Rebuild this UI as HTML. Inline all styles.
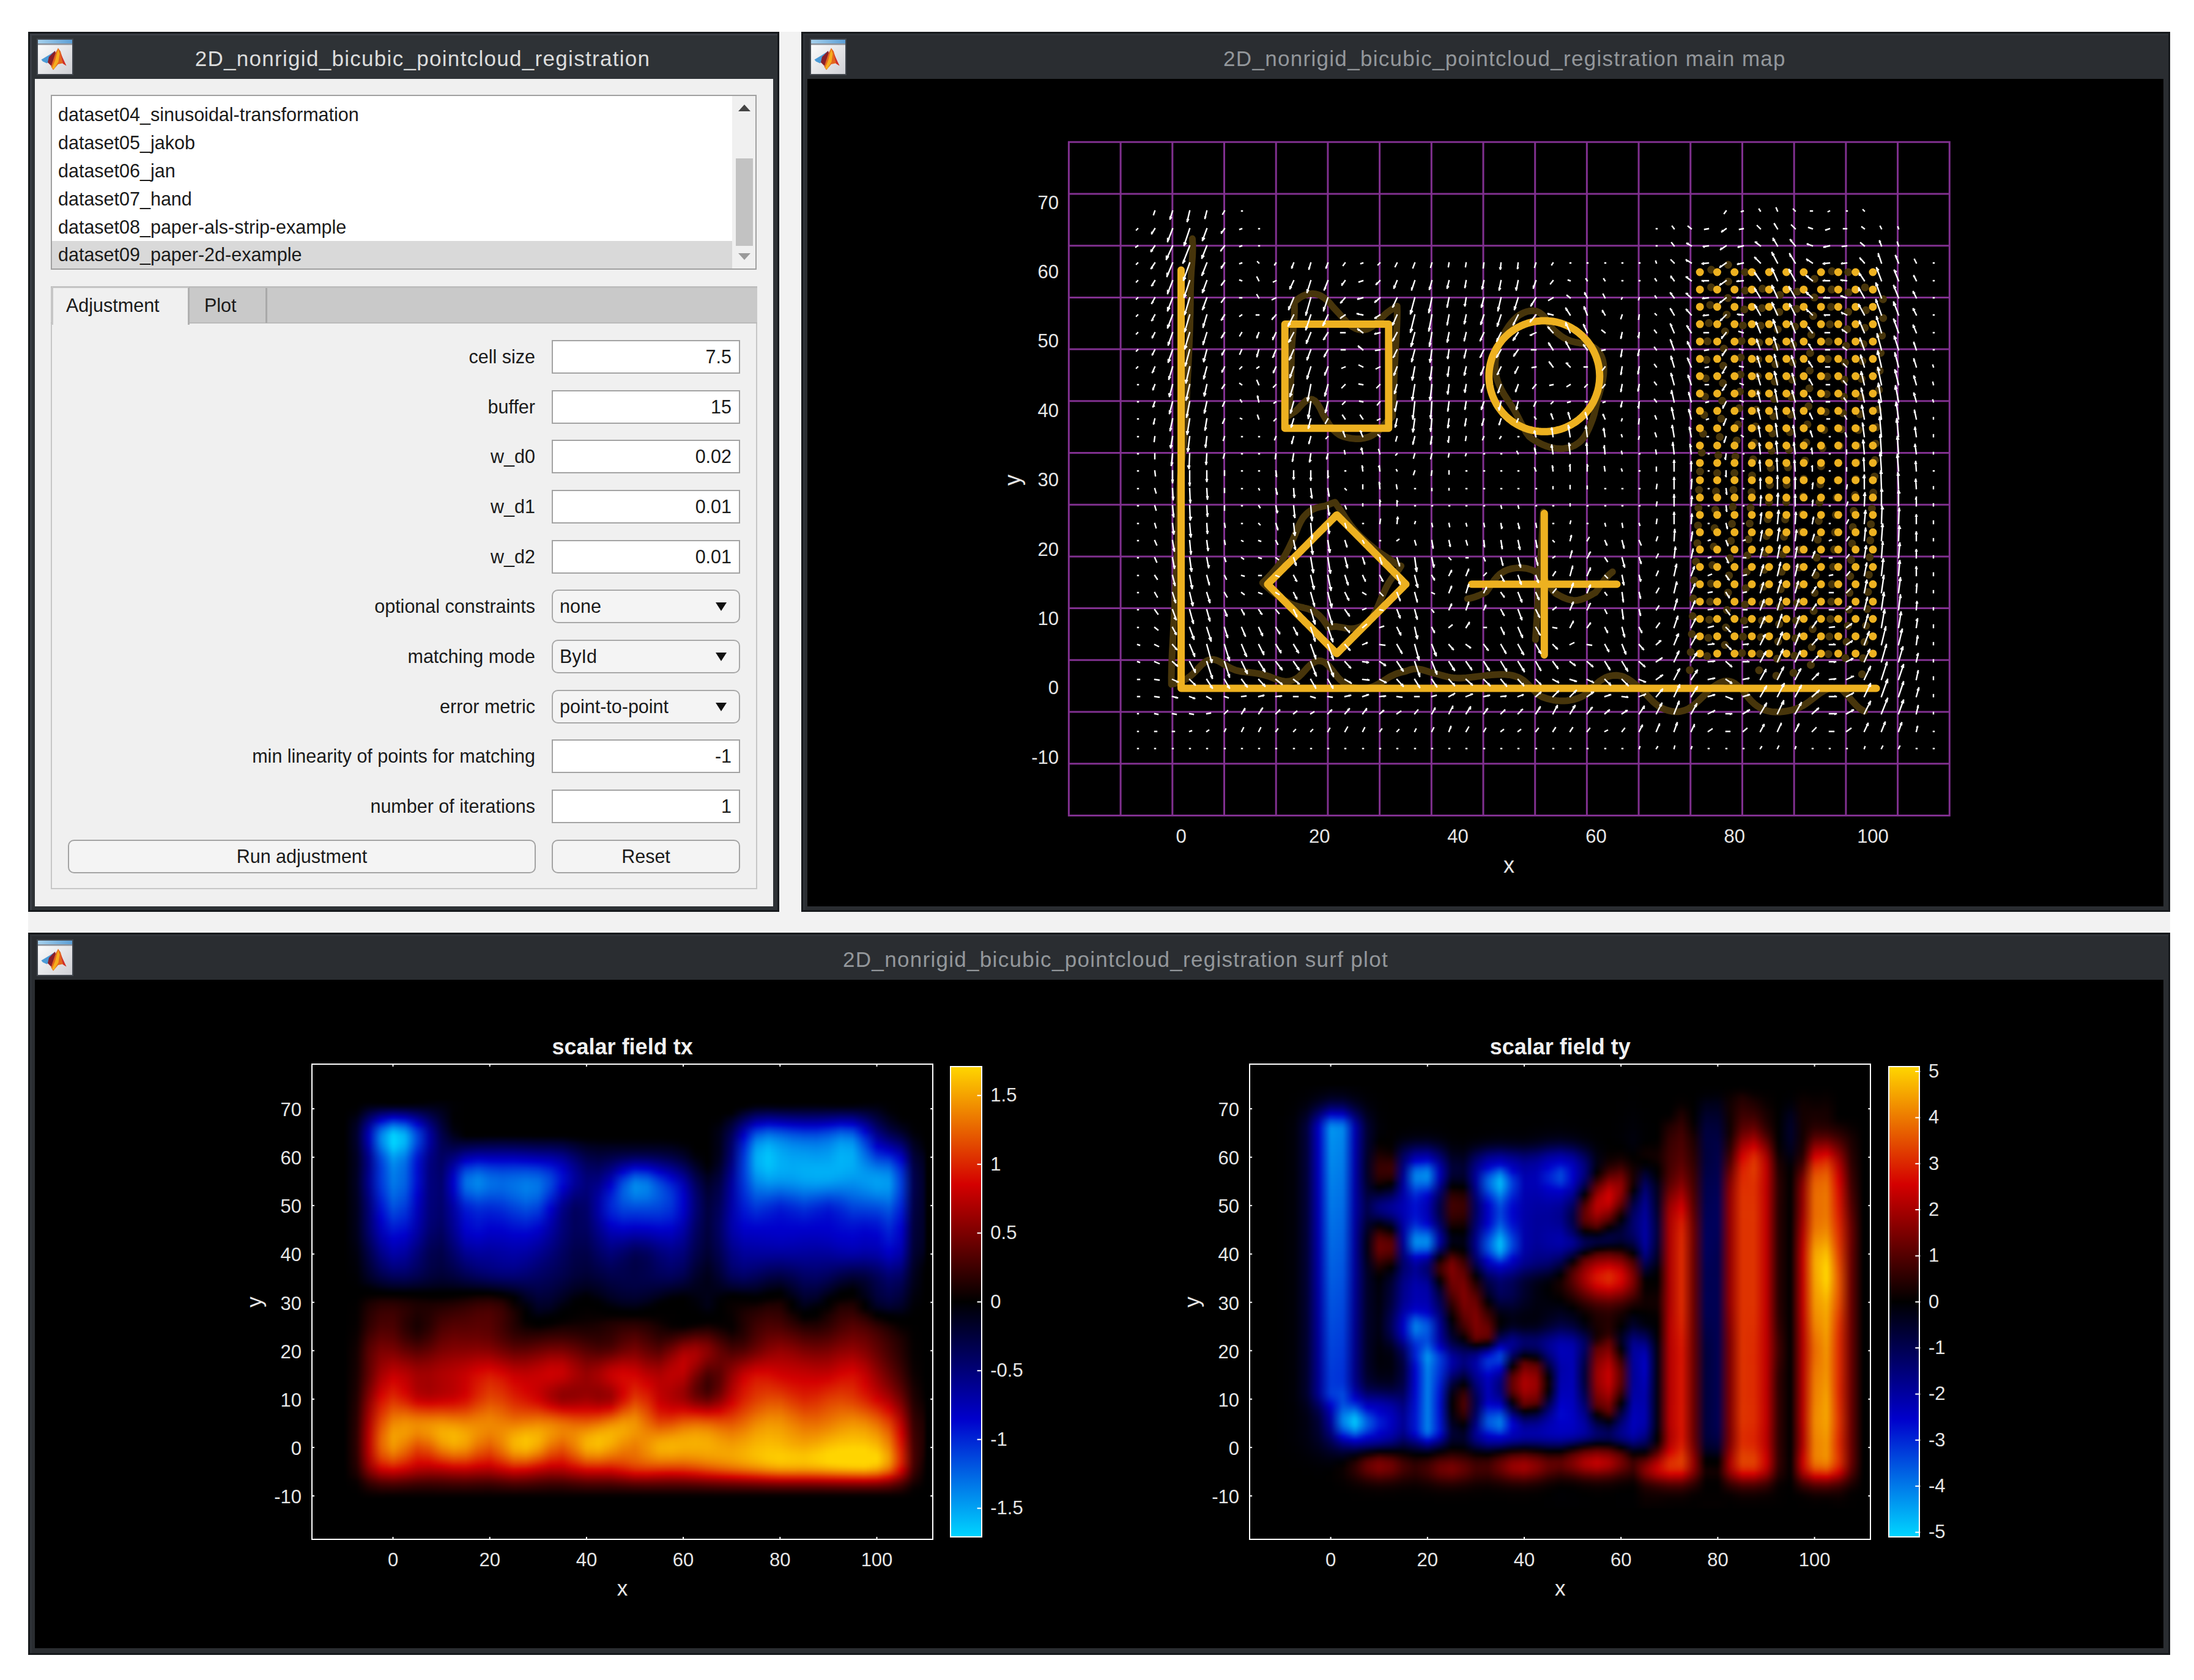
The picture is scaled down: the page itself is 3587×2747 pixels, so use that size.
<!DOCTYPE html>
<html><head><meta charset="utf-8">
<style>
*{box-sizing:border-box;margin:0;padding:0}
html,body{width:3587px;height:2747px;overflow:hidden;background:#fff;font-family:"Liberation Sans",sans-serif}
.abs{position:absolute}
.backdrop{position:absolute;left:46px;top:52px;width:3502px;height:2654px;background:#f2f2f2}
.win{position:absolute;background:#16191c}
.win .hl{position:absolute;left:3px;top:3px;right:3px;bottom:3px;background:#3a3e45}
.win .tb{position:absolute;left:6px;top:6px;right:3px;bottom:3px;background:#2e3236}
.win.inact .tb{background:#2a2d31}
.win.inact .hl{background:#2f3338}
.ttl{position:absolute;top:0;height:76px;line-height:76px;font-size:35px;letter-spacing:1.3px;color:#e2e3e3;white-space:nowrap;text-align:center}
.inact .ttl{color:#9da1a5}
.icon{position:absolute;width:57px;height:57px}
.content{position:absolute;background:#f0f0f0;overflow:hidden}
.ui{font-size:30.5px;color:#1a1a1a;white-space:nowrap}
.lbl{position:absolute;right:0;text-align:right}
.edit{position:absolute;left:845px;width:308px;height:54px;background:#fff;border:2px solid #a3a3a3;text-align:right;padding-right:12px;line-height:50px}
.pop{position:absolute;left:845px;width:308px;height:54px;background:#f4f4f4;border:2px solid #a8a8a8;border-radius:10px;line-height:50px;padding-left:12px}
.pop .arr{position:absolute;right:14px;top:18px;width:0;height:0;border-left:10px solid transparent;border-right:10px solid transparent;border-top:16px solid #111}
.btn{position:absolute;height:55px;background:#f4f4f4;border:2px solid #a3a3a3;border-radius:10px;text-align:center;line-height:51px}
.mt{font-size:31px;color:#e6e6e6;line-height:36px;white-space:nowrap}
.st{font-size:31px;color:#e6e6e6;line-height:32px;white-space:nowrap}
.stt{font-size:36px;font-weight:bold;color:#f0f0f0;line-height:40px;white-space:nowrap}
</style></head><body>
<div class="backdrop"></div>

<div class="win" style="left:46px;top:52px;width:1228px;height:1439px"><div class="hl"></div><div class="tb"></div></div><div class="ttl" style="left:-109px;width:1600px;top:58px;color:#dcdddd">2D_nonrigid_bicubic_pointcloud_registration</div><svg class="abs" style="left:59px;top:62px" width="62" height="62" viewBox="-3 -3 62 62">
<defs><linearGradient id="ig6265" x1="0" y1="0" x2="1" y2="1"><stop offset="0" stop-color="#ffffff"/><stop offset="1" stop-color="#cfd0d5"/></linearGradient>
<linearGradient id="ib6265" x1="0" y1="0" x2="1" y2="0"><stop offset="0" stop-color="#a6d0ec"/><stop offset="1" stop-color="#5d9fd6"/></linearGradient></defs>
<rect x="-2" y="-2" width="60" height="60" fill="#41464d"/>
<rect x="0" y="0" width="56" height="56" fill="url(#ig6265)"/>
<rect x="0" y="0" width="56" height="6" fill="url(#ib6265)"/>
<rect x="0" y="6" width="56" height="2.5" fill="#8d929b"/>
<polygon points="5.5,32.4 18,25 27,19 29.5,23 21,34 14.6,38.5 8,35.6" fill="#4b9ad6"/>
<polygon points="18,28 28,18 31,30 22,43 16,37" fill="#8a1f2a"/>
<polygon points="33,13.5 37,19 41,33 46.5,42.5 40,38.5 33,40 25,49.5 21.5,44 24,36 29,21" fill="#e4661e"/>
<polygon points="33,15 35.5,23 33.5,36 26,48.5 23,46 28,34 31,22" fill="#f4ad1e"/>
<polygon points="37,22 46.5,42.5 41,39" fill="#cf2f2a"/>
</svg><div class="content" style="left:57px;top:129px;width:1207px;height:1353px;background:#f0f0f0"></div>
<div class="win inact" style="left:1310px;top:52px;width:2238px;height:1439px"><div class="hl"></div><div class="tb"></div></div><div class="ttl" style="left:1660px;width:1600px;top:58px;color:#93979b">2D_nonrigid_bicubic_pointcloud_registration main map</div><svg class="abs" style="left:1323px;top:62px" width="62" height="62" viewBox="-3 -3 62 62">
<defs><linearGradient id="ig132665" x1="0" y1="0" x2="1" y2="1"><stop offset="0" stop-color="#ffffff"/><stop offset="1" stop-color="#cfd0d5"/></linearGradient>
<linearGradient id="ib132665" x1="0" y1="0" x2="1" y2="0"><stop offset="0" stop-color="#a6d0ec"/><stop offset="1" stop-color="#5d9fd6"/></linearGradient></defs>
<rect x="-2" y="-2" width="60" height="60" fill="#41464d"/>
<rect x="0" y="0" width="56" height="56" fill="url(#ig132665)"/>
<rect x="0" y="0" width="56" height="6" fill="url(#ib132665)"/>
<rect x="0" y="6" width="56" height="2.5" fill="#8d929b"/>
<polygon points="5.5,32.4 18,25 27,19 29.5,23 21,34 14.6,38.5 8,35.6" fill="#4b9ad6"/>
<polygon points="18,28 28,18 31,30 22,43 16,37" fill="#8a1f2a"/>
<polygon points="33,13.5 37,19 41,33 46.5,42.5 40,38.5 33,40 25,49.5 21.5,44 24,36 29,21" fill="#e4661e"/>
<polygon points="33,15 35.5,23 33.5,36 26,48.5 23,46 28,34 31,22" fill="#f4ad1e"/>
<polygon points="37,22 46.5,42.5 41,39" fill="#cf2f2a"/>
</svg><div class="content" style="left:1320px;top:129px;width:2217px;height:1353px;background:#000"></div>
<div class="win inact" style="left:46px;top:1525px;width:3502px;height:1181px"><div class="hl"></div><div class="tb"></div></div><div class="ttl" style="left:1024px;width:1600px;top:1531px;color:#93979b">2D_nonrigid_bicubic_pointcloud_registration surf plot</div><svg class="abs" style="left:59px;top:1535px" width="62" height="62" viewBox="-3 -3 62 62">
<defs><linearGradient id="ig621538" x1="0" y1="0" x2="1" y2="1"><stop offset="0" stop-color="#ffffff"/><stop offset="1" stop-color="#cfd0d5"/></linearGradient>
<linearGradient id="ib621538" x1="0" y1="0" x2="1" y2="0"><stop offset="0" stop-color="#a6d0ec"/><stop offset="1" stop-color="#5d9fd6"/></linearGradient></defs>
<rect x="-2" y="-2" width="60" height="60" fill="#41464d"/>
<rect x="0" y="0" width="56" height="56" fill="url(#ig621538)"/>
<rect x="0" y="0" width="56" height="6" fill="url(#ib621538)"/>
<rect x="0" y="6" width="56" height="2.5" fill="#8d929b"/>
<polygon points="5.5,32.4 18,25 27,19 29.5,23 21,34 14.6,38.5 8,35.6" fill="#4b9ad6"/>
<polygon points="18,28 28,18 31,30 22,43 16,37" fill="#8a1f2a"/>
<polygon points="33,13.5 37,19 41,33 46.5,42.5 40,38.5 33,40 25,49.5 21.5,44 24,36 29,21" fill="#e4661e"/>
<polygon points="33,15 35.5,23 33.5,36 26,48.5 23,46 28,34 31,22" fill="#f4ad1e"/>
<polygon points="37,22 46.5,42.5 41,39" fill="#cf2f2a"/>
</svg><div class="content" style="left:57px;top:1602px;width:3480px;height:1093px;background:#000"></div>
<div class="abs" style="left:83px;top:155px;width:1154px;height:286px;border:2px solid #a0a0a0;background:#fff"></div>
<div class="abs" style="left:85px;top:394px;width:1112px;height:45px;background:#d9d9d9"></div>
<div class="abs" style="left:1197px;top:157px;width:38px;height:282px;background:#f0f0f0"></div>
<div class="abs" style="left:1203px;top:259px;width:28px;height:143px;background:#c2c2c2"></div>
<div class="abs" style="left:1207px;top:171px;width:0;height:0;border-left:10px solid transparent;border-right:10px solid transparent;border-bottom:11px solid #444"></div>
<div class="abs" style="left:1207px;top:414px;width:0;height:0;border-left:10px solid transparent;border-right:10px solid transparent;border-top:11px solid #9a9a9a"></div>
<div class="abs ui" style="left:95px;top:169.4px;line-height:36px">dataset04_sinusoidal-transformation</div>
<div class="abs ui" style="left:95px;top:215.2px;line-height:36px">dataset05_jakob</div>
<div class="abs ui" style="left:95px;top:261.0px;line-height:36px">dataset06_jan</div>
<div class="abs ui" style="left:95px;top:306.8px;line-height:36px">dataset07_hand</div>
<div class="abs ui" style="left:95px;top:352.6px;line-height:36px">dataset08_paper-als-strip-example</div>
<div class="abs ui" style="left:95px;top:398.4px;line-height:36px">dataset09_paper-2d-example</div>
<div class="abs" style="left:83px;top:469px;width:1155px;height:985px;border:2px solid #c6c6c6;border-top:none"></div>
<div class="abs" style="left:83px;top:468px;width:1155px;height:61px;background:#c9c9c9;border-top:3px solid #bdbdbd;border-bottom:2px solid #bababa"></div>
<div class="abs" style="left:84px;top:469px;width:226px;height:62px;background:#f0f0f0;border-left:3px solid #c6c6c6;border-top:2px solid #c6c6c6;border-right:3px solid #b0b0b0"></div>
<div class="abs" style="left:434px;top:471px;width:3px;height:57px;background:#a9a9a9"></div>
<div class="abs ui" style="left:108px;top:480.7px;line-height:36px">Adjustment</div>
<div class="abs ui" style="left:334px;top:480.7px;line-height:36px">Plot</div>
<div class="abs ui" style="left:275px;width:600px;text-align:right;top:565.0px;line-height:36px">cell size</div>
<div class="abs ui" style="left:902px;top:556.0px;width:308px;height:55px;background:#fff;border:2px solid #a3a3a3;text-align:right;padding-right:12px;line-height:51px">7.5</div>
<div class="abs ui" style="left:275px;width:600px;text-align:right;top:646.6px;line-height:36px">buffer</div>
<div class="abs ui" style="left:902px;top:637.6px;width:308px;height:55px;background:#fff;border:2px solid #a3a3a3;text-align:right;padding-right:12px;line-height:51px">15</div>
<div class="abs ui" style="left:275px;width:600px;text-align:right;top:728.3px;line-height:36px">w_d0</div>
<div class="abs ui" style="left:902px;top:719.3px;width:308px;height:55px;background:#fff;border:2px solid #a3a3a3;text-align:right;padding-right:12px;line-height:51px">0.02</div>
<div class="abs ui" style="left:275px;width:600px;text-align:right;top:810.0px;line-height:36px">w_d1</div>
<div class="abs ui" style="left:902px;top:801.0px;width:308px;height:55px;background:#fff;border:2px solid #a3a3a3;text-align:right;padding-right:12px;line-height:51px">0.01</div>
<div class="abs ui" style="left:275px;width:600px;text-align:right;top:891.6px;line-height:36px">w_d2</div>
<div class="abs ui" style="left:902px;top:882.6px;width:308px;height:55px;background:#fff;border:2px solid #a3a3a3;text-align:right;padding-right:12px;line-height:51px">0.01</div>
<div class="abs ui" style="left:275px;width:600px;text-align:right;top:973.2px;line-height:36px">optional constraints</div>
<div class="abs ui" style="left:902px;top:964.2px;width:308px;height:55px;background:#f4f4f4;border:2px solid #a8a8a8;border-radius:10px;padding-left:11px;line-height:51px">none<div class="abs" style="left:266px;top:19px;width:0;height:0;border-left:9px solid transparent;border-right:9px solid transparent;border-top:14px solid #111"></div></div>
<div class="abs ui" style="left:275px;width:600px;text-align:right;top:1054.9px;line-height:36px">matching mode</div>
<div class="abs ui" style="left:902px;top:1045.9px;width:308px;height:55px;background:#f4f4f4;border:2px solid #a8a8a8;border-radius:10px;padding-left:11px;line-height:51px">ById<div class="abs" style="left:266px;top:19px;width:0;height:0;border-left:9px solid transparent;border-right:9px solid transparent;border-top:14px solid #111"></div></div>
<div class="abs ui" style="left:275px;width:600px;text-align:right;top:1136.6px;line-height:36px">error metric</div>
<div class="abs ui" style="left:902px;top:1127.6px;width:308px;height:55px;background:#f4f4f4;border:2px solid #a8a8a8;border-radius:10px;padding-left:11px;line-height:51px">point-to-point<div class="abs" style="left:266px;top:19px;width:0;height:0;border-left:9px solid transparent;border-right:9px solid transparent;border-top:14px solid #111"></div></div>
<div class="abs ui" style="left:275px;width:600px;text-align:right;top:1218.2px;line-height:36px">min linearity of points for matching</div>
<div class="abs ui" style="left:902px;top:1209.2px;width:308px;height:55px;background:#fff;border:2px solid #a3a3a3;text-align:right;padding-right:12px;line-height:51px">-1</div>
<div class="abs ui" style="left:275px;width:600px;text-align:right;top:1299.8px;line-height:36px">number of iterations</div>
<div class="abs ui" style="left:902px;top:1290.8px;width:308px;height:55px;background:#fff;border:2px solid #a3a3a3;text-align:right;padding-right:12px;line-height:51px">1</div>
<div class="abs ui" style="left:111px;top:1372.5px;width:765px;height:55px;background:#f4f4f4;border:2px solid #a3a3a3;border-radius:10px;text-align:center;line-height:51px">Run adjustment</div>
<div class="abs ui" style="left:902px;top:1372.5px;width:308px;height:55px;background:#f4f4f4;border:2px solid #a3a3a3;border-radius:10px;text-align:center;line-height:51px">Reset</div>
<svg class="abs" style="left:0;top:0" width="3587" height="1491" viewBox="0 0 3587 1491">
<path d="M1747.4 230.8V1334.9M1832.1 230.8V1334.9M1916.8 230.8V1334.9M2001.5 230.8V1334.9M2086.2 230.8V1334.9M2170.9 230.8V1334.9M2255.6 230.8V1334.9M2340.3 230.8V1334.9M2425.0 230.8V1334.9M2509.7 230.8V1334.9M2594.4 230.8V1334.9M2679.1 230.8V1334.9M2763.8 230.8V1334.9M2848.5 230.8V1334.9M2933.2 230.8V1334.9M3017.9 230.8V1334.9M3102.6 230.8V1334.9M3187.3 230.8V1334.9M1745.9 232.3H3188.8M1745.9 317.0H3188.8M1745.9 401.7H3188.8M1745.9 486.4H3188.8M1745.9 571.1H3188.8M1745.9 655.8H3188.8M1745.9 740.5H3188.8M1745.9 825.2H3188.8M1745.9 909.9H3188.8M1745.9 994.6H3188.8M1745.9 1079.3H3188.8M1745.9 1164.0H3188.8M1745.9 1248.7H3188.8M1745.9 1333.4H3188.8" stroke="#80308f" stroke-width="3" fill="none"/>
<path d="M1949.4 390.3 1949.7 395.1 1950.0 399.8 1950.0 404.5 1949.9 409.1 1949.8 413.8 1949.6 418.4 1949.3 423.0 1948.9 427.5 1948.6 432.1 1948.2 436.6 1947.9 441.2 1947.5 445.9 1947.3 450.5 1947.0 455.2 1946.9 459.8 1946.7 464.5 1946.6 469.1 1946.5 473.8 1946.4 478.4 1946.3 483.1 1946.3 487.8 1946.2 492.4 1946.2 497.1 1946.1 501.8 1946.0 506.4 1946.0 511.1 1945.9 515.7 1945.7 520.4 1945.6 525.0 1945.5 529.7 1945.4 534.4 1945.2 539.0 1945.0 543.7 1944.9 548.3 1944.7 553.0 1944.5 557.6 1944.3 562.3 1944.1 566.9 1943.9 571.6 1943.7 576.2 1943.5 580.9 1943.3 585.6 1943.1 590.2 1942.8 594.9 1942.6 599.5 1942.4 604.2 1942.1 608.8 1941.9 613.5 1941.7 618.2 1941.4 622.9 1941.2 627.6 1941.0 632.3 1940.7 637.0 1940.5 641.7 1940.3 646.4 1940.0 651.1 1939.8 655.8 1939.6 660.5 1939.3 665.2 1939.1 669.9 1938.8 674.6 1938.6 679.3 1938.3 684.0 1938.0 688.7 1937.8 693.4 1937.5 698.1 1937.1 702.9 1936.8 707.6 1936.4 712.4 1936.0 717.1 1935.6 721.9 1935.2 726.8 1934.7 731.6 1934.2 736.4 1933.7 741.2 1933.1 746.1 1932.6 750.9 1931.9 755.8 1931.3 760.6 1931.0 765.3 1930.7 770.2 1930.2 775.1 1929.7 779.9 1929.3 784.8 1929.0 789.6 1928.8 794.3 1928.6 799.1 1928.4 803.8 1928.2 808.5 1928.1 813.3 1928.0 818.0 1927.9 822.7 1927.8 827.4 1927.7 832.1 1927.6 836.7 1927.5 841.4 1927.4 846.2 1927.3 850.9 1927.1 855.6 1927.0 860.3 1926.8 865.1 1926.6 869.8 1926.4 874.5 1926.2 879.3 1926.0 884.1 1925.7 888.8 1925.5 893.6 1925.3 898.4 1925.0 903.2 1924.7 907.9 1924.5 912.7 1924.2 917.5 1923.9 922.3 1923.7 927.1 1923.4 931.9 1923.1 936.7 1922.9 941.5 1922.6 946.3 1922.4 951.0 1922.2 955.8 1921.9 960.5 1921.7 965.3 1921.5 970.0 1921.3 974.7 1921.1 979.3 1920.9 984.0 1920.7 988.6 1920.4 993.3 1920.2 998.5 1919.9 1004.3 1919.5 1010.9 1919.1 1017.9 1918.7 1025.1 1918.3 1032.1 1918.0 1038.7 1917.6 1044.9 1917.3 1050.7 1917.0 1056.3 1916.7 1061.6 1916.4 1066.9 1916.2 1072.0 1916.0 1077.1 1915.7 1082.2 1915.6 1087.4 1915.4 1092.6 1915.3 1097.8 1915.2 1103.0 1915.1 1108.3 1915.2 1113.7 1915.2 1119.0 1915.2 1119.0 1919.4 1118.0 1923.6 1116.9 1927.9 1115.5 1932.2 1113.8 1936.7 1111.6 1941.3 1108.9 1945.9 1105.6 1950.5 1101.6 1955.1 1097.0 1959.8 1092.0 1964.4 1087.1 1969.1 1083.1 1973.7 1080.1 1978.3 1078.5 1983.0 1078.2 1987.6 1079.1 1992.2 1080.9 1996.7 1083.4 2001.3 1086.2 2005.7 1088.9 2010.2 1091.5 2014.6 1093.7 2019.0 1095.4 2023.3 1096.7 2027.6 1097.7 2031.9 1098.3 2036.2 1098.8 2040.6 1099.3 2044.9 1099.8 2049.3 1100.3 2053.7 1100.9 2058.1 1101.7 2062.6 1102.7 2067.1 1103.8 2071.6 1105.1 2076.2 1106.6 2080.8 1108.4 2085.4 1110.1 2090.1 1111.8 2094.8 1113.1 2099.6 1114.0 2104.3 1114.2 2109.1 1113.7 2113.9 1112.3 2118.6 1110.0 2123.3 1106.7 2128.0 1102.3 2132.6 1097.3 2137.1 1092.2 2141.7 1087.6 2146.2 1084.0 2150.8 1081.6 2155.3 1080.5 2159.9 1080.8 2164.4 1082.4 2169.0 1085.7 2173.5 1090.2 2178.0 1095.7 2182.4 1101.4 2186.7 1106.8 2191.0 1111.4 2195.3 1115.3 2199.6 1118.4 2203.8 1120.8 2208.1 1122.8 2212.4 1124.1 2216.7 1125.0 2221.1 1125.6 2225.5 1125.9 2229.9 1125.8 2234.3 1125.3 2238.8 1124.4 2243.3 1123.1 2247.8 1121.3 2252.4 1119.0 2257.0 1116.3 2261.6 1113.3 2266.3 1110.3 2271.0 1107.4 2275.8 1104.9 2280.5 1102.7 2285.3 1100.9 2290.1 1099.5 2294.9 1098.3 2299.6 1097.1 2304.4 1095.4 2309.1 1094.1 2313.8 1093.6 2318.5 1093.8 2323.2 1094.6 2327.8 1095.9 2332.4 1097.3 2336.9 1098.7 2341.3 1099.9 2345.7 1101.1 2350.1 1102.3 2354.4 1103.5 2358.6 1104.6 2362.9 1105.8 2367.1 1106.9 2371.4 1107.7 2375.6 1108.2 2379.9 1108.6 2384.2 1108.7 2388.5 1108.7 2392.9 1108.5 2397.4 1108.2 2401.8 1107.7 2406.3 1107.3 2410.8 1106.7 2415.4 1106.1 2419.9 1105.6 2424.5 1105.1 2429.1 1104.6 2433.8 1104.1 2438.4 1103.6 2443.1 1103.3 2447.8 1103.0 2452.5 1102.8 2457.2 1102.8 2461.9 1103.0 2466.7 1103.4 2471.4 1104.1 2476.2 1105.3 2481.0 1107.1 2485.8 1109.3 2490.5 1112.4 2495.2 1116.2 2499.8 1120.5 2504.3 1125.1 2508.8 1129.8 2513.2 1134.2 2517.6 1137.5 2522.0 1139.8 2526.4 1141.3 2530.7 1142.7 2535.1 1143.7 2539.5 1144.7 2543.9 1145.4 2548.4 1145.8 2552.8 1146.0 2557.2 1146.0 2561.7 1145.7 2566.1 1145.2 2570.6 1144.4 2575.1 1143.2 2579.5 1141.8 2583.9 1140.2 2588.4 1137.9 2592.8 1134.7 2597.3 1130.6 2601.7 1126.2 2606.3 1121.7 2610.8 1117.6 2615.3 1113.8 2619.9 1110.7 2624.4 1108.2 2629.0 1106.3 2633.5 1105.1 2638.1 1104.4 2642.6 1104.3 2647.1 1104.8 2651.6 1105.7 2656.1 1107.3 2660.7 1109.6 2665.2 1112.5 2669.8 1115.9 2674.3 1119.6 2678.9 1123.5 2683.5 1126.2 2688.1 1131.9 2692.7 1137.0 2697.4 1142.0 2702.0 1146.8 2706.7 1150.9 2711.4 1154.4 2716.0 1157.2 2720.6 1159.4 2725.3 1161.1 2729.8 1162.4 2734.4 1163.3 2738.8 1163.8 2743.3 1163.7 2747.7 1163.2 2752.0 1162.2 2756.3 1160.7 2760.6 1158.6 2764.8 1155.9 2769.1 1152.9 2773.3 1149.3 2777.7 1145.3 2782.1 1141.1 2786.6 1136.7 2791.1 1132.0 2795.7 1126.2 2800.2 1123.6 2804.8 1120.6 2809.4 1117.7 2814.0 1115.4 2818.6 1113.9 2823.2 1113.5 2827.7 1113.9 2832.3 1115.3 2836.8 1117.8 2841.2 1121.4 2845.7 1124.5 2850.1 1129.5 2854.4 1136.1 2858.8 1141.3 2863.3 1146.3 2867.8 1150.6 2872.4 1154.2 2877.1 1157.2 2881.7 1159.6 2886.3 1161.5 2890.9 1162.7 2895.5 1163.6 2900.0 1164.1 2904.5 1164.3 2909.0 1164.2 2913.4 1163.8 2917.8 1163.2 2922.3 1162.5 2926.6 1161.6 2931.0 1160.6 2935.4 1159.3 2939.7 1157.7 2944.2 1155.7 2948.6 1153.4 2953.2 1150.4 2957.7 1147.1 2962.2 1143.7 2966.8 1140.1 2971.3 1136.7 2975.8 1133.4 2980.4 1130.5 2985.0 1127.9 2989.6 1126.0 2994.1 1125.4 2998.6 1125.4 3003.2 1125.4 3007.7 1126.0 3012.1 1128.0 3016.6 1133.0 3021.1 1137.8 3025.6 1143.0 3030.2 1148.3 3034.7 1153.2 3039.2 1157.4 3043.7 1160.6 3048.3 1163.1M2107.3 679.5 2112.1 676.2 2117.0 673.1 2121.8 668.8 2126.6 663.4 2131.4 658.5 2136.1 654.6 2140.7 652.7 2145.2 652.9 2149.7 655.3 2154.1 660.3 2158.5 668.0 2162.9 677.4 2167.3 684.8 2171.7 691.9 2176.2 698.2 2180.6 703.4 2185.0 707.6 2189.5 710.9 2194.0 713.0 2198.5 714.5 2203.0 715.6 2207.5 716.5 2212.1 717.1 2216.6 717.5 2221.2 717.5 2225.7 717.2 2230.3 716.4 2234.9 715.2 2239.4 713.7 2244.0 711.5 2248.6 708.5 2253.3 704.8 2257.9 700.2 2262.6 695.1 2267.2 690.0 2271.9 685.3 2276.5 681.1 2276.5 681.1 2276.7 675.1 2276.9 669.3 2277.2 663.7 2277.4 658.4 2277.6 653.3 2277.9 648.5 2278.1 643.8 2278.3 639.3 2278.5 634.9 2278.7 630.5 2278.9 626.2 2279.1 622.0 2279.3 617.7 2279.5 613.4 2279.7 609.1 2279.9 604.8 2280.1 600.5 2280.3 596.0 2280.5 591.6 2280.8 587.1 2281.0 582.5 2281.2 577.8 2281.5 573.1 2281.7 568.3 2282.0 563.4 2282.3 558.4 2282.6 553.3 2282.9 548.1 2283.2 542.7 2283.5 537.3 2283.8 531.9 2284.0 526.3 2284.2 520.6 2284.3 515.0 2284.4 509.7 2284.3 504.9 2284.2 500.4 2284.2 500.4 2280.0 503.3 2275.7 505.6 2271.4 508.5 2267.0 511.9 2262.6 515.9 2258.1 520.5 2253.5 525.3 2248.8 529.8 2244.0 533.5 2239.3 536.4 2234.6 538.4 2229.8 539.4 2225.1 539.6 2220.4 538.7 2215.8 537.0 2211.2 534.5 2206.6 531.3 2202.1 527.1 2197.5 522.3 2193.0 517.0 2188.4 511.7 2183.8 506.7 2179.2 501.9 2174.4 496.0 2169.7 491.0 2164.9 487.1 2160.2 484.1 2155.6 482.0 2151.0 480.7 2146.6 480.1 2142.1 480.4 2137.7 481.2 2133.3 482.6 2129.0 484.4 2124.7 487.0 2120.5 490.1 2116.1 494.0 2116.1 494.0 2116.3 498.6 2116.4 503.9 2116.4 509.6 2116.1 515.6 2115.8 521.6 2115.4 527.3 2114.9 532.7 2114.4 537.9 2114.0 542.9 2113.5 547.7 2113.1 552.4 2112.7 557.1 2112.4 561.7 2112.1 566.4 2111.9 571.0 2111.7 575.7 2111.6 580.3 2111.4 585.0 2111.3 589.6 2111.2 594.2 2111.1 598.7 2111.0 603.1 2110.9 607.4 2110.8 611.5 2110.7 615.7 2110.5 619.8 2110.3 624.0 2110.1 628.3 2109.9 632.8 2109.7 637.6 2109.4 642.8 2109.0 648.5 2108.7 654.6 2108.3 660.9 2107.9 667.2 2107.6 673.4 2107.3 679.5M2622.1 606.4 2622.1 602.2 2621.9 598.1 2621.4 594.3 2620.8 590.6 2619.9 587.2 2618.7 583.9 2617.4 580.9 2615.9 578.2 2614.1 575.6 2612.1 573.3 2610.0 571.2 2607.6 569.3 2605.0 567.6 2602.2 566.2 2599.3 564.9 2596.2 563.7 2592.8 562.7 2589.4 561.9 2585.7 561.2 2581.9 560.7 2578.0 560.0 2573.9 559.2 2569.7 558.2 2565.5 556.6 2561.1 554.7 2556.7 552.4 2552.3 549.5 2547.9 546.1 2543.5 542.4 2539.1 538.6 2534.8 532.8 2530.4 525.7 2526.0 519.4 2521.5 514.6 2517.0 511.3 2512.6 509.2 2508.2 508.2 2503.8 508.2 2499.5 508.7 2495.3 509.8 2491.1 511.4 2487.0 513.5 2483.0 515.9 2479.1 519.2 2475.4 522.7 2471.8 526.7 2468.4 530.9 2465.2 535.5 2462.2 540.1 2459.4 544.9 2456.9 549.8 2454.6 554.7 2452.6 559.6 2450.8 564.5 2449.2 569.3 2447.8 574.1 2446.7 578.9 2445.8 583.7 2445.1 588.4 2444.7 593.1 2444.5 597.7 2444.6 602.3 2445.0 606.8 2445.6 611.2 2446.4 615.5 2447.5 619.8 2448.8 624.0 2450.4 628.1 2452.2 632.2 2454.1 636.2 2456.3 640.2 2458.6 644.2 2461.2 648.2 2463.9 652.4 2466.7 656.7 2469.7 661.2 2472.9 666.1 2476.2 671.5 2479.6 677.6 2483.3 684.6 2487.2 692.4 2491.4 700.4 2495.7 708.0 2500.2 713.8 2504.8 717.4 2509.4 720.3 2514.2 723.1 2518.9 725.5 2523.7 727.7 2528.4 729.5 2533.2 731.0 2537.9 732.2 2542.6 733.1 2547.3 733.6 2551.9 733.7 2556.5 733.4 2561.0 732.8 2565.4 731.8 2569.8 730.3 2574.1 728.5 2578.3 725.9 2582.3 723.0 2586.3 719.2 2590.1 714.4 2593.7 708.6 2597.2 701.8 2600.4 694.2 2603.5 686.3 2606.3 677.6 2609.1 665.6 2611.5 655.1 2613.7 647.2 2615.6 640.8 2617.2 635.0 2618.6 629.7 2619.8 624.8 2620.7 620.0 2621.4 615.3 2621.9 610.8 2622.1 606.4M2182.5 821.3 2185.8 825.9 2189.2 830.7 2192.6 835.7 2195.9 840.8 2199.2 845.9 2202.5 850.9 2205.8 855.5 2209.0 859.9 2212.1 863.9 2215.3 867.6 2218.4 871.1 2221.5 874.3 2224.6 877.4 2227.7 880.3 2230.7 883.1 2233.7 885.9 2236.8 888.5 2239.8 891.1 2242.8 893.6 2245.8 896.1 2248.8 898.5 2251.8 900.7 2254.8 903.0 2257.8 905.1 2260.8 907.2 2263.8 909.2 2266.7 911.0 2269.7 913.1 2272.7 915.0 2275.6 916.9 2278.6 919.0 2281.5 921.1 2284.5 922.7 2287.5 924.5 2290.6 925.3 2290.6 925.3 2287.0 931.1 2283.6 935.3 2280.2 939.3 2276.9 943.5 2273.5 948.3 2270.2 953.5 2266.9 959.5 2263.6 966.2 2260.3 973.6 2256.9 981.6 2253.5 990.0 2250.1 997.5 2246.5 1004.2 2243.0 1009.5 2239.4 1013.7 2235.9 1017.3 2232.4 1019.9 2229.0 1022.2 2225.6 1024.1 2222.2 1025.5 2218.8 1026.7 2215.4 1027.4 2212.0 1027.8 2208.7 1028.0 2205.3 1027.8 2202.0 1027.4 2198.7 1026.8 2195.3 1026.2 2192.0 1025.6 2188.6 1025.1 2185.3 1024.6 2181.9 1024.6 2178.6 1024.7 2175.2 1025.3 2171.8 1026.3 2171.8 1026.3 2168.8 1021.3 2165.8 1017.0 2162.7 1012.8 2159.6 1009.4 2156.6 1006.2 2153.5 1003.6 2150.5 1001.3 2147.4 999.5 2144.3 997.9 2141.3 996.6 2138.2 995.6 2135.2 994.7 2132.2 994.0 2129.1 993.2 2126.1 992.5 2123.1 991.8 2120.0 990.9 2117.0 990.0 2114.0 988.8 2110.9 987.6 2107.9 986.1 2104.8 984.5 2101.8 982.8 2098.7 980.9 2095.6 978.9 2092.5 976.6 2089.4 974.4 2086.2 972.0 2083.1 969.5 2079.9 966.9 2076.8 964.3 2073.6 961.6 2070.4 958.8 2067.3 955.9 2064.2 953.0 2064.2 953.0 2067.4 949.9 2070.6 946.7 2073.9 943.3 2077.2 939.9 2080.5 936.2 2083.9 932.4 2087.3 928.2 2090.7 923.7 2094.2 918.7 2097.7 913.2 2101.2 907.3 2104.8 900.6 2108.4 893.4 2112.0 885.8 2115.6 878.2 2119.1 869.9 2122.6 861.1 2126.1 853.7 2129.5 847.7 2132.8 843.5 2136.1 840.1 2139.4 837.3 2142.7 835.0 2145.9 833.1 2149.2 831.7 2152.5 830.4 2155.8 829.5 2159.1 828.7 2162.4 828.0 2165.7 827.4 2169.0 826.5 2172.4 825.0 2175.7 823.6 2179.1 822.3 2182.5 821.3M2523.2 837.2 2523.0 841.0 2522.8 844.7 2522.6 848.3 2522.4 851.8 2522.3 855.3 2522.1 858.7 2521.9 862.0 2521.8 865.4 2521.6 868.9 2521.4 872.4 2521.2 876.1 2521.0 879.9 2520.8 884.0 2520.6 888.2 2520.3 892.6 2520.0 897.1 2519.7 901.8 2519.4 906.5 2519.1 911.2 2518.7 916.0 2518.4 920.7 2518.0 925.5 2517.7 930.1 2517.3 934.8 2517.0 939.3 2516.7 943.9 2516.4 948.4 2516.1 952.8 2515.8 957.2 2515.5 961.6 2515.2 966.0 2515.0 970.3 2514.8 974.7 2514.5 978.9 2514.3 983.2 2514.1 987.4 2513.8 991.6 2513.6 995.8 2513.4 1000.0 2513.1 1004.2 2512.9 1008.4 2512.6 1012.6 2512.3 1016.8 2512.0 1020.9 2511.8 1025.1 2511.5 1029.2 2511.2 1033.4 2510.9 1037.6 2510.6 1041.8 2510.3 1046.0M2399.2 979.1 2403.6 978.3 2408.1 977.1 2412.5 975.7 2416.9 974.0 2421.2 972.2 2425.5 970.3 2429.7 967.8 2433.9 962.4 2438.2 955.4 2442.8 948.8 2447.5 943.3 2452.2 938.8 2457.0 935.4 2461.7 933.0 2466.3 931.2 2471.0 929.9 2475.6 929.1 2480.2 928.6 2484.8 928.5 2489.4 928.7 2494.0 929.2 2498.6 930.2 2503.3 931.5 2507.9 933.4 2512.5 936.0 2517.0 939.3 2521.5 943.4 2525.9 948.3 2530.3 954.1 2534.6 960.6 2539.0 966.2 2543.6 970.4 2548.2 973.0 2552.9 975.5 2557.5 977.7 2562.1 979.5 2566.7 980.7 2571.3 981.5 2575.9 981.7 2580.5 981.2 2585.1 980.1 2589.6 978.5 2594.2 976.5 2598.8 974.1 2603.5 971.6 2608.2 968.9 2612.8 963.3 2617.4 956.4 2622.0 949.8 2626.7 943.9 2631.5 938.9 2636.3 934.9" stroke="#47350b" stroke-width="11" fill="none" stroke-linecap="round" stroke-linejoin="round"/>
<path d="M2762.7 1095.7h0M2764.2 1066.3h0M2766.0 1036.8h0M2767.4 1007.5h0M2768.3 978.6h0M2769.8 949.0h0M2772.7 918.4h0M2775.0 888.3h0M2776.1 859.2h0M2776.8 830.4h0M2777.8 801.1h0M2779.4 771.1h0M2782.2 739.9h0M2784.4 709.1h0M2786.2 678.4h0M2787.6 648.5h0M2788.7 618.7h0M2790.0 588.3h0M2791.6 558.1h0M2793.8 528.3h0M2796.0 498.7h0M2797.6 469.7h0M2797.8 441.0h0M2791.1 1072.8h0M2792.9 1043.0h0M2794.6 1013.2h0M2795.8 983.8h0M2797.4 954.2h0M2799.7 924.1h0M2801.8 893.8h0M2803.2 863.6h0M2804.4 833.4h0M2805.5 803.6h0M2807.5 773.6h0M2809.3 744.4h0M2811.7 714.5h0M2814.0 684.6h0M2815.7 655.3h0M2816.8 626.4h0M2817.5 598.1h0M2818.5 570.0h0M2820.4 542.1h0M2823.0 514.4h0M2824.9 487.3h0M2825.5 460.4h0M2825.3 433.0h0M2820.0 1054.6h0M2821.7 1026.0h0M2823.5 997.5h0M2825.2 969.1h0M2826.8 940.9h0M2828.3 912.8h0M2829.9 884.5h0M2831.6 856.6h0M2832.9 828.8h0M2834.0 800.9h0M2835.6 773.5h0M2837.2 746.5h0M2839.4 720.2h0M2841.5 694.0h0M2843.4 667.6h0M2844.7 640.3h0M2845.5 612.4h0M2846.0 584.5h0M2847.2 557.7h0M2849.4 532.2h0M2851.9 505.9h0M2853.1 475.1h0M2852.9 445.0h0M2848.1 1067.8h0M2849.6 1041.1h0M2851.4 1014.8h0M2853.0 988.4h0M2854.4 961.7h0M2855.7 934.7h0M2857.0 907.9h0M2858.7 881.8h0M2860.5 856.0h0M2862.1 830.3h0M2863.7 804.6h0M2864.5 777.6h0M2866.4 751.0h0M2868.1 724.1h0M2869.9 697.3h0M2871.5 670.1h0M2872.8 642.7h0M2873.7 615.1h0M2874.6 587.6h0M2876.1 560.1h0M2878.5 532.4h0M2880.8 503.7h0M2881.5 472.0h0M2876.0 1096.0h0M2877.3 1069.1h0M2878.9 1042.1h0M2880.7 1014.7h0M2882.0 987.0h0M2883.1 959.2h0M2884.4 931.6h0M2886.2 904.1h0M2888.2 876.5h0M2890.1 848.8h0M2892.2 821.2h0M2893.6 793.0h0M2895.1 764.9h0M2896.5 736.8h0M2897.9 708.7h0M2899.3 680.4h0M2900.5 652.1h0M2901.6 623.8h0M2902.7 595.6h0M2904.0 567.3h0M2906.4 538.7h0M2908.9 510.2h0M2910.0 482.2h0M2904.1 1104.9h0M2905.6 1077.1h0M2907.2 1049.1h0M2908.8 1020.4h0M2910.1 991.8h0M2911.3 963.3h0M2912.9 934.8h0M2914.7 906.2h0M2916.7 877.6h0M2918.6 849.2h0M2920.3 820.9h0M2921.1 792.7h0M2923.1 764.1h0M2924.8 735.4h0M2926.3 706.7h0M2927.6 678.0h0M2928.9 649.3h0M2930.0 620.7h0M2930.7 592.3h0M2931.8 563.6h0M2934.6 534.1h0M2937.4 505.0h0M2938.3 476.9h0M2932.2 1100.2h0M2933.8 1072.2h0M2935.3 1043.7h0M2936.7 1014.7h0M2938.2 985.9h0M2939.9 956.9h0M2941.6 927.8h0M2943.3 898.8h0M2945.2 869.7h0M2946.8 840.7h0M2947.9 811.8h0M2948.9 782.9h0M2950.9 753.2h0M2953.1 723.5h0M2955.0 693.9h0M2956.7 664.3h0M2958.1 634.9h0M2958.8 606.0h0M2959.4 577.2h0M2961.3 547.3h0M2964.4 516.6h0M2966.3 486.3h0M2966.5 455.9h0M2960.6 1087.2h0M2962.1 1058.1h0M2963.6 1028.6h0M2965.2 999.0h0M2966.8 969.4h0M2968.5 940.4h0M2970.1 911.8h0M2971.9 882.3h0M2973.5 851.7h0M2974.7 821.6h0M2975.9 791.9h0M2977.3 762.5h0M2979.6 732.8h0M2982.3 702.9h0M2984.9 673.4h0M2986.4 644.4h0M2987.3 615.7h0M2988.2 587.1h0M2989.7 558.6h0M2991.7 530.3h0M2993.6 501.7h0M2994.7 473.3h0M2995.0 443.5h0M2989.2 1069.4h0M2990.9 1040.8h0M2992.7 1012.2h0M2994.0 983.7h0M2995.2 955.3h0M2996.9 927.0h0M2998.7 898.6h0M3000.2 870.3h0M3001.5 841.9h0M3002.9 813.6h0M3004.3 785.2h0M3005.5 756.9h0M3007.7 729.2h0M3010.4 701.7h0M3013.0 675.6h0M3014.5 648.7h0M3015.3 620.8h0M3016.5 593.0h0M3018.2 565.4h0M3020.0 538.2h0M3021.6 510.1h0M3022.3 478.1h0M3021.7 444.9h0M3017.0 1076.0h0M3019.0 1049.6h0M3021.1 1023.3h0M3022.7 996.6h0M3023.7 969.3h0M3024.9 942.2h0M3026.5 915.6h0M3028.0 888.8h0M3029.2 861.8h0M3030.6 835.3h0M3032.6 809.6h0M3034.1 783.3h0M3035.3 756.3h0M3036.5 729.1h0M3038.6 703.1h0M3040.9 677.3h0M3042.4 649.2h0M3043.4 619.4h0M3044.8 590.4h0M3046.6 562.6h0M3048.8 535.9h0M3050.5 507.3h0M3049.1 469.9h0M3044.3 1102.5h0M3046.0 1076.2h0M3048.3 1049.8h0M3050.8 1023.1h0M3052.8 995.8h0M3054.1 968.0h0M3055.4 939.7h0M3056.7 911.2h0M3057.7 883.6h0M3058.7 857.2h0M3060.5 831.4h0M3062.6 805.5h0M3064.7 779.2h0M3065.4 752.3h0M3066.3 725.4h0M3068.2 698.5h0M3070.4 669.6h0M3071.9 637.7h0M3073.1 606.2h0M3074.7 577.0h0M3076.8 548.7h0M3078.7 520.0h0M3078.5 489.2h0" stroke="#47350b" stroke-width="13" stroke-linecap="round"/>
<path d="M1931.0 441.6 1931.0 446.2 1931.0 450.7 1931.0 455.3 1931.0 459.8 1931.0 464.4 1931.0 469.0 1931.0 473.5 1931.0 478.1 1931.0 482.6 1931.0 487.2 1931.0 491.7 1931.0 496.3 1931.0 500.9 1931.0 505.4 1931.0 510.0 1931.0 514.5 1931.0 519.1 1931.0 523.7 1931.0 528.2 1931.0 532.8 1931.0 537.3 1931.0 541.9 1931.0 546.4 1931.0 551.0 1931.0 555.6 1931.0 560.1 1931.0 564.7 1931.0 569.2 1931.0 573.8 1931.0 578.4 1931.0 582.9 1931.0 587.5 1931.0 592.0 1931.0 596.6 1931.0 601.2 1931.0 605.7 1931.0 610.3 1931.0 614.8 1931.0 619.4 1931.0 623.9 1931.0 628.5 1931.0 633.1 1931.0 637.6 1931.0 642.2 1931.0 646.7 1931.0 651.3 1931.0 655.9 1931.0 660.4 1931.0 665.0 1931.0 669.5 1931.0 674.1 1931.0 678.6 1931.0 683.2 1931.0 687.8 1931.0 692.3 1931.0 696.9 1931.0 701.4 1931.0 706.0 1931.0 710.6 1931.0 715.1 1931.0 719.7 1931.0 724.2 1931.0 728.8 1931.0 733.4 1931.0 737.9 1931.0 742.5 1931.0 747.0 1931.0 751.6 1931.0 756.1 1931.0 760.7 1931.0 765.3 1931.0 769.8 1931.0 774.4 1931.0 778.9 1931.0 783.5 1931.0 788.1 1931.0 792.6 1931.0 797.2 1931.0 801.7 1931.0 806.3 1931.0 810.9 1931.0 815.4 1931.0 820.0 1931.0 824.5 1931.0 829.1 1931.0 833.6 1931.0 838.2 1931.0 842.8 1931.0 847.3 1931.0 851.9 1931.0 856.4 1931.0 861.0 1931.0 865.6 1931.0 870.1 1931.0 874.7 1931.0 879.2 1931.0 883.8 1931.0 888.3 1931.0 892.9 1931.0 897.5 1931.0 902.0 1931.0 906.6 1931.0 911.1 1931.0 915.7 1931.0 920.3 1931.0 924.8 1931.0 929.4 1931.0 933.9 1931.0 938.5 1931.0 943.1 1931.0 947.6 1931.0 952.2 1931.0 956.7 1931.0 961.3 1931.0 965.8 1931.0 970.4 1931.0 975.0 1931.0 979.5 1931.0 984.1 1931.0 988.6 1931.0 993.2 1931.0 997.8 1931.0 1002.3 1931.0 1006.9 1931.0 1011.4 1931.0 1016.0 1931.0 1020.6 1931.0 1025.1 1931.0 1029.7 1931.0 1034.2 1931.0 1038.8 1931.0 1043.3 1931.0 1047.9 1931.0 1052.5 1931.0 1057.0 1931.0 1061.6 1931.0 1066.1 1931.0 1070.7 1931.0 1075.3 1931.0 1079.8 1931.0 1084.4 1931.0 1088.9 1931.0 1093.5 1931.0 1098.0 1931.0 1102.6 1931.0 1107.2 1931.0 1111.7 1931.0 1116.3 1931.0 1120.8 1931.0 1125.4 1931.0 1125.4 1935.5 1125.4 1940.1 1125.4 1944.6 1125.4 1949.1 1125.4 1953.6 1125.4 1958.2 1125.4 1962.7 1125.4 1967.2 1125.4 1971.8 1125.4 1976.3 1125.4 1980.8 1125.4 1985.3 1125.4 1989.9 1125.4 1994.4 1125.4 1998.9 1125.4 2003.5 1125.4 2008.0 1125.4 2012.5 1125.4 2017.0 1125.4 2021.6 1125.4 2026.1 1125.4 2030.6 1125.4 2035.2 1125.4 2039.7 1125.4 2044.2 1125.4 2048.7 1125.4 2053.3 1125.4 2057.8 1125.4 2062.3 1125.4 2066.9 1125.4 2071.4 1125.4 2075.9 1125.4 2080.4 1125.4 2085.0 1125.4 2089.5 1125.4 2094.0 1125.4 2098.6 1125.4 2103.1 1125.4 2107.6 1125.4 2112.1 1125.4 2116.7 1125.4 2121.2 1125.4 2125.7 1125.4 2130.3 1125.4 2134.8 1125.4 2139.3 1125.4 2143.8 1125.4 2148.4 1125.4 2152.9 1125.4 2157.4 1125.4 2162.0 1125.4 2166.5 1125.4 2171.0 1125.4 2175.5 1125.4 2180.1 1125.4 2184.6 1125.4 2189.1 1125.4 2193.7 1125.4 2198.2 1125.4 2202.7 1125.4 2207.2 1125.4 2211.8 1125.4 2216.3 1125.4 2220.8 1125.4 2225.4 1125.4 2229.9 1125.4 2234.4 1125.4 2238.9 1125.4 2243.5 1125.4 2248.0 1125.4 2252.5 1125.4 2257.1 1125.4 2261.6 1125.4 2266.1 1125.4 2270.6 1125.4 2275.2 1125.4 2279.7 1125.4 2284.2 1125.4 2288.8 1125.4 2293.3 1125.4 2297.8 1125.4 2302.3 1125.4 2306.9 1125.4 2311.4 1125.4 2315.9 1125.4 2320.5 1125.4 2325.0 1125.4 2329.5 1125.4 2334.0 1125.4 2338.6 1125.4 2343.1 1125.4 2347.6 1125.4 2352.2 1125.4 2356.7 1125.4 2361.2 1125.4 2365.7 1125.4 2370.3 1125.4 2374.8 1125.4 2379.3 1125.4 2383.9 1125.4 2388.4 1125.4 2392.9 1125.4 2397.4 1125.4 2402.0 1125.4 2406.5 1125.4 2411.0 1125.4 2415.6 1125.4 2420.1 1125.4 2424.6 1125.4 2429.1 1125.4 2433.7 1125.4 2438.2 1125.4 2442.7 1125.4 2447.2 1125.4 2451.8 1125.4 2456.3 1125.4 2460.8 1125.4 2465.4 1125.4 2469.9 1125.4 2474.4 1125.4 2478.9 1125.4 2483.5 1125.4 2488.0 1125.4 2492.5 1125.4 2497.1 1125.4 2501.6 1125.4 2506.1 1125.4 2510.6 1125.4 2515.2 1125.4 2519.7 1125.4 2524.2 1125.4 2528.8 1125.4 2533.3 1125.4 2537.8 1125.4 2542.3 1125.4 2546.9 1125.4 2551.4 1125.4 2555.9 1125.4 2560.5 1125.4 2565.0 1125.4 2569.5 1125.4 2574.0 1125.4 2578.6 1125.4 2583.1 1125.4 2587.6 1125.4 2592.2 1125.4 2596.7 1125.4 2601.2 1125.4 2605.7 1125.4 2610.3 1125.4 2614.8 1125.4 2619.3 1125.4 2623.9 1125.4 2628.4 1125.4 2632.9 1125.4 2637.4 1125.4 2642.0 1125.4 2646.5 1125.4 2651.0 1125.4 2655.6 1125.4 2660.1 1125.4 2664.6 1125.4 2669.1 1125.4 2673.7 1125.4 2678.2 1125.4 2682.7 1125.4 2687.3 1125.4 2691.8 1125.4 2696.3 1125.4 2700.8 1125.4 2705.4 1125.4 2709.9 1125.4 2714.4 1125.4 2719.0 1125.4 2723.5 1125.4 2728.0 1125.4 2732.5 1125.4 2737.1 1125.4 2741.6 1125.4 2746.1 1125.4 2750.7 1125.4 2755.2 1125.4 2759.7 1125.4 2764.2 1125.4 2768.8 1125.4 2773.3 1125.4 2777.8 1125.4 2782.4 1125.4 2786.9 1125.4 2791.4 1125.4 2795.9 1125.4 2800.5 1125.4 2805.0 1125.4 2809.5 1125.4 2814.1 1125.4 2818.6 1125.4 2823.1 1125.4 2827.6 1125.4 2832.2 1125.4 2836.7 1125.4 2841.2 1125.4 2845.8 1125.4 2850.3 1125.4 2854.8 1125.4 2859.3 1125.4 2863.9 1125.4 2868.4 1125.4 2872.9 1125.4 2877.5 1125.4 2882.0 1125.4 2886.5 1125.4 2891.0 1125.4 2895.6 1125.4 2900.1 1125.4 2904.6 1125.4 2909.2 1125.4 2913.7 1125.4 2918.2 1125.4 2922.7 1125.4 2927.3 1125.4 2931.8 1125.4 2936.3 1125.4 2940.9 1125.4 2945.4 1125.4 2949.9 1125.4 2954.4 1125.4 2959.0 1125.4 2963.5 1125.4 2968.0 1125.4 2972.6 1125.4 2977.1 1125.4 2981.6 1125.4 2986.1 1125.4 2990.7 1125.4 2995.2 1125.4 2999.7 1125.4 3004.3 1125.4 3008.8 1125.4 3013.3 1125.4 3017.8 1125.4 3022.4 1125.4 3026.9 1125.4 3031.4 1125.4 3036.0 1125.4 3040.5 1125.4 3045.0 1125.4 3049.5 1125.4 3054.1 1125.4 3058.6 1125.4 3063.1 1125.4 3067.7 1125.4M2100.7 700.2 2105.2 700.2 2109.8 700.2 2114.4 700.2 2119.0 700.2 2123.6 700.2 2128.2 700.2 2132.7 700.2 2137.3 700.2 2141.9 700.2 2146.5 700.2 2151.1 700.2 2155.7 700.2 2160.3 700.2 2164.8 700.2 2169.4 700.2 2174.0 700.2 2178.6 700.2 2183.2 700.2 2187.8 700.2 2192.4 700.2 2196.9 700.2 2201.5 700.2 2206.1 700.2 2210.7 700.2 2215.3 700.2 2219.9 700.2 2224.4 700.2 2229.0 700.2 2233.6 700.2 2238.2 700.2 2242.8 700.2 2247.4 700.2 2252.0 700.2 2256.5 700.2 2261.1 700.2 2265.7 700.2 2270.3 700.2 2270.3 700.2 2270.3 695.6 2270.3 691.0 2270.3 686.4 2270.3 681.8 2270.3 677.2 2270.3 672.6 2270.3 668.0 2270.3 663.4 2270.3 658.8 2270.3 654.2 2270.3 649.6 2270.3 645.0 2270.3 640.4 2270.3 635.8 2270.3 631.2 2270.3 626.6 2270.3 622.0 2270.3 617.4 2270.3 612.8 2270.3 608.2 2270.3 603.6 2270.3 599.0 2270.3 594.4 2270.3 589.8 2270.3 585.2 2270.3 580.6 2270.3 576.0 2270.3 571.4 2270.3 566.8 2270.3 562.2 2270.3 557.6 2270.3 553.0 2270.3 548.4 2270.3 543.8 2270.3 539.2 2270.3 534.6 2270.3 530.1 2270.3 530.1 2265.7 530.1 2261.1 530.1 2256.5 530.1 2252.0 530.1 2247.4 530.1 2242.8 530.1 2238.2 530.1 2233.6 530.1 2229.0 530.1 2224.4 530.1 2219.9 530.1 2215.3 530.1 2210.7 530.1 2206.1 530.1 2201.5 530.1 2196.9 530.1 2192.4 530.1 2187.8 530.1 2183.2 530.1 2178.6 530.1 2174.0 530.1 2169.4 530.1 2164.8 530.1 2160.3 530.1 2155.7 530.1 2151.1 530.1 2146.5 530.1 2141.9 530.1 2137.3 530.1 2132.7 530.1 2128.2 530.1 2123.6 530.1 2119.0 530.1 2114.4 530.1 2109.8 530.1 2105.2 530.1 2100.7 530.1 2100.7 530.1 2100.7 534.6 2100.7 539.2 2100.7 543.8 2100.7 548.4 2100.7 553.0 2100.7 557.6 2100.7 562.2 2100.7 566.8 2100.7 571.4 2100.7 576.0 2100.7 580.6 2100.7 585.2 2100.7 589.8 2100.7 594.4 2100.7 599.0 2100.7 603.6 2100.7 608.2 2100.7 612.8 2100.7 617.4 2100.7 622.0 2100.7 626.6 2100.7 631.2 2100.7 635.8 2100.7 640.4 2100.7 645.0 2100.7 649.6 2100.7 654.2 2100.7 658.8 2100.7 663.4 2100.7 668.0 2100.7 672.6 2100.7 677.2 2100.7 681.8 2100.7 686.4 2100.7 691.0 2100.7 695.6 2100.7 700.2M2615.3 615.1 2615.1 610.4 2614.8 605.6 2614.1 600.9 2613.3 596.2 2612.2 591.6 2610.8 587.1 2609.2 582.6 2607.4 578.2 2605.4 573.9 2603.1 569.7 2600.7 565.7 2598.0 561.8 2595.1 558.0 2592.0 554.4 2588.8 551.0 2585.3 547.7 2581.7 544.6 2578.0 541.7 2574.1 539.0 2570.0 536.5 2565.9 534.3 2561.6 532.2 2557.2 530.4 2552.7 528.8 2548.2 527.5 2543.6 526.4 2538.9 525.5 2534.2 524.9 2529.5 524.5 2524.8 524.4 2520.0 524.5 2515.3 524.9 2510.6 525.5 2506.0 526.4 2501.4 527.5 2496.8 528.8 2492.3 530.4 2488.0 532.2 2483.7 534.3 2479.5 536.5 2475.5 539.0 2471.6 541.7 2467.8 544.6 2464.2 547.7 2460.8 551.0 2457.5 554.4 2454.5 558.0 2451.6 561.8 2448.9 565.7 2446.4 569.7 2444.2 573.9 2442.1 578.2 2440.3 582.6 2438.7 587.1 2437.4 591.6 2436.3 596.2 2435.4 600.9 2434.8 605.6 2434.4 610.4 2434.3 615.1 2434.4 619.8 2434.8 624.6 2435.4 629.3 2436.3 634.0 2437.4 638.6 2438.7 643.1 2440.3 647.6 2442.1 652.0 2444.2 656.3 2446.4 660.5 2448.9 664.5 2451.6 668.4 2454.5 672.2 2457.5 675.8 2460.8 679.2 2464.2 682.5 2467.8 685.6 2471.6 688.5 2475.5 691.2 2479.5 693.7 2483.7 695.9 2488.0 698.0 2492.3 699.8 2496.8 701.4 2501.4 702.7 2506.0 703.8 2510.6 704.7 2515.3 705.3 2520.0 705.7 2524.8 705.8 2529.5 705.7 2534.2 705.3 2538.9 704.7 2543.6 703.8 2548.2 702.7 2552.7 701.4 2557.2 699.8 2561.6 698.0 2565.9 695.9 2570.0 693.7 2574.1 691.2 2578.0 688.5 2581.7 685.6 2585.3 682.5 2588.8 679.2 2592.0 675.8 2595.1 672.2 2598.0 668.4 2600.7 664.5 2603.1 660.5 2605.4 656.3 2607.4 652.0 2609.2 647.6 2610.8 643.1 2612.2 638.6 2613.3 634.0 2614.1 629.3 2614.8 624.6 2615.1 619.8 2615.3 615.1M2185.5 841.9 2188.7 845.1 2191.9 848.4 2195.2 851.6 2198.4 854.9 2201.6 858.1 2204.9 861.3 2208.1 864.6 2211.3 867.8 2214.6 871.1 2217.8 874.3 2221.0 877.5 2224.3 880.8 2227.5 884.0 2230.7 887.3 2233.9 890.5 2237.2 893.7 2240.4 897.0 2243.6 900.2 2246.9 903.5 2250.1 906.7 2253.3 909.9 2256.6 913.2 2259.8 916.4 2263.0 919.7 2266.3 922.9 2269.5 926.1 2272.7 929.4 2276.0 932.6 2279.2 935.9 2282.4 939.1 2285.6 942.3 2288.9 945.6 2292.1 948.8 2295.3 952.1 2298.6 955.3 2298.6 955.3 2295.3 958.5 2292.1 961.8 2288.9 965.0 2285.6 968.3 2282.4 971.5 2279.2 974.7 2276.0 978.0 2272.7 981.2 2269.5 984.5 2266.3 987.7 2263.0 990.9 2259.8 994.2 2256.6 997.4 2253.3 1000.7 2250.1 1003.9 2246.9 1007.1 2243.6 1010.4 2240.4 1013.6 2237.2 1016.9 2233.9 1020.1 2230.7 1023.3 2227.5 1026.6 2224.3 1029.8 2221.0 1033.1 2217.8 1036.3 2214.6 1039.5 2211.3 1042.8 2208.1 1046.0 2204.9 1049.3 2201.6 1052.5 2198.4 1055.7 2195.2 1059.0 2191.9 1062.2 2188.7 1065.5 2185.5 1068.7 2185.5 1068.7 2182.2 1065.5 2179.0 1062.2 2175.8 1059.0 2172.5 1055.7 2169.3 1052.5 2166.1 1049.3 2162.9 1046.0 2159.6 1042.8 2156.4 1039.5 2153.2 1036.3 2149.9 1033.1 2146.7 1029.8 2143.5 1026.6 2140.2 1023.3 2137.0 1020.1 2133.8 1016.9 2130.5 1013.6 2127.3 1010.4 2124.1 1007.1 2120.8 1003.9 2117.6 1000.7 2114.4 997.4 2111.2 994.2 2107.9 990.9 2104.7 987.7 2101.5 984.5 2098.2 981.2 2095.0 978.0 2091.8 974.7 2088.5 971.5 2085.3 968.3 2082.1 965.0 2078.8 961.8 2075.6 958.5 2072.4 955.3 2072.4 955.3 2075.6 952.1 2078.8 948.8 2082.1 945.6 2085.3 942.3 2088.5 939.1 2091.8 935.9 2095.0 932.6 2098.2 929.4 2101.5 926.1 2104.7 922.9 2107.9 919.7 2111.2 916.4 2114.4 913.2 2117.6 909.9 2120.8 906.7 2124.1 903.5 2127.3 900.2 2130.5 897.0 2133.8 893.7 2137.0 890.5 2140.2 887.3 2143.5 884.0 2146.7 880.8 2149.9 877.5 2153.2 874.3 2156.4 871.1 2159.6 867.8 2162.9 864.6 2166.1 861.3 2169.3 858.1 2172.5 854.9 2175.8 851.6 2179.0 848.4 2182.2 845.1 2185.5 841.9M2524.8 839.6 2524.8 844.3 2524.8 848.9 2524.8 853.5 2524.8 858.1 2524.8 862.8 2524.8 867.4 2524.8 872.0 2524.8 876.6 2524.8 881.3 2524.8 885.9 2524.8 890.5 2524.8 895.2 2524.8 899.8 2524.8 904.4 2524.8 909.0 2524.8 913.7 2524.8 918.3 2524.8 922.9 2524.8 927.5 2524.8 932.2 2524.8 936.8 2524.8 941.4 2524.8 946.0 2524.8 950.7 2524.8 955.3 2524.8 959.9 2524.8 964.6 2524.8 969.2 2524.8 973.8 2524.8 978.4 2524.8 983.1 2524.8 987.7 2524.8 992.3 2524.8 996.9 2524.8 1001.6 2524.8 1006.2 2524.8 1010.8 2524.8 1015.4 2524.8 1020.1 2524.8 1024.7 2524.8 1029.3 2524.8 1034.0 2524.8 1038.6 2524.8 1043.2 2524.8 1047.8 2524.8 1052.5 2524.8 1057.1 2524.8 1061.7 2524.8 1066.3 2524.8 1071.0M2406.0 955.3 2410.6 955.3 2415.2 955.3 2419.7 955.3 2424.3 955.3 2428.9 955.3 2433.4 955.3 2438.0 955.3 2442.6 955.3 2447.1 955.3 2451.7 955.3 2456.3 955.3 2460.8 955.3 2465.4 955.3 2470.0 955.3 2474.5 955.3 2479.1 955.3 2483.7 955.3 2488.2 955.3 2492.8 955.3 2497.4 955.3 2501.9 955.3 2506.5 955.3 2511.1 955.3 2515.6 955.3 2520.2 955.3 2524.8 955.3 2529.3 955.3 2533.9 955.3 2538.5 955.3 2543.0 955.3 2547.6 955.3 2552.2 955.3 2556.7 955.3 2561.3 955.3 2565.9 955.3 2570.4 955.3 2575.0 955.3 2579.6 955.3 2584.2 955.3 2588.7 955.3 2593.3 955.3 2597.9 955.3 2602.4 955.3 2607.0 955.3 2611.6 955.3 2616.1 955.3 2620.7 955.3 2625.3 955.3 2629.8 955.3 2634.4 955.3 2639.0 955.3 2643.5 955.3" stroke="#edb120" stroke-width="12" fill="none" stroke-linecap="round" stroke-linejoin="round"/>
<path d="M2779.2 1068.7h0M2779.2 1040.4h0M2779.2 1012.0h0M2779.2 983.7h0M2779.2 955.3h0M2779.2 927.0h0M2779.2 898.6h0M2779.2 870.3h0M2779.2 841.9h0M2779.2 813.6h0M2779.2 785.2h0M2779.2 756.9h0M2779.2 728.5h0M2779.2 700.2h0M2779.2 671.8h0M2779.2 643.5h0M2779.2 615.1h0M2779.2 586.8h0M2779.2 558.4h0M2779.2 530.1h0M2779.2 501.7h0M2779.2 473.4h0M2779.2 445.0h0M2807.5 1068.7h0M2807.5 1040.4h0M2807.5 1012.0h0M2807.5 983.7h0M2807.5 955.3h0M2807.5 927.0h0M2807.5 898.6h0M2807.5 870.3h0M2807.5 841.9h0M2807.5 813.6h0M2807.5 785.2h0M2807.5 756.9h0M2807.5 728.5h0M2807.5 700.2h0M2807.5 671.8h0M2807.5 643.5h0M2807.5 615.1h0M2807.5 586.8h0M2807.5 558.4h0M2807.5 530.1h0M2807.5 501.7h0M2807.5 473.4h0M2807.5 445.0h0M2835.8 1068.7h0M2835.8 1040.4h0M2835.8 1012.0h0M2835.8 983.7h0M2835.8 955.3h0M2835.8 927.0h0M2835.8 898.6h0M2835.8 870.3h0M2835.8 841.9h0M2835.8 813.6h0M2835.8 785.2h0M2835.8 756.9h0M2835.8 728.5h0M2835.8 700.2h0M2835.8 671.8h0M2835.8 643.5h0M2835.8 615.1h0M2835.8 586.8h0M2835.8 558.4h0M2835.8 530.1h0M2835.8 501.7h0M2835.8 473.4h0M2835.8 445.0h0M2864.1 1068.7h0M2864.1 1040.4h0M2864.1 1012.0h0M2864.1 983.7h0M2864.1 955.3h0M2864.1 927.0h0M2864.1 898.6h0M2864.1 870.3h0M2864.1 841.9h0M2864.1 813.6h0M2864.1 785.2h0M2864.1 756.9h0M2864.1 728.5h0M2864.1 700.2h0M2864.1 671.8h0M2864.1 643.5h0M2864.1 615.1h0M2864.1 586.8h0M2864.1 558.4h0M2864.1 530.1h0M2864.1 501.7h0M2864.1 473.4h0M2864.1 445.0h0M2892.3 1068.7h0M2892.3 1040.4h0M2892.3 1012.0h0M2892.3 983.7h0M2892.3 955.3h0M2892.3 927.0h0M2892.3 898.6h0M2892.3 870.3h0M2892.3 841.9h0M2892.3 813.6h0M2892.3 785.2h0M2892.3 756.9h0M2892.3 728.5h0M2892.3 700.2h0M2892.3 671.8h0M2892.3 643.5h0M2892.3 615.1h0M2892.3 586.8h0M2892.3 558.4h0M2892.3 530.1h0M2892.3 501.7h0M2892.3 473.4h0M2892.3 445.0h0M2920.6 1068.7h0M2920.6 1040.4h0M2920.6 1012.0h0M2920.6 983.7h0M2920.6 955.3h0M2920.6 927.0h0M2920.6 898.6h0M2920.6 870.3h0M2920.6 841.9h0M2920.6 813.6h0M2920.6 785.2h0M2920.6 756.9h0M2920.6 728.5h0M2920.6 700.2h0M2920.6 671.8h0M2920.6 643.5h0M2920.6 615.1h0M2920.6 586.8h0M2920.6 558.4h0M2920.6 530.1h0M2920.6 501.7h0M2920.6 473.4h0M2920.6 445.0h0M2948.9 1068.7h0M2948.9 1040.4h0M2948.9 1012.0h0M2948.9 983.7h0M2948.9 955.3h0M2948.9 927.0h0M2948.9 898.6h0M2948.9 870.3h0M2948.9 841.9h0M2948.9 813.6h0M2948.9 785.2h0M2948.9 756.9h0M2948.9 728.5h0M2948.9 700.2h0M2948.9 671.8h0M2948.9 643.5h0M2948.9 615.1h0M2948.9 586.8h0M2948.9 558.4h0M2948.9 530.1h0M2948.9 501.7h0M2948.9 473.4h0M2948.9 445.0h0M2977.2 1068.7h0M2977.2 1040.4h0M2977.2 1012.0h0M2977.2 983.7h0M2977.2 955.3h0M2977.2 927.0h0M2977.2 898.6h0M2977.2 870.3h0M2977.2 841.9h0M2977.2 813.6h0M2977.2 785.2h0M2977.2 756.9h0M2977.2 728.5h0M2977.2 700.2h0M2977.2 671.8h0M2977.2 643.5h0M2977.2 615.1h0M2977.2 586.8h0M2977.2 558.4h0M2977.2 530.1h0M2977.2 501.7h0M2977.2 473.4h0M2977.2 445.0h0M3005.4 1068.7h0M3005.4 1040.4h0M3005.4 1012.0h0M3005.4 983.7h0M3005.4 955.3h0M3005.4 927.0h0M3005.4 898.6h0M3005.4 870.3h0M3005.4 841.9h0M3005.4 813.6h0M3005.4 785.2h0M3005.4 756.9h0M3005.4 728.5h0M3005.4 700.2h0M3005.4 671.8h0M3005.4 643.5h0M3005.4 615.1h0M3005.4 586.8h0M3005.4 558.4h0M3005.4 530.1h0M3005.4 501.7h0M3005.4 473.4h0M3005.4 445.0h0M3033.7 1068.7h0M3033.7 1040.4h0M3033.7 1012.0h0M3033.7 983.7h0M3033.7 955.3h0M3033.7 927.0h0M3033.7 898.6h0M3033.7 870.3h0M3033.7 841.9h0M3033.7 813.6h0M3033.7 785.2h0M3033.7 756.9h0M3033.7 728.5h0M3033.7 700.2h0M3033.7 671.8h0M3033.7 643.5h0M3033.7 615.1h0M3033.7 586.8h0M3033.7 558.4h0M3033.7 530.1h0M3033.7 501.7h0M3033.7 473.4h0M3033.7 445.0h0M3062.0 1068.7h0M3062.0 1040.4h0M3062.0 1012.0h0M3062.0 983.7h0M3062.0 955.3h0M3062.0 927.0h0M3062.0 898.6h0M3062.0 870.3h0M3062.0 841.9h0M3062.0 813.6h0M3062.0 785.2h0M3062.0 756.9h0M3062.0 728.5h0M3062.0 700.2h0M3062.0 671.8h0M3062.0 643.5h0M3062.0 615.1h0M3062.0 586.8h0M3062.0 558.4h0M3062.0 530.1h0M3062.0 501.7h0M3062.0 473.4h0M3062.0 445.0h0" stroke="#edb120" stroke-width="13" stroke-linecap="round"/>
<path d="M1860 374L1858 376M1860 402L1857 404M1860 430L1858 432M1860 459L1858 461M1860 487L1858 489M1860 515L1858 517M1860 544L1858 546M1860 572L1858 574M1860 600L1858 602M1860 629h1M1860 657h1M1860 685h1M1860 714h1M1860 742h1M1860 770h1M1860 799h1M1860 827h1M1860 856h1M1860 884h1M1860 912h1M1860 941h1M1860 969h1M1860 997h1M1860 1026h1M1860 1054L1863 1055M1860 1082L1863 1083M1860 1111L1863 1111M1860 1139L1863 1139M1860 1167h1M1860 1196h1M1860 1224h1M1888 345L1886 351M1888 374L1883 382M1883 382L1884 381M1883 382L1883 380M1888 402L1882 411M1882 411L1884 410M1882 411L1882 409M1888 430L1882 439M1882 439L1884 438M1882 439L1883 437M1888 459L1883 467M1883 467L1885 466M1883 467L1884 465M1888 487L1883 496M1883 496L1885 494M1883 496L1884 494M1888 515L1883 524M1883 524L1885 523M1883 524L1884 522M1888 544L1884 552M1884 552L1885 551M1884 552L1884 550M1888 572L1884 580M1884 580L1885 579M1884 580L1884 579M1888 600L1884 609M1884 609L1886 607M1884 609L1885 607M1888 629L1885 637M1885 637L1886 636M1885 637L1885 635M1888 657L1885 665M1885 665L1887 664M1885 665L1886 663M1888 685L1886 693M1886 693L1887 692M1886 693L1886 692M1888 714L1887 722M1888 742L1888 750M1888 770L1889 778M1888 799L1890 806M1888 827L1890 834M1888 856L1890 863M1888 884L1891 891M1888 912L1891 919M1888 941L1892 947M1888 969L1892 976M1888 997L1893 1004M1888 1026L1893 1030M1888 1054L1894 1057M1888 1082L1895 1085M1888 1111L1895 1112M1888 1139L1895 1140M1888 1167L1893 1168M1888 1196L1891 1196M1888 1224h1M1917 345L1913 358M1913 358L1915 356M1913 358L1913 355M1917 374L1909 395M1909 395L1911 391M1909 395L1909 390M1917 402L1907 424M1907 424L1910 420M1907 424L1907 419M1917 430L1908 452M1908 452L1910 448M1908 452L1908 447M1917 459L1909 480M1909 480L1911 476M1909 480L1909 475M1917 487L1909 508M1909 508L1912 504M1909 508L1909 503M1917 515L1909 536M1909 536L1912 532M1909 536L1909 532M1917 544L1910 564M1910 564L1912 561M1910 564L1910 560M1917 572L1910 592M1910 592L1913 589M1910 592L1910 588M1917 600L1911 620M1911 620L1913 617M1911 620L1911 616M1917 629L1912 648M1912 648L1914 645M1912 648L1911 644M1917 657L1912 676M1912 676L1914 673M1912 676L1912 672M1917 685L1913 704M1913 704L1915 701M1913 704L1913 701M1917 714L1914 732M1914 732L1916 729M1914 732L1913 729M1917 742L1915 761M1915 761L1917 757M1915 761L1915 757M1917 770L1917 789M1917 789L1918 785M1917 789L1916 785M1917 799L1918 817M1918 817L1919 813M1918 817L1917 813M1917 827L1919 845M1919 845L1919 841M1919 845L1917 842M1917 856L1919 873M1919 873L1920 869M1919 873L1917 870M1917 884L1920 901M1920 901L1920 897M1920 901L1918 898M1917 912L1920 929M1920 929L1921 926M1920 929L1919 926M1917 941L1921 957M1921 957L1921 954M1921 957L1919 954M1917 969L1922 985M1922 985L1922 982M1922 985L1920 982M1917 997L1923 1013M1923 1013L1922 1010M1923 1013L1920 1011M1917 1026L1923 1037M1923 1037L1923 1035M1923 1037L1921 1036M1917 1054L1924 1062M1924 1062L1923 1060M1924 1062L1922 1061M1917 1082L1925 1089M1925 1089L1924 1087M1925 1089L1923 1088M1917 1111L1926 1115M1926 1115L1924 1114M1926 1115L1924 1115M1917 1139L1925 1141M1925 1141L1923 1140M1925 1141L1923 1141M1917 1167L1923 1168M1917 1196L1920 1196M1917 1224h1M1945 345L1941 362M1941 362L1943 359M1941 362L1941 359M1945 374L1936 401M1936 401L1939 398M1936 401L1936 397M1945 402L1934 430M1934 430L1937 427M1934 430L1935 426M1945 430L1935 458M1935 458L1938 455M1935 458L1935 454M1945 459L1936 486M1936 486L1939 483M1936 486L1936 482M1945 487L1937 514M1937 514L1939 511M1937 514L1937 510M1945 515L1937 542M1937 542L1939 539M1937 542L1937 538M1945 544L1937 570M1937 570L1940 567M1937 570L1937 566M1945 572L1938 598M1938 598L1940 594M1938 598L1938 594M1945 600L1939 626M1939 626L1941 622M1939 626L1938 622M1945 629L1939 654M1939 654L1942 650M1939 654L1939 650M1945 657L1940 682M1940 682L1942 678M1940 682L1940 678M1945 685L1941 710M1941 710L1943 706M1941 710L1940 706M1945 714L1942 738M1942 738L1944 734M1942 738L1941 734M1945 742L1944 766M1944 766L1945 762M1944 766L1942 762M1945 770L1945 794M1945 794L1946 790M1945 794L1944 790M1945 799L1946 822M1946 822L1947 818M1946 822L1945 818M1945 827L1946 850M1946 850L1948 846M1946 850L1945 846M1945 856L1947 878M1947 878L1948 874M1947 878L1945 874M1945 884L1947 906M1947 906L1948 902M1947 906L1946 902M1945 912L1948 934M1948 934L1949 930M1948 934L1946 930M1945 941L1949 962M1949 962L1950 958M1949 962L1947 958M1945 969L1950 990M1950 990L1951 986M1950 990L1948 987M1945 997L1951 1019M1951 1019L1951 1015M1951 1019L1949 1016M1945 1026L1952 1045M1952 1045L1952 1041M1952 1045L1949 1042M1945 1054L1953 1073M1953 1073L1953 1069M1953 1073L1951 1070M1945 1082L1954 1099M1954 1099L1954 1095M1954 1099L1952 1096M1945 1111L1954 1120M1954 1120L1953 1118M1954 1120L1952 1119M1945 1139L1953 1142M1953 1142L1952 1141M1953 1142L1951 1142M1945 1167L1951 1168M1945 1196L1948 1195M1945 1224h1M1973 345L1970 357M1970 357L1971 355M1970 357L1970 355M1973 374L1966 393M1966 393L1969 390M1966 393L1966 389M1973 402L1965 422M1965 422L1968 419M1965 422L1965 418M1973 430L1965 450M1965 450L1968 447M1965 450L1966 446M1973 459L1966 478M1966 478L1969 475M1966 478L1966 474M1973 487L1966 506M1966 506L1969 503M1966 506L1967 502M1973 515L1967 535M1967 535L1969 531M1967 535L1967 530M1973 544L1967 563M1967 563L1969 559M1967 563L1967 559M1973 572L1968 591M1968 591L1970 588M1968 591L1967 587M1973 600L1968 619M1968 619L1970 616M1968 619L1968 615M1973 629L1969 647M1969 647L1971 644M1969 647L1968 643M1973 657L1969 675M1969 675L1971 672M1969 675L1969 671M1973 685L1970 703M1970 703L1972 700M1970 703L1970 700M1973 714L1971 731M1971 731L1972 728M1971 731L1970 728M1973 742L1972 759M1972 759L1973 756M1972 759L1971 756M1973 770L1973 787M1973 787L1974 784M1973 787L1972 784M1973 799L1974 816M1974 816L1975 812M1974 816L1973 812M1973 827L1974 844M1974 844L1975 840M1974 844L1973 841M1973 856L1974 872M1974 872L1975 869M1974 872L1973 869M1973 884L1975 900M1975 900L1976 897M1975 900L1974 897M1973 912L1976 928M1976 928L1977 925M1976 928L1975 925M1973 941L1977 956M1977 956L1977 953M1977 956L1976 953M1973 969L1978 985M1978 985L1978 981M1978 985L1976 982M1973 997L1978 1015M1978 1015L1978 1011M1978 1015L1976 1012M1973 1026L1980 1048M1980 1048L1980 1043M1980 1048L1977 1044M1973 1054L1981 1083M1981 1083L1982 1079M1981 1083L1979 1079M1973 1082L1982 1109M1982 1109L1982 1105M1982 1109L1980 1106M1973 1111L1982 1125M1982 1125L1981 1122M1982 1125L1979 1123M1973 1139L1980 1143M1973 1167L1979 1166M1973 1196L1976 1194M1973 1224h1M2002 345L1999 350M2002 374L1997 381M1997 381L1998 380M1997 381L1997 379M2002 402L1996 410M1996 410L1997 409M1996 410L1997 408M2002 430L1997 438M1997 438L1998 437M1997 438L1997 436M2002 459L1997 466M1997 466L1998 465M1997 466L1998 464M2002 487L1997 494M1997 494L1998 493M1997 494L1998 493M2002 515L1997 523M1997 523L1999 522M1997 523L1998 521M2002 544L1997 552M1997 552L1999 550M1997 552L1998 550M2002 572L1998 580M1998 580L1999 579M1998 580L1998 578M2002 600L1998 608M1998 608L1999 607M1998 608L1998 606M2002 629L1998 635M2002 657L1999 664M2002 685L1999 692M2002 714L2000 720M2002 742L2000 749M2002 770L2002 777M2002 799L2002 805M2002 827L2002 834M2002 856L2003 862M2002 884L2003 890M2002 912L2004 918M2002 941L2005 947M2002 969L2006 976M2002 997L2006 1007M2006 1007L2006 1005M2006 1007L2004 1006M2002 1026L2007 1042M2007 1042L2007 1039M2007 1042L2005 1039M2002 1054L2010 1080M2010 1080L2010 1075M2010 1080L2007 1076M2002 1082L2010 1107M2010 1107L2010 1103M2010 1107L2008 1104M2002 1111L2010 1125M2010 1125L2009 1122M2010 1125L2007 1123M2002 1139L2008 1141M2002 1167L2007 1162M2002 1196L2004 1192M2002 1224h1M2030 345h1M2030 374L2027 375M2030 402L2027 403M2030 430L2027 431M2030 459L2027 458M2030 487L2027 487M2030 515L2027 517M2030 544L2027 549M2030 572L2027 579M2030 600L2027 603M2030 629L2027 627M2030 657L2028 654M2030 685L2028 684M2030 714h1M2030 742h1M2030 770h1M2030 799h1M2030 827h1M2030 856h1M2030 884L2032 885M2030 912L2033 914M2030 941L2034 942M2030 969L2034 972M2030 997L2034 1005M2034 1005L2034 1003M2034 1005L2033 1003M2030 1026L2036 1040M2036 1040L2035 1037M2036 1040L2034 1037M2030 1054L2038 1073M2038 1073L2037 1069M2038 1073L2035 1070M2030 1082L2039 1101M2039 1101L2039 1097M2039 1101L2036 1098M2030 1111L2039 1123M2039 1123L2038 1120M2039 1123L2036 1121M2030 1139L2037 1138M2030 1167L2035 1159M2035 1159L2034 1160M2035 1159L2035 1161M2030 1196L2033 1190M2030 1224h1M2058 374h1M2058 402h1M2058 430L2056 428M2058 459L2055 453M2058 487L2055 482M2058 515L2054 515M2058 544L2055 552M2055 552L2056 551M2055 552L2055 550M2058 572L2055 583M2055 583L2056 581M2055 583L2055 580M2058 600L2055 602M2058 629L2055 622M2058 657L2056 648M2056 648L2056 650M2056 648L2057 649M2058 685L2056 679M2058 714h1M2058 742h1M2058 770h1M2058 799L2059 801M2058 827L2060 830M2058 856L2060 858M2058 884L2061 885M2058 912L2062 913M2058 941L2062 941M2058 969L2063 971M2058 997L2063 1004M2063 1004L2062 1003M2063 1004L2061 1003M2058 1026L2064 1039M2064 1039L2064 1036M2064 1039L2062 1037M2058 1054L2066 1070M2066 1070L2066 1066M2066 1070L2064 1067M2058 1082L2068 1098M2068 1098L2067 1094M2068 1098L2065 1096M2058 1111L2068 1122M2068 1122L2067 1119M2068 1122L2065 1120M2058 1139L2066 1137M2066 1137L2065 1137M2066 1137L2065 1138M2058 1167L2064 1158M2064 1158L2062 1160M2064 1158L2063 1160M2058 1196L2061 1190M2058 1224h1M2086 430L2084 433M2086 459L2082 461M2086 487L2080 490M2086 515L2080 522M2080 522L2081 521M2080 522L2081 520M2086 544L2081 555M2081 555L2082 553M2081 555L2081 552M2086 572L2081 584M2081 584L2083 582M2081 584L2082 582M2086 600L2082 609M2082 609L2083 608M2082 609L2082 607M2086 629L2082 633M2086 657L2083 659M2086 685L2083 688M2086 714L2084 719M2086 742L2085 750M2086 770L2087 779M2087 779L2087 777M2087 779L2086 777M2086 799L2088 808M2088 808L2088 806M2088 808L2087 806M2086 827L2088 838M2088 838L2089 836M2088 838L2087 836M2086 856L2089 866M2089 866L2089 864M2089 866L2088 864M2086 884L2089 890M2086 912L2090 915M2086 941L2091 943M2086 969L2091 972M2086 997L2091 1003M2086 1026L2092 1036M2092 1036L2092 1034M2092 1036L2091 1035M2086 1054L2094 1067M2094 1067L2094 1064M2094 1067L2092 1065M2086 1082L2096 1095M2096 1095L2095 1092M2096 1095L2093 1093M2086 1111L2096 1119M2096 1119L2095 1117M2096 1119L2094 1118M2086 1139L2095 1138M2095 1138L2093 1138M2095 1138L2093 1139M2086 1167L2092 1161M2092 1161L2091 1162M2092 1161L2092 1162M2086 1196L2089 1192M2086 1224h1M2115 430L2112 438M2112 438L2113 437M2112 438L2112 436M2115 459L2109 472M2109 472L2111 470M2109 472L2109 469M2115 487L2107 506M2107 506L2109 503M2107 506L2107 502M2115 515L2106 533M2106 533L2109 530M2106 533L2107 529M2115 544L2107 559M2107 559L2110 557M2107 559L2108 556M2115 572L2108 588M2108 588L2111 585M2108 588L2109 584M2115 600L2109 617M2109 617L2111 614M2109 617L2109 613M2115 629L2109 648M2109 648L2112 645M2109 648L2109 644M2115 657L2110 675M2110 675L2112 672M2110 675L2110 671M2115 685L2111 698M2111 698L2113 696M2111 698L2111 695M2115 714L2112 725M2112 725L2113 723M2112 725L2112 722M2115 742L2113 754M2113 754L2114 752M2113 754L2113 752M2115 770L2115 783M2115 783L2116 781M2115 783L2114 781M2115 799L2116 813M2116 813L2117 810M2116 813L2115 810M2115 827L2117 846M2117 846L2117 842M2117 846L2115 843M2115 856L2117 875M2117 875L2118 871M2117 875L2115 872M2115 884L2118 898M2118 898L2118 895M2118 898L2116 896M2115 912L2119 924M2119 924L2119 921M2119 924L2117 922M2115 941L2120 950M2120 950L2119 948M2120 950L2118 949M2115 969L2120 979M2120 979L2120 977M2120 979L2118 977M2115 997L2120 1008M2120 1008L2120 1006M2120 1008L2119 1006M2115 1026L2121 1038M2121 1038L2121 1035M2121 1038L2119 1036M2115 1054L2123 1067M2123 1067L2122 1064M2123 1067L2120 1065M2115 1082L2124 1095M2124 1095L2123 1092M2124 1095L2121 1093M2115 1111L2124 1118M2124 1118L2122 1116M2124 1118L2122 1118M2115 1139L2122 1139M2115 1167L2120 1163M2115 1196L2118 1193M2115 1224h1M2143 430L2140 440M2140 440L2141 438M2140 440L2140 438M2143 459L2137 478M2137 478L2139 475M2137 478L2137 474M2143 487L2135 515M2135 515L2137 511M2135 515L2135 511M2143 515L2135 539M2135 539L2137 536M2135 539L2135 535M2143 544L2136 561M2136 561L2138 558M2136 561L2136 557M2143 572L2137 588M2137 588L2139 585M2137 588L2137 585M2143 600L2137 619M2137 619L2139 616M2137 619L2137 615M2143 629L2138 655M2138 655L2140 651M2138 655L2137 651M2143 657L2139 684M2139 684L2141 680M2139 684L2138 679M2143 685L2139 700M2139 700L2141 698M2139 700L2139 697M2143 714L2140 725M2140 725L2141 723M2140 725L2140 723M2143 742L2141 755M2141 755L2143 753M2141 755L2141 753M2143 770L2143 785M2143 785L2144 782M2143 785L2142 782M2143 799L2145 814M2145 814L2145 811M2145 814L2143 812M2143 827L2145 851M2145 851L2146 846M2145 851L2143 846M2143 856L2145 881M2145 881L2146 876M2145 881L2144 877M2143 884L2146 906M2146 906L2147 902M2146 906L2144 902M2143 912L2147 936M2147 936L2148 932M2147 936L2145 932M2143 941L2148 963M2148 963L2149 959M2148 963L2146 959M2143 969L2149 991M2149 991L2149 987M2149 991L2147 987M2143 997L2150 1020M2150 1020L2150 1015M2150 1020L2147 1016M2143 1026L2150 1048M2150 1048L2150 1044M2150 1048L2148 1045M2143 1054L2151 1077M2151 1077L2151 1072M2151 1077L2149 1073M2143 1082L2152 1105M2152 1105L2151 1100M2152 1105L2149 1101M2143 1111L2151 1125M2151 1125L2150 1121M2151 1125L2149 1122M2143 1139L2150 1141M2143 1167L2148 1164M2143 1196L2146 1193M2143 1224h1M2171 430L2168 438M2168 438L2169 437M2168 438L2168 437M2171 459L2165 474M2165 474L2167 471M2165 474L2166 471M2171 487L2164 508M2164 508L2166 504M2164 508L2164 503M2171 515L2163 532M2163 532L2166 529M2163 532L2164 528M2171 544L2164 555M2164 555L2166 554M2164 555L2165 553M2171 572L2165 583M2165 583L2167 581M2165 583L2166 580M2171 600L2166 613M2166 613L2167 611M2166 613L2166 610M2171 629L2166 647M2166 647L2168 644M2166 647L2166 643M2171 657L2167 674M2167 674L2169 671M2167 674L2167 671M2171 685L2167 692M2171 714L2168 717M2171 742L2169 750M2169 750L2170 749M2169 750L2169 748M2171 770L2171 781M2171 781L2172 779M2171 781L2171 779M2171 799L2173 811M2173 811L2173 809M2173 811L2172 809M2171 827L2173 842M2173 842L2174 839M2173 842L2172 840M2171 856L2173 872M2173 872L2174 869M2173 872L2172 869M2171 884L2174 903M2174 903L2175 899M2174 903L2172 899M2171 912L2175 937M2175 937L2176 933M2175 937L2173 933M2171 941L2176 965M2176 965L2177 961M2176 965L2174 961M2171 969L2177 993M2177 993L2178 988M2177 993L2175 989M2171 997L2178 1021M2178 1021L2178 1016M2178 1021L2176 1017M2171 1026L2179 1049M2179 1049L2179 1045M2179 1049L2176 1045M2171 1054L2180 1078M2180 1078L2179 1073M2180 1078L2177 1074M2171 1082L2180 1106M2180 1106L2180 1101M2180 1106L2177 1102M2171 1111L2179 1125M2179 1125L2179 1122M2179 1125L2177 1123M2171 1139L2178 1140M2171 1167L2177 1161M2177 1161L2175 1162M2177 1161L2176 1163M2171 1196L2174 1191M2171 1224h1M2199 430L2196 434M2199 459L2194 466M2194 466L2195 465M2194 466L2194 464M2199 487L2192 495M2192 495L2194 494M2192 495L2193 493M2199 515L2192 520M2192 520L2193 519M2192 520L2193 519M2199 544L2192 544M2199 572L2193 572M2199 600L2194 602M2199 629L2194 634M2199 657L2195 661M2199 685L2195 679M2199 714L2196 706M2196 706L2196 707M2196 706L2197 707M2199 742L2198 737M2199 770h1M2199 799L2201 801M2199 827L2201 832M2199 856L2201 863M2199 884L2202 894M2202 894L2202 892M2202 894L2201 892M2199 912L2203 928M2203 928L2203 924M2203 928L2201 925M2199 941L2204 956M2204 956L2204 953M2204 956L2202 953M2199 969L2205 981M2205 981L2205 979M2205 981L2203 979M2199 997L2206 1007M2206 1007L2205 1004M2206 1007L2204 1005M2199 1026L2206 1034M2206 1034L2206 1032M2206 1034L2205 1033M2199 1054L2207 1063M2207 1063L2206 1061M2207 1063L2205 1062M2199 1082L2208 1092M2208 1092L2207 1090M2208 1092L2206 1091M2199 1111L2209 1117M2209 1117L2207 1115M2209 1117L2207 1116M2199 1139L2208 1137M2208 1137L2206 1137M2208 1137L2206 1138M2199 1167L2206 1159M2206 1159L2204 1160M2206 1159L2205 1161M2199 1196L2203 1189M2199 1224h1M2228 430L2225 431M2228 459L2222 461M2228 487L2220 489M2220 489L2222 489M2220 489L2221 488M2228 515L2219 513M2219 513L2221 514M2219 513L2221 513M2228 544L2220 538M2220 538L2221 540M2220 538L2222 539M2228 572L2221 566M2221 566L2222 568M2221 566L2222 567M2228 600L2222 597M2228 629L2222 628M2228 657L2223 656M2228 685L2224 679M2228 714L2224 705M2224 705L2225 707M2224 705L2226 706M2228 742L2226 733M2226 733L2225 735M2226 733L2227 734M2228 770L2227 762M2227 762L2227 764M2227 762L2228 764M2228 799L2228 793M2228 827L2228 824M2228 856h1M2228 884L2230 888M2228 912L2231 922M2231 922L2231 920M2231 922L2230 920M2228 941L2232 950M2232 950L2232 948M2232 950L2231 948M2228 969L2233 972M2228 997L2233 995M2228 1026L2234 1021M2228 1054L2235 1051M2235 1051L2234 1051M2235 1051L2234 1052M2228 1082L2237 1083M2237 1083L2235 1082M2237 1083L2235 1084M2228 1111L2238 1112M2238 1112L2236 1111M2238 1112L2236 1112M2228 1139L2237 1136M2237 1136L2235 1136M2237 1136L2235 1137M2228 1167L2234 1159M2234 1159L2233 1161M2234 1159L2234 1161M2228 1196L2231 1190M2228 1224h1M2256 430L2253 433M2256 459L2250 465M2250 465L2252 464M2250 465L2251 463M2256 487L2248 494M2248 494L2250 493M2248 494L2249 492M2256 515L2248 520M2248 520L2250 520M2248 520L2249 519M2256 544L2248 546M2248 546L2250 546M2248 546L2249 545M2256 572L2249 573M2256 600L2250 603M2256 629L2251 634M2256 657L2252 662M2256 685L2252 687M2256 714L2253 711M2256 742L2254 735M2256 770L2255 762M2255 762L2254 763M2255 762L2255 763M2256 799L2255 789M2255 789L2255 791M2255 789L2256 791M2256 827L2256 818M2256 818L2256 820M2256 818L2257 820M2256 856L2257 849M2256 884h1M2256 912L2259 922M2259 922L2259 920M2259 922L2258 920M2256 941L2261 950M2261 950L2260 948M2261 950L2259 949M2256 969L2261 974M2256 997L2261 998M2256 1026L2262 1024M2256 1054L2264 1055M2256 1082L2265 1088M2265 1088L2264 1086M2265 1088L2263 1088M2256 1111L2266 1116M2266 1116L2265 1115M2266 1116L2264 1116M2256 1139L2265 1138M2265 1138L2263 1138M2265 1138L2263 1139M2256 1167L2262 1162M2262 1162L2261 1162M2262 1162L2261 1163M2256 1196L2259 1192M2256 1224h1M2284 430L2281 436M2284 459L2279 471M2279 471L2281 469M2279 471L2279 468M2284 487L2277 502M2277 502L2279 500M2277 502L2278 499M2284 515L2277 531M2277 531L2279 529M2277 531L2277 528M2284 544L2277 557M2277 557L2279 555M2277 557L2278 554M2284 572L2278 584M2278 584L2280 582M2278 584L2279 582M2284 600L2279 613M2279 613L2281 611M2279 613L2279 611M2284 629L2280 643M2280 643L2282 641M2280 643L2280 640M2284 657L2281 672M2281 672L2282 669M2281 672L2280 669M2284 685L2281 698M2281 698L2283 696M2281 698L2281 695M2284 714L2282 721M2284 742L2282 744M2284 770L2283 768M2284 799L2283 793M2284 827L2284 819M2284 819L2284 820M2284 819L2285 820M2284 856L2285 846M2285 846L2284 848M2285 846L2286 848M2284 884L2287 882M2284 912L2288 925M2288 925L2288 922M2288 925L2287 922M2284 941L2289 955M2289 955L2289 952M2289 955L2287 953M2284 969L2289 982M2289 982L2289 980M2289 982L2288 980M2284 997L2289 1010M2289 1010L2289 1007M2289 1010L2287 1008M2284 1026L2290 1038M2290 1038L2290 1035M2290 1038L2288 1036M2284 1054L2292 1068M2292 1068L2291 1065M2292 1068L2290 1066M2284 1082L2294 1097M2294 1097L2293 1094M2294 1097L2291 1095M2284 1111L2294 1122M2294 1122L2293 1119M2294 1122L2291 1120M2284 1139L2292 1140M2284 1167L2290 1163M2284 1196L2287 1193M2284 1224h1M2313 430L2310 438M2313 459L2308 474M2308 474L2309 471M2308 474L2308 471M2313 487L2306 513M2306 513L2309 509M2306 513L2306 508M2313 515L2306 543M2306 543L2309 539M2306 543L2306 539M2313 544L2307 566M2307 566L2310 562M2307 566L2307 562M2313 572L2308 591M2308 591L2310 588M2308 591L2308 587M2313 600L2309 621M2309 621L2311 617M2309 621L2308 617M2313 629L2309 654M2309 654L2311 650M2309 654L2308 650M2313 657L2310 685M2310 685L2311 681M2310 685L2309 680M2313 685L2310 706M2310 706L2312 702M2310 706L2309 702M2313 714L2310 726M2310 726L2311 724M2310 726L2310 723M2313 742L2311 749M2313 770L2311 776M2313 799h1M2313 827h1M2313 856L2314 853M2313 884L2315 891M2313 912L2316 934M2316 934L2317 929M2316 934L2314 930M2313 941L2318 960M2318 960L2318 956M2318 960L2315 957M2313 969L2317 984M2317 984L2317 981M2317 984L2316 981M2313 997L2317 1012M2317 1012L2317 1009M2317 1012L2315 1009M2313 1026L2317 1044M2317 1044L2318 1040M2317 1044L2315 1041M2313 1054L2320 1079M2320 1079L2320 1074M2320 1079L2317 1075M2313 1082L2321 1106M2321 1106L2321 1101M2321 1106L2319 1102M2313 1111L2321 1124M2321 1124L2320 1121M2321 1124L2319 1122M2313 1139L2320 1139M2313 1167L2318 1161M2313 1196L2315 1192M2313 1224h1M2341 430L2339 437M2341 459L2337 473M2337 473L2339 471M2337 473L2337 470M2341 487L2336 511M2336 511L2338 507M2336 511L2336 506M2341 515L2336 541M2336 541L2338 537M2336 541L2336 537M2341 544L2337 566M2337 566L2339 562M2337 566L2337 561M2341 572L2338 592M2338 592L2340 588M2338 592L2337 588M2341 600L2338 621M2338 621L2340 618M2338 621L2337 617M2341 629L2338 654M2338 654L2340 650M2338 654L2337 650M2341 657L2339 684M2339 684L2340 680M2339 684L2338 680M2341 685L2339 705M2339 705L2340 701M2339 705L2338 701M2341 714L2339 726M2339 726L2340 724M2339 726L2339 723M2341 742L2339 750M2341 770L2340 777M2341 799L2341 802M2341 827h1M2341 856L2342 861M2341 884L2343 896M2343 896L2343 894M2343 896L2342 894M2341 912L2344 927M2344 927L2345 924M2344 927L2343 924M2341 941L2345 948M2345 948L2345 946M2345 948L2344 947M2341 969L2345 971M2341 997L2344 1001M2341 1026L2345 1034M2345 1034L2345 1032M2345 1034L2344 1033M2341 1054L2348 1072M2348 1072L2348 1068M2348 1072L2345 1069M2341 1082L2349 1102M2349 1102L2349 1098M2349 1102L2347 1099M2341 1111L2349 1123M2349 1123L2348 1120M2349 1123L2347 1121M2341 1139L2348 1137M2341 1167L2346 1158M2346 1158L2345 1159M2346 1158L2346 1160M2341 1196L2344 1190M2341 1224h1M2369 430L2368 436M2369 459L2366 471M2366 471L2368 469M2366 471L2366 468M2369 487L2366 502M2366 502L2367 499M2366 502L2366 499M2369 515L2366 531M2366 531L2367 528M2366 531L2366 528M2369 544L2366 559M2366 559L2368 556M2366 559L2366 556M2369 572L2367 586M2367 586L2368 584M2367 586L2366 584M2369 600L2367 615M2367 615L2368 612M2367 615L2366 612M2369 629L2367 644M2367 644L2368 641M2367 644L2366 641M2369 657L2367 672M2367 672L2368 669M2367 672L2367 669M2369 685L2367 699M2367 699L2369 696M2367 699L2367 696M2369 714L2368 723M2368 723L2368 721M2368 723L2367 721M2369 742L2368 747M2369 770L2369 775M2369 799L2369 801M2369 827h1M2369 856L2370 861M2369 884L2371 893M2371 893L2371 891M2371 893L2370 892M2369 912L2372 915M2369 941L2373 933M2373 933L2372 934M2373 933L2373 935M2369 969L2373 959M2373 959L2372 960M2373 959L2373 961M2369 997L2373 988M2373 988L2372 989M2373 988L2373 990M2369 1026L2374 1022M2369 1054L2376 1062M2376 1062L2375 1060M2376 1062L2374 1061M2369 1082L2378 1096M2378 1096L2377 1093M2378 1096L2375 1094M2369 1111L2378 1121M2378 1121L2377 1118M2378 1121L2376 1119M2369 1139L2378 1134M2378 1134L2376 1135M2378 1134L2376 1136M2369 1167L2375 1155M2375 1155L2374 1157M2375 1155L2375 1158M2369 1196L2372 1188M2372 1188L2371 1190M2372 1188L2372 1190M2369 1224h1M2397 430L2396 436M2397 459L2395 470M2395 470L2396 468M2395 470L2395 468M2397 487L2395 500M2395 500L2396 498M2395 500L2394 498M2397 515L2394 529M2394 529L2396 526M2394 529L2394 526M2397 544L2394 557M2394 557L2395 554M2394 557L2394 554M2397 572L2394 585M2394 585L2395 582M2394 585L2394 582M2397 600L2394 613M2394 613L2396 611M2394 613L2394 610M2397 629L2395 641M2395 641L2396 639M2395 641L2394 638M2397 657L2395 669M2395 669L2396 667M2395 669L2395 667M2397 685L2395 696M2395 696L2396 694M2395 696L2395 694M2397 714L2396 720M2397 742L2396 745M2397 770h1M2397 799h1M2397 827h1M2397 856L2398 860M2397 884L2399 891M2397 912L2400 912M2397 941L2401 931M2401 931L2400 933M2401 931L2401 933M2397 969L2401 956M2401 956L2400 958M2401 956L2401 959M2397 997L2401 985M2401 985L2400 987M2401 985L2401 988M2397 1026L2402 1018M2402 1018L2401 1019M2402 1018L2402 1020M2397 1054L2404 1059M2404 1059L2403 1058M2404 1059L2403 1059M2397 1082L2406 1095M2406 1095L2405 1092M2406 1095L2404 1093M2397 1111L2407 1120M2407 1120L2406 1118M2407 1120L2405 1119M2397 1139L2407 1135M2407 1135L2405 1135M2407 1135L2405 1136M2397 1167L2404 1156M2404 1156L2402 1158M2404 1156L2404 1159M2397 1196L2401 1189M2397 1224h1M2426 430L2425 438M2426 459L2423 472M2423 472L2425 470M2423 472L2423 469M2426 487L2422 502M2422 502L2424 500M2422 502L2422 499M2426 515L2421 530M2421 530L2423 528M2421 530L2421 527M2426 544L2420 557M2420 557L2422 555M2420 557L2421 554M2426 572L2420 584M2420 584L2422 582M2420 584L2421 582M2426 600L2421 613M2421 613L2423 610M2421 613L2421 610M2426 629L2422 641M2422 641L2423 639M2422 641L2422 638M2426 657L2422 669M2422 669L2424 667M2422 669L2422 666M2426 685L2423 695M2423 695L2424 694M2423 695L2423 693M2426 714L2424 719M2426 742h1M2426 770h1M2426 799h1M2426 827h1M2426 856L2427 861M2426 884L2427 894M2427 894L2427 892M2427 894L2426 892M2426 912L2428 917M2426 941L2430 937M2426 969L2430 961M2430 961L2429 962M2430 961L2430 963M2426 997L2429 990M2429 990L2428 991M2429 990L2429 992M2426 1026L2430 1026M2426 1054L2433 1063M2433 1063L2432 1061M2433 1063L2431 1062M2426 1082L2435 1096M2435 1096L2434 1093M2435 1096L2432 1094M2426 1111L2436 1121M2436 1121L2434 1118M2436 1121L2433 1119M2426 1139L2435 1137M2435 1137L2433 1137M2435 1137L2433 1138M2426 1167L2432 1159M2432 1159L2430 1160M2432 1159L2431 1161M2426 1196L2429 1191M2426 1224h1M2454 430L2453 440M2453 440L2454 438M2453 440L2452 438M2454 459L2451 474M2451 474L2453 472M2451 474L2451 471M2454 487L2449 508M2449 508L2451 504M2449 508L2449 503M2454 515L2448 533M2448 533L2450 530M2448 533L2448 529M2454 544L2447 558M2447 558L2449 555M2447 558L2448 554M2454 572L2447 584M2447 584L2449 582M2447 584L2448 581M2454 600L2448 612M2448 612L2450 611M2448 612L2449 610M2454 629L2449 642M2449 642L2451 640M2449 642L2450 639M2454 657L2451 670M2451 670L2452 667M2451 670L2450 667M2454 685L2451 694M2451 694L2452 693M2451 694L2451 693M2454 714L2452 717M2454 742h1M2454 770h1M2454 799h1M2454 827L2455 831M2454 856L2455 864M2455 864L2456 862M2455 864L2455 862M2454 884L2456 897M2456 897L2456 894M2456 897L2455 894M2454 912L2457 924M2457 924L2457 922M2457 924L2456 922M2454 941L2459 950M2459 950L2458 948M2459 950L2457 949M2454 969L2459 976M2459 976L2459 975M2459 976L2458 975M2454 997L2459 1006M2459 1006L2458 1004M2459 1006L2457 1004M2454 1026L2459 1037M2459 1037L2459 1034M2459 1037L2458 1035M2454 1054L2462 1068M2462 1068L2461 1065M2462 1068L2460 1066M2454 1082L2463 1097M2463 1097L2463 1094M2463 1097L2461 1095M2454 1111L2463 1122M2463 1122L2462 1119M2463 1122L2461 1120M2454 1139L2462 1138M2462 1138L2461 1138M2462 1138L2461 1139M2454 1167L2460 1161M2460 1161L2459 1162M2460 1161L2460 1162M2454 1196L2458 1193M2454 1224h1M2482 430L2481 439M2481 439L2482 438M2481 439L2481 438M2482 459L2479 474M2479 474L2480 471M2479 474L2478 471M2482 487L2476 506M2476 506L2478 503M2476 506L2476 502M2482 515L2474 531M2474 531L2476 529M2474 531L2475 528M2482 544L2474 556M2474 556L2477 554M2474 556L2475 553M2482 572L2475 582M2475 582L2477 580M2475 582L2476 579M2482 600L2477 610M2477 610L2478 609M2477 610L2477 608M2482 629L2478 640M2478 640L2479 639M2478 640L2478 638M2482 657L2479 669M2479 669L2481 667M2479 669L2479 666M2482 685L2480 690M2482 714h1M2482 742L2480 738M2482 770h1M2482 799h1M2482 827L2483 831M2482 856L2484 864M2484 864L2484 862M2484 864L2483 863M2482 884L2485 898M2485 898L2485 895M2485 898L2483 895M2482 912L2486 927M2486 927L2486 924M2486 927L2484 924M2482 941L2487 955M2487 955L2487 952M2487 955L2485 953M2482 969L2488 984M2488 984L2488 981M2488 984L2486 982M2482 997L2488 1013M2488 1013L2488 1010M2488 1013L2486 1011M2482 1026L2489 1042M2489 1042L2489 1039M2489 1042L2487 1039M2482 1054L2491 1070M2491 1070L2490 1067M2491 1070L2488 1068M2482 1082L2492 1098M2492 1098L2491 1094M2492 1098L2489 1095M2482 1111L2491 1121M2491 1121L2490 1118M2491 1121L2489 1119M2482 1139L2490 1136M2490 1136L2489 1136M2490 1136L2489 1137M2482 1167L2489 1160M2489 1160L2487 1161M2489 1160L2488 1161M2482 1196L2486 1193M2482 1224h1M2511 430L2509 437M2511 459L2507 471M2507 471L2508 469M2507 471L2507 468M2511 487L2503 500M2503 500L2505 498M2503 500L2504 497M2511 515L2502 526M2502 526L2504 524M2502 526L2503 523M2511 544L2502 548M2502 548L2504 548M2502 548L2504 547M2511 572L2504 572M2511 600L2505 601M2511 629L2506 635M2511 657L2508 664M2511 685L2509 682M2511 714L2509 705M2509 705L2508 707M2509 705L2510 706M2511 742L2509 733M2509 733L2509 735M2509 733L2510 735M2511 770L2509 765M2511 799h1M2511 827h1M2511 856L2512 862M2511 884L2513 895M2513 895L2513 893M2513 895L2512 893M2511 912L2514 924M2514 924L2514 921M2514 924L2513 922M2511 941L2515 952M2515 952L2515 949M2515 952L2513 950M2511 969L2516 980M2516 980L2516 978M2516 980L2514 978M2511 997L2517 1009M2517 1009L2516 1006M2517 1009L2515 1007M2511 1026L2518 1038M2518 1038L2517 1036M2518 1038L2516 1036M2511 1054L2519 1068M2519 1068L2518 1065M2519 1068L2516 1066M2511 1082L2519 1096M2519 1096L2518 1093M2519 1096L2517 1094M2511 1111L2519 1119M2519 1119L2518 1117M2519 1119L2517 1118M2511 1139L2519 1132M2519 1132L2517 1133M2519 1132L2518 1134M2511 1167L2518 1156M2518 1156L2516 1158M2518 1156L2517 1159M2511 1196L2515 1191M2511 1224h1M2539 430L2537 433M2539 459L2535 464M2539 487L2532 491M2539 515L2531 513M2531 513L2532 514M2531 513L2532 513M2539 544L2531 535M2531 535L2532 537M2531 535L2533 536M2539 572L2532 561M2532 561L2533 564M2532 561L2534 563M2539 600L2533 592M2533 592L2534 594M2533 592L2535 594M2539 629L2534 630M2539 657L2536 660M2539 685L2536 677M2536 677L2536 678M2536 677L2537 678M2539 714L2537 700M2537 700L2536 702M2537 700L2538 702M2539 742L2537 728M2537 728L2536 731M2537 728L2538 731M2539 770L2538 762M2538 762L2538 764M2538 762L2539 764M2539 799L2539 796M2539 827h1M2539 856h1M2539 884L2541 886M2539 912L2542 910M2539 941L2543 935M2539 969L2544 963M2539 997L2544 993M2539 1026L2545 1027M2539 1054L2546 1061M2546 1061L2545 1059M2546 1061L2544 1060M2539 1082L2547 1093M2547 1093L2546 1090M2547 1093L2545 1091M2539 1111L2548 1116M2548 1116L2547 1114M2548 1116L2546 1115M2539 1139L2548 1130M2548 1130L2546 1131M2548 1130L2547 1132M2539 1167L2546 1154M2546 1154L2544 1156M2546 1154L2546 1157M2539 1196L2543 1190M2539 1224h1M2567 430h1M2567 459L2564 458M2567 487L2562 483M2567 515L2560 504M2560 504L2561 507M2560 504L2562 506M2567 544L2560 528M2560 528L2560 532M2560 528L2562 531M2567 572L2560 559M2560 559L2561 562M2560 559L2562 561M2567 600L2561 594M2561 594L2562 595M2561 594L2563 594M2567 629L2562 632M2567 657L2563 658M2567 685L2564 675M2564 675L2564 677M2564 675L2565 676M2567 714L2564 696M2564 696L2564 700M2564 696L2566 699M2567 742L2565 725M2565 725L2565 728M2565 725L2567 728M2567 770L2567 760M2567 760L2566 762M2567 760L2567 762M2567 799L2567 794M2567 827L2567 824M2567 856L2568 852M2567 884L2569 876M2569 876L2568 877M2569 876L2569 878M2567 912L2570 901M2570 901L2569 903M2570 901L2570 903M2567 941L2571 926M2571 926L2570 929M2571 926L2571 929M2567 969L2572 954M2572 954L2570 957M2572 954L2572 957M2567 997L2572 985M2572 985L2570 987M2572 985L2572 987M2567 1026L2572 1016M2572 1016L2571 1018M2572 1016L2572 1018M2567 1054L2573 1051M2567 1082L2575 1088M2575 1088L2574 1086M2575 1088L2573 1087M2567 1111L2577 1114M2577 1114L2575 1113M2577 1114L2575 1114M2567 1139L2577 1129M2577 1129L2574 1131M2577 1129L2575 1132M2567 1167L2575 1154M2575 1154L2572 1156M2575 1154L2574 1157M2567 1196L2571 1190M2567 1224h1M2595 430h1M2595 459L2593 456M2595 487L2591 479M2591 479L2591 481M2591 479L2592 480M2595 515L2590 502M2590 502L2590 505M2590 502L2592 504M2595 544L2589 531M2589 531L2590 534M2589 531L2591 533M2595 572L2589 564M2589 564L2590 566M2589 564L2591 565M2595 600L2590 600M2595 629L2591 633M2595 657L2592 657M2595 685L2592 675M2592 675L2592 677M2592 675L2593 677M2595 714L2593 697M2593 697L2592 700M2593 697L2594 700M2595 742L2594 725M2594 725L2593 728M2594 725L2595 728M2595 770L2595 760M2595 760L2595 762M2595 760L2596 762M2595 799L2595 795M2595 827h1M2595 856h1M2595 884L2598 879M2595 912L2600 903M2600 903L2598 905M2600 903L2599 905M2595 941L2600 929M2600 929L2599 931M2600 929L2600 932M2595 969L2600 957M2600 957L2598 959M2600 957L2600 960M2595 997L2600 987M2600 987L2598 989M2600 987L2599 989M2595 1026L2600 1019M2600 1019L2599 1020M2600 1019L2600 1020M2595 1054L2602 1055M2595 1082L2604 1090M2604 1090L2603 1088M2604 1090L2602 1089M2595 1111L2605 1116M2605 1116L2603 1114M2605 1116L2603 1115M2595 1139L2605 1132M2605 1132L2602 1132M2605 1132L2603 1134M2595 1167L2603 1157M2603 1157L2601 1158M2603 1157L2602 1159M2595 1196L2599 1191M2595 1224h1M2624 430h1M2624 459L2622 456M2624 487L2621 481M2624 515L2620 508M2620 508L2620 510M2620 508L2621 509M2624 544L2619 540M2624 572L2619 573M2624 600L2620 605M2624 629L2620 634M2624 657L2621 658M2624 685L2621 678M2621 678L2621 679M2621 678L2622 679M2624 714L2622 701M2622 701L2621 703M2622 701L2623 703M2624 742L2623 729M2623 729L2622 732M2623 729L2623 732M2624 770L2623 763M2624 799h1M2624 827h1M2624 856L2625 860M2624 884L2627 891M2627 891L2627 890M2627 891L2626 890M2624 912L2628 918M2624 941L2628 945M2624 969L2627 973M2624 997L2627 1003M2624 1026L2628 1034M2628 1034L2628 1032M2628 1034L2627 1033M2624 1054L2630 1065M2630 1065L2630 1063M2630 1065L2628 1063M2624 1082L2632 1095M2632 1095L2631 1092M2632 1095L2630 1093M2624 1111L2633 1120M2633 1120L2632 1117M2633 1120L2631 1119M2624 1139L2633 1136M2633 1136L2631 1136M2633 1136L2631 1137M2624 1167L2631 1161M2631 1161L2629 1162M2631 1161L2630 1163M2624 1196L2628 1194M2624 1224h1M2652 430h1M2652 459h1M2652 487L2651 489M2652 515L2650 521M2652 544L2650 553M2650 553L2651 551M2650 553L2650 551M2652 572L2650 583M2650 583L2651 581M2650 583L2650 581M2652 600L2650 612M2650 612L2651 610M2650 612L2650 610M2652 629L2650 640M2650 640L2651 638M2650 640L2650 637M2652 657L2650 665M2650 665L2651 664M2650 665L2650 663M2652 685L2651 688M2652 714L2651 711M2652 742L2651 738M2652 770L2651 767M2652 799h1M2652 827h1M2652 856L2653 862M2652 884L2655 896M2655 896L2655 893M2655 896L2654 894M2652 912L2656 927M2656 927L2656 924M2656 927L2654 925M2652 941L2655 956M2655 956L2655 953M2655 956L2653 953M2652 969L2654 984M2654 984L2654 981M2654 984L2653 981M2652 997L2654 1012M2654 1012L2654 1009M2654 1012L2653 1010M2652 1026L2656 1041M2656 1041L2656 1038M2656 1041L2654 1038M2652 1054L2658 1069M2658 1069L2658 1066M2658 1069L2656 1067M2652 1082L2661 1097M2661 1097L2660 1093M2661 1097L2658 1094M2652 1111L2662 1121M2662 1121L2660 1118M2662 1121L2659 1119M2652 1139L2661 1140M2661 1140L2660 1139M2661 1140L2659 1140M2652 1167L2660 1162M2660 1162L2658 1162M2660 1162L2659 1163M2652 1196L2656 1191M2652 1224h1M2680 430h1M2680 459h1M2680 487L2679 490M2680 515L2679 522M2680 544L2679 552M2679 552L2679 550M2679 552L2678 550M2680 572L2678 581M2678 581L2679 580M2678 581L2678 579M2680 600L2678 611M2678 611L2679 609M2678 611L2678 608M2680 629L2678 639M2678 639L2679 637M2678 639L2678 637M2680 657L2679 667M2679 667L2679 665M2679 667L2678 665M2680 685L2679 693M2680 714L2679 718M2680 742h1M2680 770h1M2680 799h1M2680 827h1M2680 856L2681 859M2680 884L2683 891M2680 912L2683 921M2683 921L2683 919M2683 921L2682 920M2680 941L2682 950M2682 950L2683 948M2682 950L2681 948M2680 969L2682 978M2682 978L2682 976M2682 978L2681 976M2680 997L2682 1006M2682 1006L2682 1004M2682 1006L2681 1004M2680 1026L2684 1034M2684 1034L2684 1032M2684 1034L2683 1033M2680 1054L2687 1062M2687 1062L2686 1060M2687 1062L2685 1061M2680 1082L2689 1090M2689 1090L2688 1088M2689 1090L2687 1089M2680 1111L2690 1115M2690 1115L2688 1114M2690 1115L2688 1115M2680 1139L2690 1135M2690 1135L2688 1136M2690 1135L2688 1137M2680 1167L2688 1155M2688 1155L2686 1157M2688 1155L2688 1158M2680 1196L2685 1186M2685 1186L2683 1188M2685 1186L2685 1188M2680 1224L2681 1221M2708 374h1M2708 402h1M2708 430L2707 427M2708 459L2706 456M2708 487L2706 484M2708 515L2706 513M2708 544L2705 540M2708 572L2705 568M2708 600L2705 596M2708 629L2705 625M2708 657L2705 653M2708 685L2706 680M2708 714L2706 708M2708 742L2707 736M2708 770L2708 764M2708 799L2709 792M2708 827L2709 821M2708 856L2709 849M2708 884L2710 878M2708 912L2711 906M2708 941L2711 934M2708 969L2712 962M2708 997L2712 991M2708 1026L2713 1019M2708 1054L2715 1048M2715 1048L2713 1048M2715 1048L2714 1049M2708 1082L2717 1076M2717 1076L2715 1077M2717 1076L2715 1078M2708 1111L2718 1104M2718 1104L2715 1105M2718 1104L2716 1106M2708 1139L2718 1127M2718 1127L2715 1129M2718 1127L2717 1130M2708 1167L2717 1150M2717 1150L2714 1153M2717 1150L2716 1154M2708 1196L2713 1184M2713 1184L2712 1186M2713 1184L2713 1186M2708 1224L2710 1221M2737 374L2734 370M2737 402L2733 397M2737 430L2732 425M2737 459L2732 452M2732 452L2732 454M2732 452L2733 453M2737 487L2731 479M2731 479L2732 481M2731 479L2733 480M2737 515L2731 505M2731 505L2732 507M2731 505L2733 507M2737 544L2731 530M2731 530L2732 533M2731 530L2733 532M2737 572L2731 556M2731 556L2732 559M2731 556L2733 559M2737 600L2732 583M2732 583L2732 587M2732 583L2734 586M2737 629L2732 611M2732 611L2732 614M2732 611L2734 614M2737 657L2733 639M2733 639L2732 643M2733 639L2734 642M2737 685L2733 667M2733 667L2733 671M2733 667L2735 671M2737 714L2734 696M2734 696L2733 699M2734 696L2735 699M2737 742L2735 724M2735 724L2734 728M2735 724L2736 728M2737 770L2737 753M2737 753L2736 756M2737 753L2738 756M2737 799L2737 781M2737 781L2736 784M2737 781L2738 784M2737 827L2737 809M2737 809L2736 813M2737 809L2738 813M2737 856L2737 838M2737 838L2736 841M2737 838L2738 841M2737 884L2738 866M2738 866L2737 870M2738 866L2739 870M2737 912L2739 895M2739 895L2738 898M2739 895L2740 898M2737 941L2741 923M2741 923L2739 926M2741 923L2741 927M2737 969L2741 952M2741 952L2740 955M2741 952L2742 955M2737 997L2742 980M2742 980L2740 983M2742 980L2742 984M2737 1026L2743 1008M2743 1008L2741 1011M2743 1008L2743 1012M2737 1054L2744 1037M2744 1037L2741 1039M2744 1037L2744 1040M2737 1082L2745 1065M2745 1065L2742 1068M2745 1065L2744 1069M2737 1111L2746 1094M2746 1094L2743 1096M2746 1094L2745 1097M2737 1139L2746 1120M2746 1120L2743 1123M2746 1120L2746 1124M2737 1167L2745 1147M2745 1147L2743 1150M2745 1147L2745 1151M2737 1196L2742 1182M2742 1182L2740 1185M2742 1182L2742 1185M2737 1224L2738 1220M2765 374L2760 370M2765 402L2758 398M2758 398L2759 399M2758 398L2760 398M2765 430L2757 425M2757 425L2758 427M2757 425L2759 426M2765 459L2757 453M2757 453L2758 454M2757 453L2759 453M2765 487L2757 480M2757 480L2758 481M2757 480L2759 480M2765 515L2757 506M2757 506L2758 508M2757 506L2759 507M2765 544L2758 533M2758 533L2759 535M2758 533L2760 534M2765 572L2759 559M2759 559L2759 562M2759 559L2761 561M2765 600L2759 586M2759 586L2760 589M2759 586L2761 588M2765 629L2760 614M2760 614L2760 617M2760 614L2762 616M2765 657L2761 642M2761 642L2761 645M2761 642L2762 644M2765 685L2761 670M2761 670L2761 673M2761 670L2763 673M2765 714L2762 699M2762 699L2762 702M2762 699L2764 701M2765 742L2763 727M2763 727L2763 730M2763 727L2765 730M2765 770L2765 755M2765 755L2764 758M2765 755L2766 758M2765 799L2766 784M2766 784L2765 786M2766 784L2766 787M2765 827L2766 812M2766 812L2765 815M2766 812L2767 815M2765 856L2766 841M2766 841L2765 844M2766 841L2767 844M2765 884L2767 870M2767 870L2766 872M2767 870L2767 873M2765 912L2768 898M2768 898L2767 901M2768 898L2768 901M2765 941L2770 927M2770 927L2768 929M2770 927L2770 930M2765 969L2771 955M2771 955L2769 957M2771 955L2771 958M2765 997L2771 983M2771 983L2769 986M2771 983L2771 986M2765 1026L2772 1012M2772 1012L2770 1014M2772 1012L2771 1015M2765 1054L2773 1040M2773 1040L2771 1042M2773 1040L2772 1043M2765 1082L2774 1068M2774 1068L2771 1070M2774 1068L2773 1072M2765 1111L2775 1096M2775 1096L2772 1098M2775 1096L2774 1100M2765 1139L2775 1123M2775 1123L2772 1126M2775 1123L2774 1127M2765 1167L2774 1151M2774 1151L2771 1154M2774 1151L2773 1155M2765 1196L2770 1185M2770 1185L2769 1187M2770 1185L2770 1188M2765 1224L2766 1221M2793 374L2787 375M2793 402L2785 403M2785 403L2786 404M2785 403L2786 403M2793 430L2783 431M2783 431L2785 432M2783 431L2785 430M2793 459L2783 459M2783 459L2785 460M2783 459L2785 459M2793 487L2784 488M2784 488L2786 488M2784 488L2785 487M2793 515L2785 516M2785 516L2786 516M2785 516L2786 515M2793 544L2786 544M2793 572L2787 573M2793 600L2788 601M2793 629L2788 629M2793 657L2789 658M2793 685L2790 686M2793 714L2791 714M2793 742h1M2793 770h1M2793 799h1M2793 827h1M2793 856h1M2793 884L2796 883M2793 912L2797 911M2793 941L2798 939M2793 969L2799 968M2793 997L2800 996M2793 1026L2801 1024M2793 1054L2802 1053M2802 1053L2800 1052M2802 1053L2800 1053M2793 1082L2803 1081M2803 1081L2801 1081M2803 1081L2801 1082M2793 1111L2803 1109M2803 1109L2801 1109M2803 1109L2801 1110M2793 1139L2803 1136M2803 1136L2801 1136M2803 1136L2802 1137M2793 1167L2803 1162M2803 1162L2801 1163M2803 1162L2801 1164M2793 1196L2799 1192M2793 1224h1M2822 345L2819 349M2822 374L2815 379M2815 379L2817 378M2815 379L2816 377M2822 402L2813 408M2813 408L2815 407M2813 408L2814 406M2822 430L2812 437M2812 437L2814 436M2812 437L2813 435M2822 459L2812 466M2812 466L2814 465M2812 466L2813 464M2822 487L2812 495M2812 495L2814 494M2812 495L2813 493M2822 515L2813 524M2813 524L2815 523M2813 524L2814 522M2822 544L2815 553M2815 553L2816 551M2815 553L2815 551M2822 572L2816 581M2816 581L2817 580M2816 581L2816 579M2822 600L2816 610M2816 610L2818 609M2816 610L2817 608M2822 629L2816 638M2816 638L2818 637M2816 638L2817 636M2822 657L2817 667M2817 667L2818 665M2817 667L2817 664M2822 685L2818 695M2818 695L2819 693M2818 695L2818 693M2822 714L2819 723M2819 723L2820 721M2819 723L2819 721M2822 742L2821 751M2821 751L2821 749M2821 751L2820 749M2822 770L2822 779M2822 779L2822 778M2822 779L2821 778M2822 799L2823 808M2823 808L2823 806M2823 808L2822 806M2822 827L2823 836M2823 836L2823 834M2823 836L2822 834M2822 856L2824 864M2824 864L2824 862M2824 864L2823 862M2822 884L2825 892M2825 892L2825 890M2825 892L2824 890M2822 912L2826 920M2826 920L2825 918M2826 920L2824 919M2822 941L2827 948M2827 948L2826 947M2827 948L2825 947M2822 969L2827 977M2827 977L2827 975M2827 977L2826 976M2822 997L2828 1005M2828 1005L2827 1003M2828 1005L2827 1004M2822 1026L2829 1033M2829 1033L2828 1032M2829 1033L2827 1032M2822 1054L2830 1062M2830 1062L2829 1060M2830 1062L2828 1061M2822 1082L2831 1090M2831 1090L2830 1088M2831 1090L2829 1089M2822 1111L2831 1117M2831 1117L2830 1115M2831 1117L2829 1117M2822 1139L2832 1143M2832 1143L2830 1142M2832 1143L2830 1143M2822 1167L2831 1167M2831 1167L2829 1167M2831 1167L2829 1168M2822 1196L2828 1196M2822 1224h1M2850 345L2847 346M2850 374L2844 375M2850 402L2842 404M2842 404L2843 404M2842 404L2843 403M2850 430L2841 432M2841 432L2842 432M2841 432L2842 431M2850 459L2840 460M2840 460L2842 460M2840 460L2842 459M2850 487L2840 487M2840 487L2842 487M2840 487L2842 486M2850 515L2841 514M2841 514L2843 515M2841 514L2843 514M2850 544L2843 542M2850 572L2844 571M2850 600L2844 599M2850 629L2845 627M2850 657L2845 655M2850 685L2846 684M2850 714L2847 712M2850 742h1M2850 770h1M2850 799h1M2850 827h1M2850 856h1M2850 884L2853 883M2850 912L2854 912M2850 941L2855 940M2850 969L2855 968M2850 997L2856 997M2850 1026L2857 1025M2850 1054L2858 1053M2858 1053L2857 1053M2858 1053L2857 1054M2850 1082L2859 1082M2859 1082L2857 1081M2859 1082L2857 1082M2850 1111L2859 1109M2859 1109L2858 1109M2859 1109L2858 1110M2850 1139L2860 1136M2860 1136L2858 1136M2860 1136L2858 1137M2850 1167L2860 1161M2860 1161L2857 1162M2860 1161L2858 1163M2850 1196L2856 1191M2850 1224h1M2878 345L2876 342M2878 374L2873 369M2878 402L2870 396M2870 396L2871 397M2870 396L2872 396M2878 430L2869 421M2869 421L2870 423M2869 421L2871 422M2878 459L2869 446M2869 446L2870 449M2869 446L2871 448M2878 487L2869 472M2869 472L2870 476M2869 472L2871 474M2878 515L2869 499M2869 499L2870 503M2869 499L2872 502M2878 544L2871 527M2871 527L2871 530M2871 527L2873 529M2878 572L2872 555M2872 555L2872 559M2872 555L2874 558M2878 600L2873 583M2873 583L2873 587M2873 583L2875 586M2878 629L2873 612M2873 612L2873 615M2873 612L2875 615M2878 657L2874 640M2874 640L2873 644M2874 640L2876 643M2878 685L2874 668M2874 668L2874 672M2874 668L2876 671M2878 714L2875 697M2875 697L2875 700M2875 697L2877 700M2878 742L2876 725M2876 725L2876 728M2876 725L2878 728M2878 770L2877 753M2877 753L2876 757M2877 753L2878 757M2878 799L2878 782M2878 782L2877 785M2878 782L2879 785M2878 827L2879 811M2879 811L2878 814M2879 811L2880 814M2878 856L2880 839M2880 839L2878 842M2880 839L2880 842M2878 884L2881 868M2881 868L2879 871M2881 868L2881 871M2878 912L2882 896M2882 896L2880 899M2882 896L2882 899M2878 941L2883 924M2883 924L2881 927M2883 924L2883 928M2878 969L2883 953M2883 953L2881 956M2883 953L2883 956M2878 997L2884 981M2884 981L2882 984M2884 981L2884 985M2878 1026L2885 1009M2885 1009L2883 1012M2885 1009L2885 1013M2878 1054L2886 1038M2886 1038L2883 1040M2886 1038L2885 1041M2878 1082L2887 1066M2887 1066L2884 1069M2887 1066L2886 1070M2878 1111L2887 1095M2887 1095L2885 1097M2887 1095L2887 1098M2878 1139L2888 1122M2888 1122L2885 1125M2888 1122L2887 1126M2878 1167L2888 1150M2888 1150L2885 1153M2888 1150L2887 1154M2878 1196L2884 1185M2884 1185L2882 1186M2884 1185L2884 1187M2878 1224L2880 1221M2906 345L2904 340M2906 374L2901 366M2901 366L2902 368M2901 366L2902 367M2906 402L2899 390M2899 390L2899 393M2899 390L2901 392M2906 430L2897 413M2897 413L2898 417M2897 413L2900 416M2906 459L2897 439M2897 439L2897 443M2897 439L2900 442M2906 487L2897 467M2897 467L2897 471M2897 467L2900 470M2906 515L2897 495M2897 495L2898 499M2897 495L2900 498M2906 544L2899 523M2899 523L2899 528M2899 523L2902 527M2906 572L2900 552M2900 552L2900 556M2900 552L2903 555M2906 600L2901 580M2901 580L2901 584M2901 580L2903 583M2906 629L2901 608M2901 608L2901 612M2901 608L2904 612M2906 657L2902 637M2902 637L2902 641M2902 637L2904 640M2906 685L2903 665M2903 665L2902 669M2903 665L2905 669M2906 714L2903 693M2903 693L2903 697M2903 693L2905 697M2906 742L2904 722M2904 722L2903 726M2904 722L2906 725M2906 770L2905 750M2905 750L2904 754M2905 750L2906 754M2906 799L2906 778M2906 778L2905 782M2906 778L2907 782M2906 827L2907 807M2907 807L2905 811M2907 807L2908 811M2906 856L2908 835M2908 835L2906 839M2908 835L2909 839M2906 884L2909 864M2909 864L2907 867M2909 864L2910 868M2906 912L2910 892M2910 892L2908 896M2910 892L2910 896M2906 941L2911 920M2911 920L2909 924M2911 920L2911 924M2906 969L2912 949M2912 949L2909 952M2912 949L2912 953M2906 997L2912 977M2912 977L2910 980M2912 977L2912 981M2906 1026L2913 1005M2913 1005L2911 1009M2913 1005L2913 1010M2906 1054L2914 1034M2914 1034L2911 1037M2914 1034L2914 1038M2906 1082L2915 1062M2915 1062L2912 1066M2915 1062L2914 1067M2906 1111L2916 1091M2916 1091L2913 1094M2916 1091L2915 1095M2906 1139L2917 1118M2917 1118L2913 1121M2917 1118L2916 1122M2906 1167L2916 1146M2916 1146L2913 1150M2916 1146L2916 1151M2906 1196L2912 1183M2912 1183L2911 1185M2912 1183L2912 1185M2906 1224L2908 1220M2935 345L2932 342M2935 374L2929 368M2935 402L2927 392M2927 392L2928 394M2927 392L2929 393M2935 430L2926 415M2926 415L2927 419M2926 415L2928 418M2935 459L2925 441M2925 441L2926 445M2925 441L2928 443M2935 487L2925 469M2925 469L2926 473M2925 469L2928 472M2935 515L2926 497M2926 497L2926 501M2926 497L2929 500M2935 544L2928 526M2928 526L2928 530M2928 526L2930 529M2935 572L2929 554M2929 554L2929 558M2929 554L2931 557M2935 600L2929 582M2929 582L2929 586M2929 582L2931 585M2935 629L2930 611M2930 611L2930 614M2930 611L2932 614M2935 657L2930 639M2930 639L2930 643M2930 639L2932 642M2935 685L2931 667M2931 667L2931 671M2931 667L2933 671M2935 714L2932 696M2932 696L2931 699M2932 696L2933 699M2935 742L2933 724M2933 724L2932 728M2933 724L2934 727M2935 770L2934 753M2934 753L2933 756M2934 753L2935 756M2935 799L2935 781M2935 781L2934 784M2935 781L2936 784M2935 827L2935 809M2935 809L2934 813M2935 809L2936 813M2935 856L2936 838M2936 838L2935 841M2936 838L2937 841M2935 884L2937 867M2937 867L2936 870M2937 867L2938 870M2935 912L2938 895M2938 895L2936 898M2938 895L2938 898M2935 941L2939 923M2939 923L2937 926M2939 923L2939 927M2935 969L2940 951M2940 951L2938 954M2940 951L2940 955M2935 997L2941 980M2941 980L2939 983M2941 980L2941 984M2935 1026L2942 1008M2942 1008L2939 1011M2942 1008L2941 1012M2935 1054L2942 1036M2942 1036L2940 1039M2942 1036L2942 1040M2935 1082L2943 1065M2943 1065L2941 1068M2943 1065L2943 1069M2935 1111L2944 1094M2944 1094L2941 1096M2944 1094L2943 1097M2935 1139L2945 1121M2945 1121L2942 1124M2945 1121L2944 1125M2935 1167L2945 1149M2945 1149L2942 1152M2945 1149L2944 1153M2935 1196L2941 1184M2941 1184L2939 1186M2941 1184L2940 1187M2935 1224L2936 1221M2963 345L2960 345M2963 374L2957 372M2963 402L2955 399M2955 399L2956 400M2955 399L2956 399M2963 430L2954 424M2954 424L2955 426M2954 424L2956 425M2963 459L2953 451M2953 451L2955 453M2953 451L2956 452M2963 487L2953 478M2953 478L2955 481M2953 478L2956 479M2963 515L2954 506M2954 506L2955 509M2954 506L2956 508M2963 544L2956 535M2956 535L2957 537M2956 535L2958 536M2963 572L2957 563M2957 563L2958 565M2957 563L2959 564M2963 600L2957 591M2957 591L2958 594M2957 591L2959 593M2963 629L2958 620M2958 620L2958 622M2958 620L2959 621M2963 657L2958 648M2958 648L2959 650M2958 648L2960 650M2963 685L2959 676M2959 676L2959 678M2959 676L2960 678M2963 714L2960 705M2960 705L2960 707M2960 705L2961 706M2963 742L2962 733M2962 733L2961 735M2962 733L2962 735M2963 770L2963 762M2963 762L2962 763M2963 762L2963 763M2963 799L2964 790M2964 790L2963 792M2964 790L2964 792M2963 827L2964 818M2964 818L2963 820M2964 818L2964 820M2963 856L2965 846M2965 846L2964 848M2965 846L2965 848M2963 884L2966 874M2966 874L2965 876M2966 874L2966 876M2963 912L2967 902M2967 902L2965 904M2967 902L2967 904M2963 941L2968 931M2968 931L2966 933M2968 931L2967 933M2963 969L2969 960M2969 960L2967 961M2969 960L2968 962M2963 997L2969 988M2969 988L2968 989M2969 988L2969 990M2963 1026L2970 1016M2970 1016L2968 1018M2970 1016L2969 1018M2963 1054L2971 1045M2971 1045L2969 1046M2971 1045L2970 1047M2963 1082L2972 1073M2972 1073L2970 1074M2972 1073L2971 1075M2963 1111L2973 1101M2973 1101L2970 1103M2973 1101L2972 1104M2963 1139L2974 1129M2974 1129L2971 1131M2974 1129L2972 1132M2963 1167L2973 1158M2973 1158L2971 1159M2973 1158L2972 1160M2963 1196L2969 1190M2969 1190L2968 1191M2969 1190L2968 1191M2963 1224h1M2991 345L2989 346M2991 374L2985 376M2991 402L2982 404M2982 404L2984 404M2982 404L2984 403M2991 430L2981 431M2981 431L2983 432M2981 431L2983 430M2991 459L2981 459M2981 459L2983 459M2981 459L2983 458M2991 487L2982 487M2982 487L2984 487M2982 487L2984 486M2991 515L2983 515M2983 515L2984 516M2983 515L2984 515M2991 544L2984 544M2991 572L2985 572M2991 600L2985 600M2991 629L2986 629M2991 657L2986 657M2991 685L2987 685M2991 714h1M2991 742h1M2991 770h1M2991 799h1M2991 827h1M2991 856h1M2991 884L2994 883M2991 912L2995 912M2991 941L2996 940M2991 969L2997 969M2991 997L2998 997M2991 1026L2999 1025M2991 1054L3000 1054M3000 1054L2998 1053M3000 1054L2998 1054M2991 1082L3001 1082M3001 1082L2999 1082M3001 1082L2999 1083M2991 1111L3001 1110M3001 1110L2999 1110M3001 1110L2999 1111M2991 1139L3002 1139M3002 1139L3000 1138M3002 1139L3000 1139M2991 1167L3002 1167M3002 1167L3000 1167M3002 1167L3000 1168M2991 1196L2998 1196M2991 1224h1M3019 345h1M3019 374L3014 374M3019 402L3012 403M3019 430L3011 431M3011 431L3012 431M3011 431L3012 430M3019 459L3010 458M3010 458L3012 459M3010 458L3012 458M3019 487L3010 484M3010 484L3012 485M3010 484L3012 484M3019 515L3011 511M3011 511L3012 513M3011 511L3013 512M3019 544L3012 539M3012 539L3013 541M3012 539L3013 540M3019 572L3013 568M3013 568L3014 569M3013 568L3014 568M3019 600L3014 595M3019 629L3014 623M3019 657L3015 651M3019 685L3016 680M3019 714L3017 708M3019 742L3019 736M3019 770L3019 765M3019 799L3020 793M3019 827L3021 821M3019 856L3022 850M3019 884L3023 878M3019 912L3023 907M3019 941L3024 935M3019 969L3025 963M3019 997L3026 992M3026 992L3024 992M3026 992L3025 993M3019 1026L3027 1020M3027 1020L3025 1021M3027 1020L3026 1022M3019 1054L3028 1048M3028 1048L3026 1049M3028 1048L3027 1050M3019 1082L3029 1077M3029 1077L3027 1077M3029 1077L3027 1079M3019 1111L3030 1106M3030 1106L3027 1106M3030 1106L3028 1107M3019 1139L3030 1133M3030 1133L3028 1134M3030 1133L3028 1135M3019 1167L3030 1161M3030 1161L3028 1161M3030 1161L3028 1163M3019 1196L3026 1191M3019 1224h1M3048 345L3046 343M3048 374L3044 371M3048 402L3042 397M3048 430L3041 422M3041 422L3042 424M3041 422L3043 424M3048 459L3040 447M3040 447L3040 450M3040 447L3042 449M3048 487L3039 471M3039 471L3039 475M3039 471L3041 474M3048 515L3039 498M3039 498L3039 501M3039 498L3041 500M3048 544L3040 525M3040 525L3040 529M3040 525L3042 528M3048 572L3041 553M3041 553L3041 557M3041 553L3043 557M3048 600L3042 581M3042 581L3042 585M3042 581L3044 584M3048 629L3043 608M3043 608L3042 612M3043 608L3045 612M3048 657L3043 635M3043 635L3043 640M3043 635L3045 639M3048 685L3044 663M3044 663L3043 667M3044 663L3046 667M3048 714L3045 692M3045 692L3045 696M3045 692L3047 696M3048 742L3046 720M3046 720L3045 724M3046 720L3048 724M3048 770L3047 749M3047 749L3046 753M3047 749L3048 753M3048 799L3048 777M3048 777L3046 781M3048 777L3049 781M3048 827L3049 806M3049 806L3047 810M3049 806L3050 810M3048 856L3050 835M3050 835L3048 839M3050 835L3051 839M3048 884L3050 864M3050 864L3049 868M3050 864L3051 868M3048 912L3051 893M3051 893L3049 896M3051 893L3052 897M3048 941L3052 921M3052 921L3050 924M3052 921L3052 925M3048 969L3052 949M3052 949L3050 952M3052 949L3053 953M3048 997L3053 977M3053 977L3051 981M3053 977L3053 981M3048 1026L3054 1005M3054 1005L3052 1009M3054 1005L3054 1009M3048 1054L3056 1033M3056 1033L3053 1037M3056 1033L3055 1038M3048 1082L3057 1062M3057 1062L3054 1065M3057 1062L3056 1066M3048 1111L3058 1090M3058 1090L3055 1094M3058 1090L3057 1095M3048 1139L3058 1118M3058 1118L3055 1121M3058 1118L3058 1122M3048 1167L3058 1147M3058 1147L3055 1150M3058 1147L3057 1152M3048 1196L3054 1183M3054 1183L3052 1185M3054 1183L3054 1186M3048 1224L3049 1221M3076 374L3074 370M3076 402L3073 394M3073 394L3073 396M3073 394L3074 395M3076 430L3071 415M3071 415L3071 419M3071 415L3072 418M3076 459L3068 438M3068 438L3069 442M3068 438L3071 441M3076 487L3067 463M3067 463L3067 467M3067 463L3070 466M3076 515L3067 490M3067 490L3067 494M3067 490L3069 493M3076 544L3068 518M3068 518L3068 522M3068 518L3070 521M3076 572L3069 546M3069 546L3069 551M3069 546L3071 550M3076 600L3070 574M3070 574L3069 579M3070 574L3072 578M3076 629L3070 601M3070 601L3070 605M3070 601L3073 605M3076 657L3071 627M3071 627L3070 632M3071 627L3073 631M3076 685L3072 654M3072 654L3071 658M3072 654L3074 658M3076 714L3073 682M3073 682L3072 686M3073 682L3075 686M3076 742L3074 711M3074 711L3073 715M3074 711L3075 715M3076 770L3074 740M3074 740L3073 745M3074 740L3076 745M3076 799L3075 770M3075 770L3074 774M3075 770L3077 774M3076 827L3076 799M3076 799L3075 803M3076 799L3078 803M3076 856L3077 828M3077 828L3076 832M3077 828L3079 832M3076 884L3078 857M3078 857L3076 861M3078 857L3079 861M3076 912L3078 886M3078 886L3077 890M3078 886L3079 890M3076 941L3079 914M3079 914L3077 918M3079 914L3080 918M3076 969L3080 941M3080 941L3078 945M3080 941L3080 946M3076 997L3080 969M3080 969L3078 973M3080 969L3081 974M3076 1026L3081 997M3081 997L3079 1001M3081 997L3082 1002M3076 1054L3083 1025M3083 1025L3081 1029M3083 1025L3083 1030M3076 1082L3084 1054M3084 1054L3082 1058M3084 1054L3084 1058M3076 1111L3085 1083M3085 1083L3083 1086M3085 1083L3085 1087M3076 1139L3086 1111M3086 1111L3083 1115M3086 1111L3086 1116M3076 1167L3086 1142M3086 1142L3083 1146M3086 1142L3085 1147M3076 1196L3082 1181M3082 1181L3080 1183M3082 1181L3082 1184M3076 1224L3078 1220M3104 374L3103 371M3104 402L3102 396M3104 430L3099 418M3099 418L3100 421M3099 418L3101 420M3104 459L3097 442M3097 442L3098 445M3097 442L3100 444M3104 487L3096 467M3096 467L3097 471M3096 467L3099 470M3104 515L3096 494M3096 494L3096 499M3096 494L3099 498M3104 544L3096 522M3096 522L3097 526M3096 522L3099 525M3104 572L3097 550M3097 550L3097 554M3097 550L3100 553M3104 600L3098 577M3098 577L3098 582M3098 577L3100 581M3104 629L3098 605M3098 605L3098 609M3098 605L3101 608M3104 657L3099 631M3099 631L3098 636M3099 631L3101 635M3104 685L3100 658M3100 658L3099 663M3100 658L3102 662M3104 714L3101 685M3101 685L3100 690M3101 685L3103 690M3104 742L3102 714M3102 714L3101 718M3102 714L3104 718M3104 770L3102 743M3102 743L3101 748M3102 743L3104 747M3104 799L3103 773M3103 773L3102 777M3103 773L3105 777M3104 827L3104 802M3104 802L3103 806M3104 802L3106 806M3104 856L3105 831M3105 831L3104 835M3105 831L3106 835M3104 884L3105 860M3105 860L3104 864M3105 860L3107 864M3104 912L3106 888M3106 888L3104 892M3106 888L3107 892M3104 941L3106 917M3106 917L3104 921M3106 917L3107 921M3104 969L3107 945M3107 945L3105 949M3107 945L3108 949M3104 997L3107 973M3107 973L3106 977M3107 973L3108 977M3104 1026L3108 1001M3108 1001L3106 1005M3108 1001L3109 1005M3104 1054L3110 1029M3110 1029L3107 1033M3110 1029L3110 1033M3104 1082L3111 1058M3111 1058L3108 1061M3111 1058L3111 1062M3104 1111L3112 1087M3112 1087L3109 1090M3112 1087L3112 1091M3104 1139L3112 1115M3112 1115L3110 1118M3112 1115L3112 1119M3104 1167L3112 1145M3112 1145L3109 1148M3112 1145L3112 1149M3104 1196L3109 1182M3109 1182L3107 1184M3109 1182L3109 1185M3104 1224L3106 1220M3133 430L3130 424M3133 459L3129 451M3129 451L3129 452M3129 451L3130 452M3133 487L3128 477M3128 477L3128 479M3128 477L3130 479M3133 515L3128 505M3128 505L3128 507M3128 505L3130 506M3133 544L3128 532M3128 532L3128 535M3128 532L3130 534M3133 572L3129 560M3129 560L3129 562M3129 560L3130 562M3133 600L3129 587M3129 587L3129 590M3129 587L3130 589M3133 629L3129 615M3129 615L3129 618M3129 615L3131 617M3133 657L3129 643M3129 643L3129 646M3129 643L3131 645M3133 685L3130 671M3130 671L3130 674M3130 671L3131 674M3133 714L3131 699M3131 699L3130 702M3131 699L3132 702M3133 742L3131 727M3131 727L3130 730M3131 727L3132 730M3133 770L3132 755M3132 755L3131 758M3132 755L3133 758M3133 799L3132 784M3132 784L3131 787M3132 784L3133 787M3133 827L3133 813M3133 813L3132 816M3133 813L3133 816M3133 856L3133 842M3133 842L3132 844M3133 842L3134 844M3133 884L3133 870M3133 870L3132 873M3133 870L3134 873M3133 912L3133 899M3133 899L3132 901M3133 899L3134 901M3133 941L3133 927M3133 927L3132 929M3133 927L3134 930M3133 969L3134 955M3134 955L3133 958M3134 955L3134 958M3133 997L3134 984M3134 984L3133 986M3134 984L3135 986M3133 1026L3135 1012M3135 1012L3133 1014M3135 1012L3135 1015M3133 1054L3135 1040M3135 1040L3134 1043M3135 1040L3136 1043M3133 1082L3136 1069M3136 1069L3134 1071M3136 1069L3136 1071M3133 1111L3136 1097M3136 1097L3135 1099M3136 1097L3136 1100M3133 1139L3137 1125M3137 1125L3135 1128M3137 1125L3137 1128M3133 1167L3136 1154M3136 1154L3135 1156M3136 1154L3136 1157M3133 1196L3135 1188M3135 1188L3134 1189M3135 1188L3135 1189M3133 1224h1M3161 430h1M3161 459h1M3161 487h1M3161 515h1M3161 544h1M3161 572h1M3161 600L3160 597M3161 629L3160 625M3161 657L3160 654M3161 685L3161 683M3161 714L3161 711M3161 742L3161 740M3161 770h1M3161 799L3161 796M3161 827L3161 824M3161 856L3161 852M3161 884L3161 881M3161 912L3161 909M3161 941L3161 937M3161 969L3161 966M3161 997L3161 994M3161 1026L3161 1022M3161 1054L3161 1051M3161 1082L3161 1079M3161 1111L3161 1107M3161 1139L3161 1136M3161 1167L3161 1165M3161 1196h1M3161 1224h1" stroke="#fff" stroke-width="2.4" fill="none" stroke-linecap="square"/>
</svg>
<div class="abs mt" style="left:1630px;width:101px;text-align:right;top:1220.8px">-10</div>
<div class="abs mt" style="left:1630px;width:101px;text-align:right;top:1107.4px">0</div>
<div class="abs mt" style="left:1630px;width:101px;text-align:right;top:994.0px">10</div>
<div class="abs mt" style="left:1630px;width:101px;text-align:right;top:880.6px">20</div>
<div class="abs mt" style="left:1630px;width:101px;text-align:right;top:767.2px">30</div>
<div class="abs mt" style="left:1630px;width:101px;text-align:right;top:653.8px">40</div>
<div class="abs mt" style="left:1630px;width:101px;text-align:right;top:540.4px">50</div>
<div class="abs mt" style="left:1630px;width:101px;text-align:right;top:427.0px">60</div>
<div class="abs mt" style="left:1630px;width:101px;text-align:right;top:313.6px">70</div>
<div class="abs mt" style="left:1871.0px;width:120px;text-align:center;top:1350.0px">0</div>
<div class="abs mt" style="left:2097.2px;width:120px;text-align:center;top:1350.0px">20</div>
<div class="abs mt" style="left:2323.4px;width:120px;text-align:center;top:1350.0px">40</div>
<div class="abs mt" style="left:2549.6px;width:120px;text-align:center;top:1350.0px">60</div>
<div class="abs mt" style="left:2775.8px;width:120px;text-align:center;top:1350.0px">80</div>
<div class="abs mt" style="left:3002.0px;width:120px;text-align:center;top:1350.0px">100</div>
<div class="abs mt" style="left:2407px;width:120px;text-align:center;top:1395px;font-size:36px;line-height:40px">x</div>
<div class="abs mt" style="left:1596px;width:120px;text-align:center;top:765px;font-size:36px;line-height:40px;transform:rotate(-90deg)">y</div>
<div class="abs" style="left:57px;top:1602px;width:3480px;height:1093px;overflow:hidden">
<div class="abs" style="left:-57px;top:-1602px;width:3587px;height:2747px">
<div class="abs" style="left:523.9px;top:1740.0px;width:988.7px;height:777.0px;filter:blur(2px)"><div style="position:absolute;left:0;top:60px;width:100%;height:6px;background:linear-gradient(90deg,#000000,#000000,#000000,#000000,#000003,#000001,#000000,#000000,#000002,#000006,#000009,#000003,#000000,#000000,#000000,#000000,#000000,#000000,#000000,#000000,#000000,#000000,#000000,#000000,#000000,#000000,#000000,#000000,#000000,#000000,#000000,#000000,#000000,#000000,#000000,#000000,#000000,#000000,#000000,#000000,#000000,#000000,#000000,#000000,#000000,#000002,#000004,#000001,#000000,#000000,#000000)"></div><div style="position:absolute;left:0;top:66px;width:100%;height:6px;background:linear-gradient(90deg,#000000,#000000,#000000,#000001,#000014,#000019,#000019,#000018,#000018,#000017,#000010,#000004,#000000,#000000,#000000,#000000,#000000,#000000,#000000,#000000,#000000,#000000,#000000,#000000,#000000,#000000,#000000,#000000,#000000,#000000,#000000,#000000,#000000,#000000,#000000,#000002,#00000f,#000011,#00000e,#00000e,#000010,#000010,#00000e,#00000d,#00000e,#000011,#00000d,#000003,#000000,#000000,#000000)"></div><div style="position:absolute;left:0;top:72px;width:100%;height:6px;background:linear-gradient(90deg,#000000,#000000,#000000,#000005,#00002c,#000044,#00004d,#000048,#00003b,#00002b,#00001a,#000004,#000000,#000000,#000000,#000000,#000000,#000000,#000000,#000000,#000000,#000000,#000000,#000000,#000000,#000000,#000000,#000000,#000000,#000000,#000000,#000000,#000000,#000000,#000000,#000017,#00002e,#000033,#00002f,#00002d,#00002e,#00002e,#00002f,#000030,#00002f,#000028,#00001b,#000005,#000000,#000000,#000000)"></div><div style="position:absolute;left:0;top:78px;width:100%;height:6px;background:linear-gradient(90deg,#000000,#000000,#000000,#00000a,#000046,#000072,#000086,#00007d,#000061,#000041,#000021,#000003,#000000,#000000,#000000,#000000,#000000,#000000,#000000,#000000,#000000,#000000,#000000,#000000,#000000,#000000,#000000,#000000,#000000,#000000,#000000,#000000,#000000,#000000,#000005,#000031,#000051,#00005a,#000055,#000051,#00004f,#000050,#000053,#000057,#000054,#000043,#000029,#00000b,#000000,#000000,#000000)"></div><div style="position:absolute;left:0;top:84px;width:100%;height:6px;background:linear-gradient(90deg,#000000,#000000,#000000,#000015,#000060,#0000a2,#0000c2,#0000b3,#000088,#000056,#000029,#000003,#000000,#000000,#000000,#000000,#000000,#000000,#000000,#000000,#000000,#000000,#000000,#000000,#000000,#000000,#000000,#000000,#000000,#000000,#000000,#000000,#000000,#000002,#000019,#00004c,#000077,#000083,#00007d,#000077,#000073,#000074,#000079,#000081,#00007d,#00005f,#000038,#000017,#000002,#000000,#000000)"></div><div style="position:absolute;left:0;top:90px;width:100%;height:6px;background:linear-gradient(90deg,#000000,#000000,#000000,#00001e,#00007a,#0004cd,#0032d8,#001dd3,#0000ae,#00006c,#000031,#000004,#000000,#000000,#000000,#000000,#000000,#000000,#000000,#000000,#000000,#000000,#000000,#000000,#000000,#000000,#000000,#000000,#000000,#000000,#000000,#000000,#000000,#000005,#00002b,#000067,#00009d,#0000ae,#0000a6,#00009d,#000098,#000099,#0000a1,#0000ac,#0000a6,#00007d,#000048,#000020,#000007,#000001,#000000)"></div><div style="position:absolute;left:0;top:96px;width:100%;height:6px;background:linear-gradient(90deg,#000000,#000000,#000000,#000024,#000090,#0030d8,#0069e5,#0050df,#0004cd,#00007e,#000038,#000006,#000000,#000000,#000000,#000000,#000000,#000000,#000000,#000000,#000000,#000000,#000000,#000000,#000000,#000000,#000000,#000000,#000000,#000000,#000000,#000000,#000000,#00000b,#000039,#000082,#0000c4,#000ccf,#0003cd,#0000c3,#0000bd,#0000bd,#0000c7,#000ace,#0002cd,#00009b,#000059,#00002c,#000012,#000002,#000000)"></div><div style="position:absolute;left:0;top:102px;width:100%;height:6px;background:linear-gradient(90deg,#000000,#000000,#000000,#000029,#0000a3,#0056e1,#0099f1,#007bea,#0022d4,#00008f,#00003f,#00000a,#000000,#000000,#000000,#000000,#000000,#000000,#000000,#000000,#000000,#000000,#000000,#000000,#000000,#000000,#000000,#000000,#000000,#000000,#000000,#000000,#000000,#000012,#000045,#00009c,#001ed3,#0035d9,#002ad6,#001cd3,#0014d1,#0014d1,#0020d4,#0033d8,#002ad6,#0000b7,#00006b,#00003a,#00001d,#000004,#000000)"></div><div style="position:absolute;left:0;top:108px;width:100%;height:6px;background:linear-gradient(90deg,#000000,#000000,#000000,#00002c,#0000b0,#0071e7,#00bdf9,#009bf1,#0038d9,#00009a,#000046,#000011,#000000,#000000,#000000,#000000,#000000,#000000,#000000,#000000,#000000,#000000,#000000,#000000,#000000,#000000,#000000,#000000,#000000,#000000,#000000,#000000,#000000,#000016,#000050,#0000b3,#0040db,#005ae1,#004cde,#003ddb,#0034d8,#0034d8,#0041db,#0056e1,#004cde,#0005cd,#00007e,#00004b,#00002b,#000007,#000000)"></div><div style="position:absolute;left:0;top:114px;width:100%;height:6px;background:linear-gradient(90deg,#000000,#000000,#000000,#00002d,#0000b6,#0080eb,#00d2fe,#00aff6,#0044dc,#0000a1,#00004b,#00001c,#000002,#000002,#000003,#000003,#000003,#000003,#000002,#000002,#000002,#000001,#000000,#000000,#000000,#000000,#000000,#000000,#000000,#000000,#000000,#000000,#000000,#000018,#00005a,#0000c7,#005ee2,#0079e9,#0069e5,#0059e1,#0050df,#004fdf,#005be2,#0073e8,#0069e5,#001dd3,#000091,#00005f,#00003d,#00000d,#000000)"></div><div style="position:absolute;left:0;top:120px;width:100%;height:6px;background:linear-gradient(90deg,#000000,#000000,#000000,#00002d,#0000b5,#0084ec,#00d5ff,#00b4f7,#0046dd,#0000a2,#000050,#000029,#00001a,#00001b,#00001e,#00001f,#00001e,#00001c,#00001b,#00001a,#000018,#00000d,#000006,#000004,#000004,#000004,#000004,#000004,#000004,#000003,#000001,#000000,#000000,#000019,#000061,#000ccf,#0076e8,#0091ef,#007fea,#006ee6,#0066e4,#0064e4,#0070e7,#0089ed,#0080eb,#0032d8,#0000a4,#000075,#000051,#000017,#000001)"></div><div style="position:absolute;left:0;top:126px;width:100%;height:6px;background:linear-gradient(90deg,#000000,#000000,#000000,#00002c,#0000b0,#007fea,#00d5ff,#00b1f6,#0042dc,#0000a0,#000054,#000037,#000035,#000039,#00003c,#00003d,#00003c,#000039,#000036,#000036,#000032,#000025,#000014,#000010,#00000f,#00000f,#000010,#00000f,#00000f,#00000b,#000004,#000000,#000000,#00001a,#000066,#001ad2,#0089ed,#00a4f3,#0090ee,#007fea,#0078e9,#0075e8,#007feb,#0099f1,#0091ef,#0043dc,#0000b8,#00008e,#000067,#00001f,#000003)"></div><div style="position:absolute;left:0;top:132px;width:100%;height:6px;background:linear-gradient(90deg,#000000,#000000,#000000,#00002a,#0000a8,#0074e8,#00cdfd,#00a7f4,#0038d9,#00009b,#000057,#000047,#000050,#000057,#000059,#00005a,#000059,#000055,#000051,#000050,#00004a,#000037,#000024,#00001e,#00001f,#00001f,#00001f,#00001f,#00001e,#00001a,#00000d,#000000,#000000,#00001a,#00006b,#0024d5,#0098f0,#00b2f7,#009bf1,#008cee,#0086ec,#0082eb,#008bed,#00a4f3,#009df2,#0052e0,#0000cc,#0000a8,#00007e,#000026,#000006)"></div><div style="position:absolute;left:0;top:138px;width:100%;height:6px;background:linear-gradient(90deg,#000000,#000000,#000000,#000028,#00009e,#0066e4,#00bef9,#0098f0,#002cd7,#000094,#00005a,#000058,#00006d,#000077,#000078,#000079,#000078,#000073,#00006e,#00006c,#000062,#000049,#000031,#000029,#00002c,#00002f,#000030,#000030,#00002d,#000027,#000019,#000002,#000000,#00001b,#00006f,#002dd7,#00a2f3,#00bbf9,#00a4f3,#0096f0,#0091ef,#008dee,#0094ef,#00abf5,#00a5f4,#0060e3,#0015d1,#0000c3,#000096,#00002d,#00000c)"></div><div style="position:absolute;left:0;top:144px;width:100%;height:6px;background:linear-gradient(90deg,#000000,#000000,#000000,#000025,#000095,#0057e1,#00adf5,#0089ed,#0020d4,#00008d,#00005d,#00006a,#00008c,#000098,#000097,#000098,#000098,#000093,#00008c,#000088,#00007b,#00005b,#00003d,#000034,#00003a,#000042,#000047,#000046,#000040,#000036,#000024,#000006,#000000,#00001c,#000073,#0033d8,#00a9f4,#00c1fa,#00a9f4,#009cf1,#009af1,#0095f0,#009bf1,#00aff6,#00aaf5,#006ce6,#002ad6,#0012d0,#0000ac,#000034,#000012)"></div><div style="position:absolute;left:0;top:150px;width:100%;height:6px;background:linear-gradient(90deg,#000000,#000000,#000000,#000024,#00008e,#004ade,#009ef2,#007bea,#0016d1,#000087,#000060,#00007c,#0000ab,#0000ba,#0000b7,#0000b6,#0000b6,#0000b1,#0000ab,#0000a4,#000092,#00006c,#000049,#000040,#00004a,#000059,#000064,#000061,#000057,#000049,#000032,#00000d,#000000,#00001f,#000078,#0038d9,#00acf5,#00c4fb,#00adf5,#00a2f3,#00a1f2,#009df2,#00a1f2,#00b2f7,#00acf5,#0076e8,#003fdb,#002dd7,#0000c1,#00003a,#000018)"></div><div style="position:absolute;left:0;top:156px;width:100%;height:6px;background:linear-gradient(90deg,#000000,#000000,#000000,#000023,#00008b,#0042dc,#0093ef,#0071e7,#000fd0,#000083,#000062,#00008d,#0000ca,#0010d0,#0008ce,#0006ce,#0007ce,#0003cd,#0000c8,#0000be,#0000a6,#00007a,#000054,#00004b,#00005b,#000075,#000087,#000083,#000072,#00005f,#000042,#000019,#000000,#000023,#00007d,#003bda,#00acf5,#00c4fb,#00aff6,#00a6f4,#00a6f4,#00a4f3,#00a6f4,#00b3f7,#00adf5,#0080eb,#0055e0,#0046dd,#0007ce,#00003f,#00001b)"></div><div style="position:absolute;left:0;top:162px;width:100%;height:6px;background:linear-gradient(90deg,#000000,#000000,#000000,#000022,#000089,#003ddb,#008aed,#006be6,#000ccf,#000080,#000064,#00009d,#001cd3,#0030d8,#0025d5,#0021d4,#0023d4,#0020d4,#0019d2,#000ace,#0000b7,#000087,#00005e,#000056,#00006c,#000093,#0000ad,#0000a7,#00008f,#000077,#000055,#000024,#000003,#000028,#000083,#003dda,#00aaf5,#00c2fa,#00aff6,#00a8f4,#00aaf5,#00aaf5,#00abf5,#00b2f7,#00acf5,#0089ed,#0069e5,#005de2,#0017d2,#000044,#00001e)"></div><div style="position:absolute;left:0;top:168px;width:100%;height:6px;background:linear-gradient(90deg,#000000,#000000,#000000,#000023,#00008a,#003ada,#0085ec,#0067e5,#000bcf,#00007f,#000066,#0000ac,#0037d9,#004dde,#003edb,#0038d9,#003bda,#003bda,#0033d8,#001fd3,#0000c5,#000090,#000066,#000061,#00007e,#0000b1,#000ace,#0001cc,#0000ad,#000090,#000068,#000030,#000008,#00002e,#000089,#003ddb,#00a5f3,#00bdf9,#00adf6,#00a9f4,#00adf5,#00aef6,#00aef6,#00b0f6,#00a9f4,#0091ef,#007cea,#0071e7,#0024d5,#000048,#000020)"></div><div style="position:absolute;left:0;top:174px;width:100%;height:6px;background:linear-gradient(90deg,#000000,#000000,#000000,#000023,#00008c,#0039da,#0081eb,#0065e4,#000acf,#00007e,#000068,#0000b8,#004fdf,#0065e4,#0052e0,#004bde,#004fdf,#0052e0,#004ade,#0030d8,#0004cd,#000097,#00006d,#00006b,#000090,#0003cd,#0031d8,#0027d5,#0000cb,#0000a8,#00007c,#00003c,#000011,#000034,#00008e,#003ddb,#009ef2,#00b6f7,#00a9f5,#00a7f4,#00acf5,#00aff6,#00aff6,#00acf5,#00a5f3,#0096f0,#008ced,#0082eb,#002fd7,#00004b,#000021)"></div><div style="position:absolute;left:0;top:180px;width:100%;height:6px;background:linear-gradient(90deg,#000000,#000000,#000000,#000023,#00008e,#0039da,#007eea,#0063e4,#000bcf,#00007e,#000069,#0000c2,#0060e3,#0078e9,#0062e3,#005ae1,#005fe3,#0064e4,#005ce2,#003ddb,#000ace,#00009b,#000072,#000075,#0000a2,#0020d4,#0055e0,#0048dd,#001bd3,#0000c0,#00008f,#000047,#00001b,#00003a,#000094,#003cda,#0095f0,#00acf5,#00a3f3,#00a2f3,#00aaf5,#00adf5,#00acf5,#00a6f4,#009ff2,#0099f1,#0097f0,#008eee,#0036d9,#00004d,#000023)"></div><div style="position:absolute;left:0;top:186px;width:100%;height:6px;background:linear-gradient(90deg,#000000,#000000,#000000,#000024,#00008f,#0038d9,#007cea,#0062e3,#000bcf,#00007e,#00006b,#0000c8,#006be6,#0083eb,#006be6,#0063e4,#006ae5,#0072e7,#006ae5,#0045dc,#000bcf,#00009b,#000076,#00007e,#0000b2,#0038d9,#0070e7,#0063e4,#0033d8,#0008ce,#0000a0,#000052,#000021,#000040,#000099,#003ada,#008ced,#00a1f2,#0099f1,#009bf1,#00a4f3,#00a7f4,#00a5f3,#009df2,#0097f0,#0099f1,#009ef2,#0096f0,#003bda,#00004e,#000023)"></div><div style="position:absolute;left:0;top:192px;width:100%;height:6px;background:linear-gradient(90deg,#000000,#000000,#000000,#000024,#00008e,#0036d9,#0079e9,#0060e3,#000ace,#00007e,#00006c,#0000ca,#006ee6,#0086ec,#006fe7,#0067e5,#0070e7,#007ae9,#0071e7,#0047dd,#0008ce,#000098,#000078,#000087,#0000c2,#004ade,#0083eb,#0075e8,#0045dd,#001ad2,#0000ae,#00005c,#000027,#000045,#00009d,#0037d9,#0081eb,#0093ef,#008ced,#0090ee,#009af1,#009df2,#0098f0,#0091ef,#008eee,#0095f0,#009ff2,#0099f1,#003ddb,#00004f,#000024)"></div><div style="position:absolute;left:0;top:198px;width:100%;height:6px;background:linear-gradient(90deg,#000000,#000000,#000000,#000023,#00008c,#0033d8,#0075e8,#005ce2,#0007ce,#00007e,#00006c,#0000c8,#006ae5,#0081eb,#006ce6,#0066e4,#0071e7,#007dea,#0073e8,#0043dc,#0000cc,#000092,#000078,#000090,#0003cd,#0055e0,#008aed,#007eea,#0051df,#0027d5,#0000b9,#000063,#00002c,#00004a,#0000a0,#0033d8,#0076e8,#0083eb,#007cea,#0082eb,#008dee,#008eee,#0088ec,#0083eb,#0084ec,#008eee,#009bf1,#0097f0,#003dda,#00004f,#000024)"></div><div style="position:absolute;left:0;top:204px;width:100%;height:6px;background:linear-gradient(90deg,#000000,#000000,#000000,#000022,#000088,#002ed7,#0070e7,#0057e1,#0004cd,#00007d,#00006d,#0000c4,#0060e3,#0077e8,#0064e4,#0061e3,#006ee6,#007cea,#0071e7,#003cda,#0000c1,#000089,#000076,#000097,#000fd0,#005be2,#0089ed,#007eea,#0057e1,#0030d7,#0000c1,#00006a,#000030,#00004e,#0000a2,#0030d7,#006be6,#0073e7,#0069e5,#0072e7,#007eea,#007cea,#0074e8,#0073e7,#0079e9,#0084ec,#0092ef,#0090ef,#003ada,#00004e,#000024)"></div><div style="position:absolute;left:0;top:210px;width:100%;height:6px;background:linear-gradient(90deg,#000000,#000000,#000000,#000021,#000084,#0028d6,#006be6,#0051e0,#0000cc,#00007d,#00006d,#0000bd,#0052e0,#0068e5,#0059e1,#0058e1,#0067e5,#0076e8,#006ae5,#0031d8,#0000b4,#000080,#000074,#00009d,#0018d2,#005ce2,#0081eb,#0079e9,#0058e1,#0035d9,#0000c7,#00006e,#000034,#000051,#0000a3,#002bd6,#005fe3,#0062e3,#0057e1,#0061e3,#006ee6,#0068e5,#005ee3,#0062e3,#006ee6,#0079e9,#0085ec,#0087ec,#0036d9,#00004d,#000024)"></div><div style="position:absolute;left:0;top:216px;width:100%;height:6px;background:linear-gradient(90deg,#000000,#000000,#000000,#000020,#00007f,#0022d4,#0064e4,#004bde,#0000c7,#00007c,#00006c,#0000b6,#0042dc,#0058e1,#004bde,#004edf,#005fe3,#006ee6,#0061e3,#0025d5,#0000a7,#000076,#000071,#0000a3,#001fd3,#0059e1,#0075e8,#006fe7,#0056e1,#0037d9,#0000ca,#000072,#000037,#000054,#0000a5,#0027d5,#0054e0,#0051df,#0044dc,#004fdf,#005de2,#0054e0,#0049dd,#0051df,#0062e3,#006be6,#0076e8,#007cea,#0030d8,#00004b,#000024)"></div><div style="position:absolute;left:0;top:222px;width:100%;height:6px;background:linear-gradient(90deg,#000000,#000000,#000000,#00001f,#00007b,#001bd3,#005de2,#0045dc,#0000c3,#00007c,#00006c,#0000ae,#0032d8,#0047dd,#003edb,#0042dc,#0054e0,#0064e4,#0055e0,#0018d2,#00009a,#00006c,#00006e,#0000a6,#0023d4,#0053e0,#0066e4,#0062e3,#0050df,#0036d9,#0000cb,#000073,#00003a,#000057,#0000a6,#0022d4,#0048dd,#0041dc,#0033d8,#003fdb,#004dde,#0041dc,#0035d9,#0041dc,#0055e0,#005de2,#0066e4,#0070e7,#002ad6,#000049,#000024)"></div><div style="position:absolute;left:0;top:228px;width:100%;height:6px;background:linear-gradient(90deg,#000000,#000000,#000000,#00001e,#000077,#0015d1,#0056e1,#003edb,#0000bf,#00007b,#00006b,#0000a7,#0024d5,#0038d9,#0031d8,#0037d9,#0049de,#0058e1,#0049de,#000bcf,#00008f,#000065,#00006b,#0000a7,#0024d5,#004bde,#0056e1,#0054e0,#0049de,#0033d8,#0000ca,#000074,#00003b,#00005a,#0000a7,#001dd3,#003ddb,#0033d8,#0024d5,#0030d8,#003ddb,#0031d8,#0024d5,#0034d8,#0049de,#004fdf,#0056e1,#0063e4,#0024d5,#000048,#000024)"></div><div style="position:absolute;left:0;top:234px;width:100%;height:6px;background:linear-gradient(90deg,#000000,#000000,#000000,#00001d,#000075,#000fd0,#004dde,#0036d9,#0000bb,#00007a,#00006a,#0000a2,#001ad2,#002cd7,#0026d5,#002dd7,#003fdb,#004dde,#003ddb,#0000cc,#000087,#00005f,#000069,#0000a7,#0021d4,#0041dc,#0047dd,#0046dd,#0041db,#002ed7,#0000c8,#000074,#00003d,#00005d,#0000a8,#0018d2,#0032d8,#0027d5,#0019d2,#0024d5,#0030d7,#0023d4,#0018d2,#0028d6,#003edb,#0041dc,#0047dd,#0058e1,#001dd3,#000046,#000024)"></div><div style="position:absolute;left:0;top:240px;width:100%;height:6px;background:linear-gradient(90deg,#000000,#000000,#000000,#00001d,#000073,#0009ce,#0044dc,#002fd7,#0000b8,#000079,#000069,#00009e,#0012d0,#0023d4,#001dd3,#0023d4,#0035d9,#0041dc,#0032d8,#0000c3,#000082,#00005c,#000067,#0000a5,#001cd3,#0037d9,#0038d9,#0039da,#0037d9,#0028d6,#0000c4,#000072,#00003d,#00005f,#0000a9,#0013d1,#0028d6,#001dd3,#0011d0,#001ad2,#0024d5,#0019d2,#000fd0,#001fd3,#0033d8,#0034d8,#003ada,#004dde,#0017d2,#000044,#000024)"></div><div style="position:absolute;left:0;top:246px;width:100%;height:6px;background:linear-gradient(90deg,#000000,#000000,#000000,#00001c,#000072,#0003cd,#003bda,#0028d6,#0000b5,#000078,#000068,#00009b,#000dcf,#001dd3,#0015d1,#001bd3,#002bd6,#0036d9,#0026d5,#0000bc,#00007e,#00005b,#000066,#0000a1,#0014d1,#002bd6,#002ad6,#002cd6,#002cd7,#0020d4,#0000bf,#000070,#00003d,#000061,#0000aa,#000ecf,#001ed3,#0015d1,#000bcf,#0013d0,#001bd2,#0011d0,#000ace,#0018d2,#0029d6,#0028d6,#002dd7,#0043dc,#0011d0,#000042,#000024)"></div><div style="position:absolute;left:0;top:252px;width:100%;height:6px;background:linear-gradient(90deg,#000000,#000000,#000000,#00001c,#000070,#0000c9,#0031d8,#0020d4,#0000b2,#000077,#000066,#000098,#0009ce,#0017d2,#000fd0,#0013d1,#0022d4,#002bd6,#001bd2,#0000b4,#00007b,#00005b,#000064,#00009c,#000bcf,#001ed3,#001cd3,#001ed3,#0021d4,#0017d2,#0000b9,#00006d,#00003d,#000063,#0000aa,#0009ce,#0015d1,#000ecf,#0007ce,#000ccf,#0012d0,#000acf,#0006cd,#0013d0,#001fd3,#001cd3,#0022d4,#003ada,#000ccf,#000041,#000024)"></div><div style="position:absolute;left:0;top:258px;width:100%;height:6px;background:linear-gradient(90deg,#000000,#000000,#000000,#00001c,#00006f,#0000c3,#0027d5,#0019d2,#0000ae,#000075,#000064,#000096,#0006cd,#0013d0,#0009ce,#000ccf,#0019d2,#0020d4,#0010d0,#0000ae,#00007a,#00005b,#000063,#000096,#0000cc,#0010d0,#000dcf,#0010d0,#0014d1,#000dcf,#0000b3,#000069,#00003d,#000064,#0000aa,#0003cd,#000ccf,#0008ce,#0004cd,#0007ce,#000ace,#0005cd,#0003cd,#000ecf,#0017d1,#0012d0,#0018d2,#0032d8,#0006ce,#00003f,#000024)"></div><div style="position:absolute;left:0;top:264px;width:100%;height:6px;background:linear-gradient(90deg,#000000,#000000,#000000,#00001b,#00006d,#0000bd,#001dd3,#0010d0,#0000aa,#000072,#000061,#000092,#0002cc,#000ecf,#0002cd,#0005cd,#0010d0,#0015d1,#0005cd,#0000a8,#000078,#00005b,#000061,#000090,#0000c1,#0002cc,#0000c9,#0000cc,#0007ce,#0003cd,#0000ab,#000066,#00003c,#000064,#0000a8,#0000ca,#0003cd,#0002cc,#0000cc,#0002cc,#0003cd,#0000cc,#0000cc,#0009ce,#000fd0,#0009ce,#0010d0,#002ad6,#0001cc,#00003e,#000024)"></div><div style="position:absolute;left:0;top:270px;width:100%;height:6px;background:linear-gradient(90deg,#000000,#000000,#000000,#00001a,#00006a,#0000b6,#0014d1,#0008ce,#0000a4,#00006f,#00005e,#00008e,#0000c8,#0007ce,#0000c8,#0000ca,#0008ce,#000ace,#0000c7,#0000a1,#000076,#00005a,#00005e,#00008a,#0000b6,#0000bf,#0000b8,#0000bc,#0000c5,#0000c4,#0000a4,#000062,#00003b,#000063,#0000a5,#0000c4,#0000c8,#0000c8,#0000c9,#0000c9,#0000c8,#0000c7,#0000c9,#0005cd,#0009ce,#0002cc,#0008ce,#0023d4,#0000c9,#00003c,#000023)"></div><div style="position:absolute;left:0;top:276px;width:100%;height:6px;background:linear-gradient(90deg,#000000,#000000,#000000,#000019,#000066,#0000af,#000ace,#0000cb,#00009e,#00006a,#00005a,#000089,#0000c1,#0000cc,#0000c1,#0000c3,#0000cb,#0000cc,#0000bd,#00009b,#000073,#000058,#00005b,#000083,#0000ab,#0000af,#0000a6,#0000ab,#0000b7,#0000b9,#00009c,#00005e,#00003a,#000062,#0000a1,#0000bd,#0000c0,#0000c3,#0000c5,#0000c4,#0000c1,#0000c0,#0000c4,#0000cc,#0003cd,#0000c8,#0001cc,#001dd3,#0000c5,#00003b,#000023)"></div><div style="position:absolute;left:0;top:282px;width:100%;height:6px;background:linear-gradient(90deg,#000000,#000000,#000000,#000018,#000060,#0000a7,#0001cc,#0000c2,#000097,#000065,#000057,#000084,#0000b9,#0000c3,#0000b9,#0000bc,#0000c4,#0000c3,#0000b4,#000094,#000070,#000056,#000057,#00007d,#0000a0,#00009f,#000094,#00009a,#0000a9,#0000ae,#000095,#00005b,#000039,#00005f,#00009c,#0000b6,#0000ba,#0000bc,#0000bf,#0000be,#0000ba,#0000ba,#0000be,#0000c7,#0000ca,#0000c2,#0000c7,#0017d1,#0000c0,#00003a,#000022)"></div><div style="position:absolute;left:0;top:288px;width:100%;height:6px;background:linear-gradient(90deg,#000000,#000000,#000000,#000015,#00005b,#00009f,#0000c4,#0000b9,#00008f,#000060,#000053,#00007d,#0000b0,#0000ba,#0000b2,#0000b5,#0000bc,#0000ba,#0000aa,#00008d,#00006c,#000053,#000054,#000076,#000096,#000090,#000081,#000089,#00009b,#0000a3,#00008d,#000057,#000038,#00005c,#000096,#0000af,#0000b3,#0000b6,#0000b9,#0000b7,#0000b3,#0000b2,#0000b7,#0000c0,#0000c4,#0000bc,#0000c1,#0011d0,#0000bc,#000038,#000020)"></div><div style="position:absolute;left:0;top:294px;width:100%;height:6px;background:linear-gradient(90deg,#000000,#000000,#000000,#000012,#000054,#000096,#0000bb,#0000b0,#000087,#00005b,#00004f,#000076,#0000a6,#0000b0,#0000aa,#0000ae,#0000b5,#0000b2,#0000a1,#000087,#000068,#000050,#000050,#000070,#00008c,#000082,#000070,#000079,#00008e,#000099,#000086,#000053,#000036,#000059,#000090,#0000a8,#0000ac,#0000ae,#0000b1,#0000af,#0000ac,#0000ab,#0000af,#0000b9,#0000bd,#0000b6,#0000ba,#0009ce,#0000b6,#000037,#00001e)"></div><div style="position:absolute;left:0;top:300px;width:100%;height:6px;background:linear-gradient(90deg,#000000,#000000,#000000,#000010,#00004e,#00008e,#0000b2,#0000a7,#00007f,#000056,#00004b,#000070,#00009b,#0000a7,#0000a3,#0000a8,#0000af,#0000aa,#000099,#000080,#000064,#00004d,#00004c,#00006a,#000082,#000075,#000062,#00006b,#000083,#00008f,#00007f,#000050,#000033,#000055,#00008a,#0000a1,#0000a4,#0000a6,#0000a8,#0000a7,#0000a5,#0000a3,#0000a6,#0000b0,#0000b5,#0000ae,#0000b3,#0001cc,#0000b0,#000035,#00001c)"></div><div style="position:absolute;left:0;top:306px;width:100%;height:6px;background:linear-gradient(90deg,#000000,#000000,#000000,#00000e,#000049,#000085,#0000a9,#00009f,#000079,#000052,#000048,#000069,#000091,#00009d,#00009c,#0000a2,#0000a8,#0000a2,#000091,#00007a,#000060,#00004a,#000048,#000064,#000079,#00006a,#000056,#000060,#000079,#000087,#000079,#00004b,#000030,#000051,#000084,#00009b,#00009d,#00009d,#00009d,#00009e,#00009d,#00009b,#00009d,#0000a5,#0000aa,#0000a3,#0000a9,#0000c3,#0000a9,#000033,#000018)"></div><div style="position:absolute;left:0;top:312px;width:100%;height:6px;background:linear-gradient(90deg,#000000,#000000,#000000,#00000c,#000044,#00007d,#00009f,#000096,#000073,#00004f,#000046,#000063,#000087,#000095,#000096,#00009d,#0000a2,#00009a,#000089,#000074,#00005d,#000048,#000045,#00005e,#000071,#000061,#00004e,#000058,#000071,#000080,#000072,#000047,#00002d,#00004d,#00007f,#000094,#000094,#000092,#000091,#000093,#000094,#000093,#000093,#000099,#00009b,#000096,#00009e,#0000b8,#00009f,#000030,#000012)"></div><div style="position:absolute;left:0;top:318px;width:100%;height:6px;background:linear-gradient(90deg,#000000,#000000,#000000,#00000a,#00003f,#000074,#000095,#00008d,#00006d,#00004d,#000043,#00005d,#00007e,#00008c,#000090,#000098,#00009c,#000093,#000081,#00006e,#00005a,#000046,#000042,#000058,#000069,#00005a,#000049,#000054,#00006c,#00007a,#00006d,#000042,#000029,#000049,#00007a,#00008d,#00008b,#000086,#000084,#000088,#00008c,#00008b,#00008a,#00008b,#00008a,#000087,#000090,#0000ab,#000095,#00002d,#00000c)"></div><div style="position:absolute;left:0;top:324px;width:100%;height:6px;background:linear-gradient(90deg,#000000,#000000,#000000,#000009,#00003a,#00006b,#00008a,#000084,#000068,#00004b,#000041,#000056,#000074,#000084,#00008a,#000092,#000095,#00008b,#00007a,#000069,#000057,#000044,#00003f,#000052,#000061,#000055,#000047,#000051,#000067,#000074,#000067,#00003d,#000024,#000044,#000075,#000086,#000081,#000079,#000076,#00007c,#000083,#000083,#00007f,#00007c,#000078,#000076,#000082,#00009d,#00008a,#000029,#000007)"></div><div style="position:absolute;left:0;top:330px;width:100%;height:6px;background:linear-gradient(90deg,#000000,#000000,#000000,#000007,#000035,#000062,#00007e,#00007a,#000062,#000048,#00003e,#000050,#00006a,#00007a,#000083,#00008b,#00008d,#000083,#000073,#000064,#000053,#000042,#00003c,#00004c,#00005a,#000051,#000046,#000050,#000063,#00006e,#000060,#000037,#000020,#000040,#00006e,#00007e,#000077,#00006b,#000067,#00006f,#000079,#00007b,#000075,#00006b,#000064,#000064,#000074,#00008f,#00007e,#000026,#000003)"></div><div style="position:absolute;left:0;top:336px;width:100%;height:6px;background:linear-gradient(90deg,#000000,#000000,#000000,#000006,#000030,#000057,#000070,#00006e,#00005a,#000044,#00003a,#000048,#00005f,#00006f,#000079,#000081,#000083,#00007a,#00006c,#00005f,#000050,#00003f,#000039,#000046,#000053,#00004e,#000047,#00004f,#00005f,#000066,#000059,#000032,#00001d,#00003b,#000067,#000074,#00006b,#00005d,#000058,#000062,#000070,#000072,#00006a,#00005b,#000050,#000054,#000067,#000081,#000072,#000022,#000001)"></div><div style="position:absolute;left:0;top:342px;width:100%;height:6px;background:linear-gradient(90deg,#000000,#000000,#000000,#000004,#00002a,#00004c,#000061,#000061,#000051,#00003e,#000035,#000040,#000053,#000062,#00006c,#000075,#000077,#000070,#000065,#000059,#00004c,#00003b,#000034,#000040,#00004d,#00004c,#000047,#00004e,#000059,#00005e,#000050,#00002d,#000019,#000035,#00005d,#000069,#00005e,#00004e,#000048,#000056,#000067,#000069,#00005e,#00004a,#00003e,#000044,#00005b,#000075,#000067,#00001f,#000000)"></div><div style="position:absolute;left:0;top:348px;width:100%;height:6px;background:linear-gradient(90deg,#000000,#000000,#000000,#000003,#000022,#00003e,#000050,#000051,#000045,#000036,#00002e,#000036,#000045,#000052,#00005c,#000064,#000068,#000065,#00005e,#000054,#000046,#000036,#00002e,#000039,#000046,#000049,#000047,#00004b,#000052,#000053,#000045,#000027,#000017,#00002f,#000051,#00005b,#000051,#00003f,#000039,#000049,#00005e,#000060,#000051,#00003a,#00002d,#000037,#000052,#00006b,#00005e,#00001c,#000000)"></div><div style="position:absolute;left:0;top:354px;width:100%;height:6px;background:linear-gradient(90deg,#000000,#000000,#000000,#000002,#00001a,#00002f,#00003d,#00003f,#000036,#00002b,#000025,#00002a,#000035,#00003f,#000048,#000050,#000056,#000059,#000057,#00004e,#000040,#00002f,#000028,#000031,#000040,#000045,#000046,#000047,#000048,#000046,#000039,#000022,#000016,#000028,#000042,#00004b,#000042,#000030,#00002a,#00003e,#000055,#000056,#000044,#00002b,#00001e,#00002d,#00004b,#000063,#000055,#00001a,#000000)"></div><div style="position:absolute;left:0;top:360px;width:100%;height:6px;background:linear-gradient(90deg,#000000,#000000,#000000,#000001,#00000b,#00001f,#00002a,#00002b,#000026,#00001f,#00001a,#00001d,#000024,#00002a,#000031,#000039,#000043,#00004c,#000050,#000049,#000039,#000028,#000020,#00002a,#000039,#000041,#000043,#000041,#00003e,#000037,#00002c,#00001d,#000016,#000021,#000032,#000039,#000033,#000022,#00001b,#000033,#00004c,#00004b,#000036,#00001c,#000010,#000026,#000047,#00005c,#00004e,#000017,#000000)"></div><div style="position:absolute;left:0;top:366px;width:100%;height:6px;background:linear-gradient(90deg,#000000,#000000,#000000,#000000,#000002,#00000a,#000012,#000013,#000010,#00000d,#00000a,#00000b,#00000d,#000010,#000016,#000021,#00002e,#00003f,#000049,#000042,#000032,#000020,#000018,#000022,#000033,#00003c,#00003e,#00003a,#000032,#000028,#00001f,#000019,#000017,#00001a,#000021,#000027,#000024,#000013,#00000a,#000028,#000043,#000040,#000029,#00000d,#000003,#000020,#000043,#000056,#000047,#000013,#000000)"></div><div style="position:absolute;left:0;top:372px;width:100%;height:6px;background:linear-gradient(90deg,#000000,#000000,#000000,#000000,#010000,#010000,#000000,#000001,#000001,#000001,#000001,#000001,#000000,#010000,#010000,#000005,#000018,#000032,#000042,#00003c,#00002a,#000017,#00000b,#00001b,#00002b,#000036,#000038,#000032,#000026,#000019,#000010,#000014,#000017,#000012,#000009,#00000f,#000011,#000003,#000001,#00001e,#00003a,#000036,#00001b,#000002,#000000,#00001a,#00003f,#000051,#000041,#000010,#000000)"></div><div style="position:absolute;left:0;top:378px;width:100%;height:6px;background:linear-gradient(90deg,#000000,#000000,#000000,#000000,#080000,#0c0000,#0c0000,#090000,#060000,#040000,#040000,#060000,#0c0000,#150000,#160000,#090000,#000002,#000026,#00003a,#000035,#000022,#00000c,#000003,#000010,#000024,#00002f,#000031,#000028,#00001a,#000008,#000004,#00000e,#000018,#000008,#000000,#000001,#000002,#010000,#040000,#000011,#000031,#00002b,#00000a,#010000,#050000,#000013,#00003a,#00004a,#00003a,#00000c,#000000)"></div><div style="position:absolute;left:0;top:384px;width:100%;height:6px;background:linear-gradient(90deg,#000000,#000000,#000000,#010000,#130000,#1f0000,#1f0000,#1a0000,#130000,#100000,#110000,#170000,#1f0000,#280000,#2a0000,#200000,#030000,#00001b,#000033,#00002f,#00001b,#000004,#000000,#000006,#00001b,#000026,#000028,#00001f,#00000a,#000001,#000000,#000009,#000017,#000003,#040000,#040000,#030000,#0b0000,#110000,#000005,#000028,#00001f,#000001,#0a0000,#110000,#000008,#000033,#000042,#000033,#00000a,#000000)"></div><div style="position:absolute;left:0;top:390px;width:100%;height:6px;background:linear-gradient(90deg,#000000,#000000,#000000,#020000,#1c0000,#2a0000,#2c0000,#240000,#1b0000,#1b0000,#1f0000,#240000,#2c0000,#360000,#3a0000,#2e0000,#0b0000,#00000e,#00002b,#000027,#000010,#000001,#000000,#000001,#00000e,#00001c,#00001d,#000011,#000002,#000000,#000000,#000006,#000016,#000001,#080000,#0c0000,#0e0000,#1d0000,#1e0000,#000000,#00001e,#00000f,#010000,#1a0000,#1e0000,#000001,#000029,#000037,#00002b,#000007,#000000)"></div><div style="position:absolute;left:0;top:396px;width:100%;height:6px;background:linear-gradient(90deg,#000000,#000000,#000000,#030000,#210000,#320000,#350000,#2a0000,#1e0000,#200000,#280000,#2f0000,#370000,#410000,#440000,#370000,#140000,#000006,#000023,#00001f,#000007,#000000,#020000,#000000,#000004,#00000c,#00000f,#000005,#000000,#000000,#000000,#000003,#000011,#000000,#090000,#140000,#1c0000,#280000,#260000,#030000,#000011,#000004,#070000,#260000,#270000,#030000,#00001c,#00002b,#000021,#000004,#000000)"></div><div style="position:absolute;left:0;top:402px;width:100%;height:6px;background:linear-gradient(90deg,#000000,#000000,#000000,#030000,#250000,#390000,#3b0000,#2d0000,#1e0000,#230000,#300000,#380000,#3f0000,#490000,#4c0000,#3c0000,#1c0000,#000001,#00001b,#000012,#000002,#010000,#040000,#020000,#000000,#000001,#000002,#000000,#010000,#010000,#000000,#000001,#000009,#000000,#090000,#1a0000,#260000,#300000,#2d0000,#0b0000,#000004,#000000,#110000,#2d0000,#310000,#100000,#000008,#000016,#000016,#000002,#000000)"></div><div style="position:absolute;left:0;top:408px;width:100%;height:6px;background:linear-gradient(90deg,#000000,#000000,#000000,#040000,#280000,#3e0000,#400000,#2d0000,#1c0000,#250000,#370000,#400000,#460000,#4f0000,#500000,#3f0000,#200000,#000000,#00000e,#000007,#000000,#030000,#070000,#060000,#050000,#040000,#030000,#040000,#030000,#020000,#000000,#000000,#000003,#000000,#080000,#1e0000,#2d0000,#380000,#340000,#180000,#000000,#030000,#1c0000,#340000,#3a0000,#230000,#010000,#000004,#000008,#000001,#000000)"></div><div style="position:absolute;left:0;top:414px;width:100%;height:6px;background:linear-gradient(90deg,#000000,#000000,#000000,#040000,#2b0000,#420000,#430000,#2c0000,#1a0000,#270000,#3e0000,#480000,#4c0000,#530000,#530000,#400000,#220000,#010000,#000003,#000000,#020000,#070000,#0a0000,#0c0000,#100000,#130000,#140000,#0f0000,#080000,#020000,#000000,#000000,#000000,#010000,#070000,#200000,#330000,#3f0000,#3a0000,#220000,#070000,#0c0000,#220000,#3b0000,#440000,#310000,#100000,#000000,#000001,#000000,#000000)"></div><div style="position:absolute;left:0;top:420px;width:100%;height:6px;background:linear-gradient(90deg,#000000,#000000,#000000,#050000,#2e0000,#460000,#470000,#2c0000,#180000,#280000,#440000,#4f0000,#510000,#570000,#550000,#400000,#230000,#060000,#000000,#020000,#090000,#0e0000,#100000,#150000,#1e0000,#230000,#240000,#1e0000,#0e0000,#040000,#010000,#030000,#060000,#040000,#060000,#200000,#390000,#460000,#420000,#2c0000,#170000,#190000,#290000,#420000,#4d0000,#3e0000,#230000,#0c0000,#010000,#000000,#000000)"></div><div style="position:absolute;left:0;top:426px;width:100%;height:6px;background:linear-gradient(90deg,#000000,#000000,#000000,#060000,#310000,#4b0000,#4a0000,#2d0000,#180000,#2b0000,#4a0000,#560000,#570000,#5a0000,#570000,#410000,#250000,#0f0000,#060000,#0d0000,#180000,#190000,#180000,#1d0000,#250000,#2f0000,#310000,#280000,#180000,#090000,#060000,#0f0000,#180000,#0b0000,#060000,#210000,#3e0000,#4d0000,#4a0000,#370000,#250000,#230000,#310000,#490000,#570000,#4a0000,#310000,#1b0000,#060000,#010000,#000000)"></div><div style="position:absolute;left:0;top:432px;width:100%;height:6px;background:linear-gradient(90deg,#000000,#000000,#000000,#070000,#360000,#510000,#4f0000,#310000,#1c0000,#300000,#510000,#5c0000,#5c0000,#5f0000,#5a0000,#440000,#290000,#1b0000,#170000,#1f0000,#240000,#220000,#1f0000,#210000,#2a0000,#380000,#3d0000,#300000,#1f0000,#160000,#190000,#290000,#2b0000,#1a0000,#0a0000,#240000,#430000,#540000,#540000,#430000,#320000,#2e0000,#3b0000,#510000,#5f0000,#550000,#3d0000,#250000,#0d0000,#010000,#000000)"></div><div style="position:absolute;left:0;top:438px;width:100%;height:6px;background:linear-gradient(90deg,#000000,#000000,#000000,#090000,#3c0000,#580000,#540000,#360000,#220000,#370000,#570000,#630000,#620000,#640000,#5e0000,#480000,#300000,#250000,#270000,#2d0000,#310000,#2d0000,#260000,#260000,#2f0000,#410000,#490000,#390000,#260000,#250000,#320000,#400000,#400000,#280000,#130000,#270000,#470000,#5c0000,#5f0000,#500000,#3f0000,#3a0000,#450000,#5b0000,#680000,#5e0000,#460000,#2d0000,#140000,#020000,#000000)"></div><div style="position:absolute;left:0;top:444px;width:100%;height:6px;background:linear-gradient(90deg,#000000,#000000,#000000,#0b0000,#430000,#5f0000,#5b0000,#3e0000,#2b0000,#3f0000,#5e0000,#6a0000,#690000,#6a0000,#640000,#4e0000,#380000,#310000,#350000,#3d0000,#3f0000,#390000,#2f0000,#2c0000,#340000,#490000,#530000,#420000,#2e0000,#350000,#4a0000,#5a0000,#550000,#360000,#1f0000,#2d0000,#4d0000,#650000,#6a0000,#5d0000,#4c0000,#470000,#500000,#650000,#710000,#670000,#4e0000,#330000,#1b0000,#020000,#000000)"></div><div style="position:absolute;left:0;top:450px;width:100%;height:6px;background:linear-gradient(90deg,#000000,#000000,#000000,#0d0000,#490000,#670000,#630000,#470000,#350000,#480000,#660000,#710000,#710000,#720000,#6c0000,#560000,#420000,#3d0000,#450000,#4d0000,#4f0000,#460000,#390000,#320000,#3a0000,#510000,#5e0000,#4a0000,#380000,#470000,#640000,#730000,#680000,#450000,#2a0000,#350000,#540000,#6e0000,#760000,#6a0000,#590000,#540000,#5c0000,#6f0000,#7a0000,#6e0000,#540000,#380000,#1f0000,#030000,#000000)"></div><div style="position:absolute;left:0;top:456px;width:100%;height:6px;background:linear-gradient(90deg,#000000,#000000,#000000,#0f0000,#4f0000,#6f0000,#6c0000,#520000,#410000,#520000,#6e0000,#780000,#790000,#7b0000,#750000,#610000,#4d0000,#4b0000,#550000,#5e0000,#600000,#540000,#440000,#3b0000,#420000,#5c0000,#690000,#540000,#430000,#5a0000,#7e0000,#8a0000,#790000,#520000,#360000,#3f0000,#5d0000,#780000,#820000,#770000,#670000,#600000,#680000,#7a0000,#840000,#760000,#5a0000,#3d0000,#210000,#040000,#000000)"></div><div style="position:absolute;left:0;top:462px;width:100%;height:6px;background:linear-gradient(90deg,#000000,#000000,#000000,#110000,#540000,#770000,#750000,#5e0000,#4e0000,#5d0000,#760000,#800000,#820000,#850000,#800000,#6d0000,#5a0000,#5a0000,#650000,#700000,#710000,#620000,#4f0000,#460000,#4e0000,#670000,#740000,#5e0000,#4f0000,#6d0000,#950000,#9c0000,#840000,#5d0000,#420000,#4b0000,#680000,#820000,#8e0000,#840000,#740000,#6d0000,#740000,#860000,#8e0000,#7e0000,#5f0000,#400000,#240000,#040000,#000000)"></div><div style="position:absolute;left:0;top:468px;width:100%;height:6px;background:linear-gradient(90deg,#000000,#000000,#000000,#130000,#580000,#7e0000,#800000,#6b0000,#5c0000,#690000,#7f0000,#890000,#8c0000,#910000,#8e0000,#7b0000,#690000,#6a0000,#760000,#830000,#830000,#710000,#5b0000,#530000,#5e0000,#760000,#810000,#6a0000,#5c0000,#7f0000,#a70000,#a70000,#890000,#640000,#4f0000,#5a0000,#750000,#8e0000,#990000,#900000,#810000,#7a0000,#800000,#910000,#990000,#870000,#660000,#450000,#260000,#050000,#000000)"></div><div style="position:absolute;left:0;top:474px;width:100%;height:6px;background:linear-gradient(90deg,#000000,#000000,#000000,#140000,#5b0000,#850000,#8b0000,#790000,#6a0000,#750000,#890000,#920000,#970000,#9e0000,#9d0000,#8a0000,#790000,#7a0000,#870000,#950000,#950000,#7f0000,#680000,#630000,#710000,#880000,#8e0000,#760000,#6b0000,#8f0000,#b50000,#ac0000,#870000,#670000,#5c0000,#6b0000,#850000,#9b0000,#a30000,#9b0000,#8e0000,#870000,#8c0000,#9d0000,#a50000,#900000,#6c0000,#490000,#290000,#060000,#000000)"></div><div style="position:absolute;left:0;top:480px;width:100%;height:6px;background:linear-gradient(90deg,#000000,#000000,#000000,#150000,#5c0000,#8b0000,#970000,#870000,#780000,#800000,#920000,#9c0000,#a20000,#ac0000,#ad0000,#9b0000,#890000,#8a0000,#970000,#a70000,#a60000,#8d0000,#730000,#740000,#870000,#9b0000,#9c0000,#840000,#790000,#9d0000,#be0000,#aa0000,#7f0000,#680000,#690000,#7d0000,#970000,#a80000,#ac0000,#a50000,#9a0000,#930000,#970000,#a90000,#b10000,#9a0000,#740000,#4e0000,#2c0000,#070000,#000000)"></div><div style="position:absolute;left:0;top:486px;width:100%;height:6px;background:linear-gradient(90deg,#000000,#000000,#000000,#150000,#5d0000,#910000,#a30000,#950000,#840000,#8b0000,#9b0000,#a50000,#ad0000,#ba0000,#bd0000,#ac0000,#990000,#990000,#a70000,#b60000,#b50000,#980000,#7e0000,#850000,#9c0000,#ad0000,#aa0000,#910000,#880000,#a90000,#c20000,#a30000,#740000,#660000,#750000,#900000,#aa0000,#b50000,#b50000,#af0000,#a60000,#9f0000,#a20000,#b50000,#bd0000,#a50000,#7b0000,#540000,#300000,#080000,#000000)"></div><div style="position:absolute;left:0;top:492px;width:100%;height:6px;background:linear-gradient(90deg,#000000,#000000,#000000,#160000,#5f0000,#970000,#ae0000,#a20000,#900000,#940000,#a30000,#ac0000,#b70000,#c70000,#cd0000,#bd0000,#a90000,#a70000,#b40000,#c20000,#c00000,#a10000,#880000,#930000,#af0000,#be0000,#b80000,#9f0000,#960000,#b20000,#c30000,#990000,#670000,#630000,#800000,#a30000,#bc0000,#c30000,#be0000,#b80000,#b10000,#aa0000,#ad0000,#c00000,#c80000,#af0000,#830000,#5a0000,#340000,#0a0000,#000000)"></div><div style="position:absolute;left:0;top:498px;width:100%;height:6px;background:linear-gradient(90deg,#000000,#000000,#000000,#170000,#600000,#9e0000,#b90000,#ad0000,#990000,#9b0000,#a90000,#b30000,#bf0000,#d20000,#d60800,#cc0000,#b70000,#b40000,#be0000,#ca0000,#c60000,#a70000,#8f0000,#9f0000,#bd0000,#cc0000,#c50000,#ac0000,#a20000,#b90000,#c00000,#8d0000,#590000,#5f0000,#8a0000,#b40000,#cd0000,#d00000,#c70000,#c10000,#bb0000,#b50000,#b80000,#cb0000,#d30000,#b80000,#8b0000,#610000,#380000,#0b0000,#000000)"></div><div style="position:absolute;left:0;top:504px;width:100%;height:6px;background:linear-gradient(90deg,#000000,#000000,#000000,#180000,#620000,#a50000,#c40000,#b70000,#a00000,#a00000,#ad0000,#b70000,#c50000,#d60800,#d81500,#d50600,#c40000,#be0000,#c50000,#cd0000,#c60000,#a90000,#940000,#a50000,#c50000,#d40200,#d00000,#b80000,#ab0000,#bc0000,#bb0000,#810000,#4c0000,#5c0000,#930000,#c30000,#d60800,#d60800,#d00000,#c90000,#c40000,#bf0000,#c40000,#d40200,#d60900,#c10000,#930000,#670000,#3d0000,#0d0000,#000000)"></div><div style="position:absolute;left:0;top:510px;width:100%;height:6px;background:linear-gradient(90deg,#000000,#000000,#000000,#190000,#660000,#ac0000,#ce0000,#bf0000,#a40000,#a20000,#ae0000,#b90000,#c90000,#d70f00,#da1f00,#d71100,#ce0000,#c60000,#c80000,#ca0000,#c00000,#a60000,#950000,#a50000,#c40000,#d50600,#d50600,#c30000,#b20000,#bc0000,#b30000,#750000,#430000,#5b0000,#9b0000,#ce0000,#d81400,#d81300,#d50600,#d10000,#cc0000,#c90000,#cf0000,#d70c00,#d71100,#c90000,#9b0000,#6f0000,#420000,#100000,#000000)"></div><div style="position:absolute;left:0;top:516px;width:100%;height:6px;background:linear-gradient(90deg,#000000,#000000,#000000,#1b0000,#6a0000,#b40000,#d50300,#c50000,#a60000,#a20000,#ae0000,#b90000,#ca0000,#d81500,#dc2800,#d91b00,#d40200,#cb0000,#c80000,#c20000,#b50000,#a00000,#950000,#a10000,#bd0000,#d50600,#d70f00,#cd0000,#b70000,#b90000,#ab0000,#6c0000,#3c0000,#5c0000,#a10000,#d50300,#da1d00,#da1d00,#d71100,#d50600,#d40000,#d30000,#d50700,#d91600,#d91800,#cf0000,#a20000,#770000,#480000,#130000,#000000)"></div><div style="position:absolute;left:0;top:522px;width:100%;height:6px;background:linear-gradient(90deg,#000000,#000000,#000000,#1c0000,#700000,#bc0000,#d60b00,#ca0000,#a80000,#a20000,#ae0000,#b90000,#cc0000,#d91900,#dd2f00,#db2200,#d60900,#d00000,#c70000,#b90000,#a70000,#990000,#940000,#9b0000,#b20000,#d50300,#d91700,#d40200,#ba0000,#b50000,#a30000,#650000,#3a0000,#5f0000,#a80000,#d60a00,#db2400,#dc2700,#da1c00,#d70f00,#d50700,#d60800,#d81300,#da2000,#da1f00,#d40200,#aa0000,#7f0000,#4f0000,#160000,#010000)"></div><div style="position:absolute;left:0;top:528px;width:100%;height:6px;background:linear-gradient(90deg,#000000,#000000,#000000,#1d0000,#760000,#c50000,#d81400,#d00000,#ab0000,#a40000,#af0000,#ba0000,#cd0000,#da1d00,#df3500,#dc2900,#d71000,#d40000,#c60000,#b00000,#9b0000,#930000,#930000,#940000,#a70000,#d40100,#da2000,#d60b00,#bc0000,#b10000,#9c0000,#620000,#3d0000,#650000,#ae0000,#d71000,#dd2a00,#de3000,#dc2700,#d91800,#d70e00,#d81100,#da1e00,#dc2a00,#dc2600,#d60800,#b30000,#890000,#560000,#1a0000,#010000)"></div><div style="position:absolute;left:0;top:534px;width:100%;height:6px;background:linear-gradient(90deg,#000000,#000000,#000000,#1f0000,#7c0000,#ce0000,#da1d00,#d50400,#b10000,#a80000,#b30000,#bd0000,#d10000,#db2100,#e03b00,#de3000,#d81600,#d50500,#c70000,#aa0000,#920000,#910000,#950000,#900000,#9f0000,#d40000,#dc2900,#d81400,#bf0000,#ae0000,#9a0000,#650000,#450000,#6e0000,#b50000,#d81500,#de3000,#e03900,#de3300,#db2100,#d81500,#d91a00,#dc2900,#de3300,#dd2d00,#d71000,#bd0000,#940000,#5f0000,#1c0000,#030000)"></div><div style="position:absolute;left:0;top:540px;width:100%;height:6px;background:linear-gradient(90deg,#000000,#000000,#000000,#210000,#830000,#d50400,#dc2700,#d70e00,#ba0000,#b20000,#bb0000,#c40000,#d50300,#dc2800,#e14200,#df3800,#da1d00,#d60c00,#cc0000,#aa0000,#900000,#920000,#9a0000,#910000,#9c0000,#d50400,#de3300,#da1d00,#c20000,#af0000,#9b0000,#6d0000,#540000,#7b0000,#be0000,#d91b00,#df3700,#e24300,#e13f00,#dd2c00,#da1d00,#db2400,#df3400,#e03d00,#df3500,#d91a00,#c80000,#a00000,#680000,#1f0000,#040000)"></div><div style="position:absolute;left:0;top:546px;width:100%;height:6px;background:linear-gradient(90deg,#000000,#000000,#000000,#220000,#890000,#d70d00,#de3300,#da1c00,#ca0000,#c10000,#ca0000,#d10000,#d70e00,#de3100,#e34b00,#e14000,#dc2600,#d81500,#d40100,#b20000,#980000,#9c0000,#a40000,#990000,#a40000,#d70e00,#e13f00,#dc2600,#c70000,#b30000,#a30000,#7d0000,#680000,#8c0000,#c80000,#db2200,#e13e00,#e44e00,#e34c00,#df3700,#dc2600,#dd2d00,#e13f00,#e24700,#e13f00,#db2500,#d40100,#ad0000,#720000,#220000,#060000)"></div><div style="position:absolute;left:0;top:552px;width:100%;height:6px;background:linear-gradient(90deg,#000000,#000000,#000000,#240000,#900000,#d91700,#e13f00,#dd2d00,#d60c00,#d50400,#d60a00,#d70f00,#da1c00,#e03e00,#e55500,#e34900,#de3000,#db2100,#d71000,#c30000,#a90000,#ac0000,#b30000,#aa0000,#b50000,#da1f00,#e44e00,#de3000,#cf0000,#bc0000,#b20000,#940000,#830000,#a10000,#d40100,#dd2b00,#e24800,#e65900,#e65800,#e14200,#de3000,#df3700,#e34800,#e45100,#e34a00,#de3300,#d71100,#bc0000,#7c0000,#250000,#090000)"></div><div style="position:absolute;left:0;top:558px;width:100%;height:6px;background:linear-gradient(90deg,#000000,#000000,#000000,#260000,#960000,#db2000,#e44d00,#e14200,#dc2600,#da1f00,#db2400,#db2500,#dd2f00,#e34c00,#e86100,#e55400,#e03b00,#de3000,#db2300,#d60700,#c40000,#c30000,#c70000,#c10000,#d00000,#df3600,#e75d00,#e03b00,#d50500,#c90000,#c60000,#b10000,#a30000,#b90000,#d70f00,#df3500,#e55300,#e86500,#e86400,#e44e00,#e03b00,#e14000,#e45200,#e75c00,#e65800,#e14200,#db2200,#cc0000,#880000,#290000,#0c0000)"></div><div style="position:absolute;left:0;top:564px;width:100%;height:6px;background:linear-gradient(90deg,#000000,#000000,#000000,#270000,#9c0000,#dc2a00,#e65b00,#e55700,#e14100,#e03c00,#e13f00,#e03d00,#e24300,#e65b00,#ea6c00,#e75f00,#e34800,#e14100,#e03a00,#db2400,#d70e00,#d60900,#d60a00,#d60900,#d91b00,#e44f00,#ea6d00,#e24700,#d71100,#d50500,#d60a00,#d10000,#c60000,#d30000,#da1f00,#e14100,#e75e00,#eb7100,#eb7100,#e65b00,#e24700,#e34b00,#e65b00,#e96700,#e86600,#e55300,#de3400,#d60900,#940000,#2c0000,#0f0000)"></div><div style="position:absolute;left:0;top:570px;width:100%;height:6px;background:linear-gradient(90deg,#000000,#000000,#000000,#280000,#a20000,#de3300,#e96900,#ea6b00,#e65b00,#e65800,#e65b00,#e65700,#e65900,#ea6b00,#ec7700,#e96900,#e55600,#e55300,#e45200,#e14200,#dd2f00,#dc2500,#db2400,#dc2800,#e03d00,#e96800,#ed7b00,#e55200,#da1f00,#d91800,#db2400,#da1f00,#d81500,#d91a00,#dd2f00,#e44d00,#ea6b00,#ed7d00,#ed7c00,#e96700,#e55300,#e55500,#e86400,#eb7200,#eb7400,#e86400,#e24600,#d91a00,#9f0000,#300000,#120000)"></div><div style="position:absolute;left:0;top:576px;width:100%;height:6px;background:linear-gradient(90deg,#000000,#000000,#000000,#2a0000,#a70000,#e03d00,#ec7600,#ed7d00,#eb7200,#eb7200,#ec7600,#eb7000,#ea6e00,#ec7800,#ee8000,#eb7400,#e86500,#e96600,#e96900,#e75e00,#e44d00,#e14100,#e13e00,#e24700,#e75f00,#ee8000,#ef8800,#e75d00,#de2f00,#dd2e00,#e13e00,#e14000,#df3800,#df3500,#e13f00,#e65a00,#ec7700,#f08800,#ef8700,#eb7200,#e75f00,#e75f00,#ea6d00,#ed7c00,#ee8200,#ec7400,#e65700,#dd2b00,#ab0000,#330000,#150000)"></div><div style="position:absolute;left:0;top:582px;width:100%;height:6px;background:linear-gradient(90deg,#000000,#000000,#000000,#2b0000,#ab0000,#e24600,#ee8300,#f08c00,#ee8200,#ef8600,#f08c00,#ef8700,#ee8000,#ef8300,#ef8500,#ed7c00,#ec7500,#ed7a00,#ee7f00,#ec7600,#e96600,#e65a00,#e65800,#e86600,#ed7d00,#f29300,#f19100,#e96800,#e14200,#e24400,#e65800,#e75e00,#e65700,#e44d00,#e44f00,#e96600,#ee8300,#f29300,#f19000,#ed7c00,#e96a00,#e96a00,#ec7700,#ef8700,#f18f00,#ef8400,#e96800,#e03a00,#b60000,#370000,#170000)"></div><div style="position:absolute;left:0;top:588px;width:100%;height:6px;background:linear-gradient(90deg,#000000,#000000,#000000,#2c0000,#b00000,#e44e00,#f18d00,#f29500,#f08b00,#f19200,#f49d00,#f39a00,#f19000,#f08b00,#ef8800,#ef8400,#ef8400,#f18d00,#f29200,#ef8800,#ec7800,#ea6e00,#eb7100,#ee8100,#f29500,#f4a000,#f29600,#eb7200,#e55500,#e65c00,#eb7000,#ec7800,#eb7200,#e86300,#e75f00,#eb7200,#f18e00,#f39c00,#f39800,#ef8600,#ec7400,#eb7400,#ee8100,#f19200,#f39a00,#f19200,#ec7700,#e34800,#c00000,#390000,#190000)"></div><div style="position:absolute;left:0;top:594px;width:100%;height:6px;background:linear-gradient(90deg,#000000,#000000,#000000,#2d0000,#b40000,#e55600,#f29600,#f39900,#f08b00,#f29500,#f6a700,#f6a800,#f49c00,#f18e00,#ef8600,#f08900,#f29400,#f4a000,#f5a100,#f19100,#ee7f00,#ed7c00,#ef8700,#f39800,#f5a600,#f5a600,#f29600,#ed7c00,#e96a00,#eb7200,#ef8400,#f08d00,#ef8600,#ec7500,#ea6d00,#ed7e00,#f39700,#f5a400,#f49f00,#f18e00,#ed7e00,#ee7f00,#f08c00,#f39c00,#f5a500,#f49e00,#ef8500,#e55500,#c80000,#3c0000,#190000)"></div><div style="position:absolute;left:0;top:600px;width:100%;height:6px;background:linear-gradient(90deg,#000000,#000000,#000000,#2e0000,#b70000,#e75c00,#f49c00,#f39900,#ef8500,#f29200,#f7ac00,#f8b200,#f5a400,#f18e00,#ee8100,#f08c00,#f5a100,#f7af00,#f7ac00,#f29500,#ee8100,#ef8600,#f39900,#f6aa00,#f8b000,#f6a600,#f29400,#ef8400,#ee7e00,#ef8700,#f29500,#f49c00,#f29700,#ef8500,#ed7b00,#f08900,#f4a000,#f6aa00,#f5a600,#f29500,#ef8700,#f08a00,#f29700,#f5a600,#f7ae00,#f6a900,#f19100,#e86100,#d00000,#3f0000,#1a0000)"></div><div style="position:absolute;left:0;top:606px;width:100%;height:6px;background:linear-gradient(90deg,#000000,#000000,#000000,#2e0000,#b90000,#e86100,#f4a000,#f29400,#ec7900,#f08900,#f6aa00,#f9b500,#f6a800,#f08a00,#ed7900,#f08c00,#f7ab00,#fabb00,#f8b100,#f19100,#ed7b00,#f08900,#f6a700,#f9b700,#f8b400,#f5a100,#f18f00,#f08a00,#f19000,#f39900,#f5a200,#f6a700,#f5a200,#f19100,#ef8600,#f29300,#f6a700,#f8b000,#f7ab00,#f39c00,#f19000,#f29400,#f5a300,#f8b000,#f9b700,#f8b200,#f49d00,#ea6c00,#d50400,#410000,#1a0000)"></div><div style="position:absolute;left:0;top:612px;width:100%;height:6px;background:linear-gradient(90deg,#000000,#000000,#000000,#2f0000,#ba0000,#e86300,#f49f00,#f08b00,#e96a00,#ed7c00,#f5a300,#f8b400,#f6a600,#ee8300,#ea6f00,#f08900,#f8b200,#fbc200,#f8b200,#f08a00,#eb7100,#f08900,#f7af00,#fabd00,#f8b200,#f39900,#ef8800,#f18f00,#f49f00,#f6a700,#f6aa00,#f7ad00,#f6a900,#f39a00,#f19100,#f39c00,#f7ae00,#f9b600,#f8b100,#f5a300,#f39900,#f49f00,#f7ae00,#faba00,#fbbf00,#fabc00,#f6a800,#ec7600,#d60b00,#430000,#1a0000)"></div><div style="position:absolute;left:0;top:618px;width:100%;height:6px;background:linear-gradient(90deg,#000000,#000000,#000000,#2f0000,#ba0000,#e86300,#f39b00,#ee8000,#e65900,#ea6b00,#f29700,#f7ac00,#f49f00,#ec7800,#e86300,#ee8300,#f8b200,#fbc100,#f7ab00,#ed7d00,#e86400,#ef8300,#f8b100,#fabd00,#f7ab00,#f18f00,#ee8100,#f19100,#f6a900,#f7af00,#f7ad00,#f7af00,#f7ac00,#f4a100,#f39900,#f5a400,#f8b400,#fabb00,#f9b700,#f6aa00,#f5a200,#f6ab00,#faba00,#fcc400,#fcc800,#fcc600,#f8b300,#ee8000,#d71100,#450000,#190000)"></div><div style="position:absolute;left:0;top:624px;width:100%;height:6px;background:linear-gradient(90deg,#000000,#000000,#000000,#2e0000,#b90000,#e75f00,#f29300,#eb7300,#e34800,#e65900,#ef8600,#f49e00,#f29300,#e96a00,#e55500,#ec7900,#f7ac00,#f9ba00,#f49f00,#ea6d00,#e55500,#ed7a00,#f7ac00,#f9b500,#f49f00,#ef8400,#ed7a00,#f19100,#f7ac00,#f8b100,#f7ac00,#f7ac00,#f7ac00,#f5a400,#f4a000,#f6aa00,#f9b900,#fbc100,#fabe00,#f8b300,#f7ad00,#f9b600,#fcc500,#fece00,#fed200,#fed000,#fabe00,#f08900,#d91700,#470000,#180000)"></div><div style="position:absolute;left:0;top:630px;width:100%;height:6px;background:linear-gradient(90deg,#000000,#000000,#000000,#2e0000,#b70000,#e65700,#ef8600,#e86400,#df3800,#e24700,#eb7100,#f08900,#ee8000,#e65900,#e24500,#ea6b00,#f49e00,#f6a900,#f08c00,#e65a00,#e24500,#ea6c00,#f49e00,#f5a500,#f18f00,#ec7800,#eb7400,#f08d00,#f6a800,#f7ab00,#f5a500,#f5a600,#f6a800,#f5a500,#f5a400,#f7ae00,#fabd00,#fcc500,#fcc500,#fabc00,#f9b700,#fbc100,#fed000,#ffd500,#ffd500,#ffd500,#fdc900,#f29300,#da1d00,#480000,#160000)"></div><div style="position:absolute;left:0;top:636px;width:100%;height:6px;background:linear-gradient(90deg,#000000,#000000,#000000,#2d0000,#b30000,#e34c00,#eb7400,#e55300,#dc2800,#de3300,#e65800,#eb7000,#e96900,#e24600,#df3500,#e65a00,#f08900,#f19100,#eb7300,#e24500,#de3400,#e65a00,#f08a00,#f18f00,#ed7b00,#ea6b00,#ea6e00,#ef8600,#f49c00,#f49e00,#f39800,#f39b00,#f4a100,#f5a200,#f5a500,#f7af00,#fabe00,#fcc800,#fdca00,#fcc400,#fbc000,#fdca00,#ffd500,#ffd500,#ffd500,#ffd500,#fed200,#f39a00,#db2100,#4a0000,#140000)"></div><div style="position:absolute;left:0;top:642px;width:100%;height:6px;background:linear-gradient(90deg,#000000,#000000,#000000,#2b0000,#ac0000,#e03c00,#e75e00,#e13f00,#d91800,#da1e00,#e03d00,#e55200,#e44e00,#de3000,#db2200,#e24400,#ea6e00,#eb7200,#e55500,#dd2e00,#db2100,#e24500,#ea6f00,#eb7300,#e86300,#e75c00,#e86500,#ec7900,#f08a00,#f08a00,#ef8600,#f08b00,#f29400,#f39900,#f49f00,#f7ab00,#f9b900,#fcc600,#fdcb00,#fcc600,#fbc300,#fdcc00,#ffd500,#ffd500,#ffd500,#ffd500,#ffd500,#f39c00,#db2200,#4a0000,#100000)"></div><div style="position:absolute;left:0;top:648px;width:100%;height:6px;background:linear-gradient(90deg,#000000,#000000,#000000,#290000,#a30000,#dc2800,#e24400,#dc2900,#d50700,#d60800,#da1f00,#de3100,#de2f00,#d91800,#d70d00,#dd2c00,#e44f00,#e44f00,#df3400,#d81400,#d70d00,#dd2d00,#e45000,#e55200,#e24700,#e34a00,#e65800,#e96800,#eb7100,#eb7000,#ea6e00,#ec7500,#ee8100,#f08a00,#f29300,#f4a000,#f7ae00,#fabc00,#fcc400,#fbc100,#fbbf00,#fcc700,#ffd300,#ffd500,#ffd500,#ffd500,#fed000,#f29600,#da1e00,#490000,#0d0000)"></div><div style="position:absolute;left:0;top:654px;width:100%;height:6px;background:linear-gradient(90deg,#000000,#000000,#000000,#260000,#970000,#d71000,#dc2700,#d71000,#c70000,#c40000,#d30000,#d70e00,#d70f00,#d10000,#ca0000,#d71000,#dd2d00,#dc2900,#d71100,#cd0000,#ca0000,#d71100,#dd2d00,#dd2e00,#dc2800,#de3200,#e24400,#e44f00,#e55200,#e45000,#e45000,#e65a00,#e96700,#eb7300,#ed7e00,#f08b00,#f39900,#f6a800,#f8b200,#f8b100,#f7af00,#f9b600,#fbc000,#fcc800,#fdcc00,#fece00,#fabe00,#ef8700,#d81300,#450000,#0a0000)"></div><div style="position:absolute;left:0;top:660px;width:100%;height:6px;background:linear-gradient(90deg,#000000,#000000,#000000,#220000,#860000,#c80000,#d50600,#c80000,#af0000,#aa0000,#b30000,#be0000,#c00000,#b50000,#b00000,#c60000,#d50700,#d40200,#c10000,#b00000,#b00000,#c60000,#d50700,#d60800,#d50600,#d81600,#dc2a00,#de3000,#dd2e00,#dd2b00,#dd2d00,#df3800,#e24600,#e55300,#e75f00,#ea6b00,#ec7900,#f08800,#f29200,#f29300,#f19200,#f39700,#f4a000,#f6a700,#f7ad00,#f7af00,#f49f00,#ea6b00,#d40000,#400000,#070000)"></div><div style="position:absolute;left:0;top:666px;width:100%;height:6px;background:linear-gradient(90deg,#000000,#000000,#000000,#1d0000,#720000,#a80000,#b50000,#a80000,#940000,#8e0000,#930000,#9b0000,#9e0000,#960000,#940000,#a50000,#b50000,#af0000,#9e0000,#920000,#940000,#a50000,#b50000,#b50000,#b50000,#c70000,#d50600,#d60900,#d50400,#d40100,#d50400,#d70e00,#da1c00,#dc2800,#de3400,#e13f00,#e34b00,#e65900,#e86300,#e86400,#e86300,#e96700,#ea6e00,#ec7500,#ed7a00,#ed7c00,#ea6e00,#e14100,#b80000,#370000,#050000)"></div><div style="position:absolute;left:0;top:672px;width:100%;height:6px;background:linear-gradient(90deg,#000000,#000000,#000000,#150000,#5b0000,#850000,#900000,#850000,#760000,#700000,#730000,#7a0000,#7c0000,#760000,#750000,#820000,#8f0000,#890000,#7c0000,#730000,#750000,#830000,#8f0000,#8e0000,#900000,#9f0000,#af0000,#b10000,#ac0000,#a90000,#ac0000,#b50000,#c00000,#ca0000,#d40000,#d60900,#d81300,#da1e00,#dc2600,#dc2800,#dc2700,#dc2a00,#de3000,#df3500,#e03900,#e03b00,#de3000,#d60b00,#940000,#2c0000,#030000)"></div><div style="position:absolute;left:0;top:678px;width:100%;height:6px;background:linear-gradient(90deg,#000000,#000000,#000000,#0b0000,#430000,#630000,#6b0000,#630000,#580000,#540000,#560000,#5b0000,#5d0000,#580000,#570000,#610000,#6b0000,#670000,#5d0000,#560000,#570000,#610000,#6b0000,#6b0000,#6b0000,#760000,#820000,#830000,#800000,#7e0000,#800000,#870000,#8f0000,#960000,#9d0000,#a40000,#ab0000,#b40000,#ba0000,#ba0000,#ba0000,#bc0000,#c00000,#c40000,#c70000,#c90000,#c10000,#a50000,#6e0000,#210000,#020000)"></div><div style="position:absolute;left:0;top:684px;width:100%;height:6px;background:linear-gradient(90deg,#000000,#000000,#000000,#060000,#2f0000,#450000,#4b0000,#450000,#3d0000,#3b0000,#3d0000,#410000,#420000,#3e0000,#3d0000,#440000,#4b0000,#490000,#420000,#3d0000,#3d0000,#440000,#4b0000,#4b0000,#4b0000,#520000,#590000,#5b0000,#590000,#580000,#590000,#5d0000,#620000,#670000,#6b0000,#700000,#750000,#7a0000,#7e0000,#7e0000,#7e0000,#800000,#830000,#850000,#870000,#880000,#830000,#700000,#4b0000,#140000,#010000)"></div><div style="position:absolute;left:0;top:690px;width:100%;height:6px;background:linear-gradient(90deg,#000000,#000000,#000000,#030000,#1f0000,#2e0000,#310000,#2d0000,#280000,#270000,#290000,#2b0000,#2c0000,#290000,#280000,#2d0000,#320000,#300000,#2c0000,#280000,#280000,#2d0000,#320000,#320000,#310000,#340000,#380000,#3a0000,#390000,#390000,#390000,#3b0000,#3e0000,#410000,#440000,#460000,#490000,#4c0000,#4e0000,#4e0000,#4e0000,#4f0000,#510000,#520000,#540000,#540000,#510000,#470000,#300000,#080000,#000000)"></div><div style="position:absolute;left:0;top:696px;width:100%;height:6px;background:linear-gradient(90deg,#000000,#000000,#000000,#010000,#110000,#1b0000,#1c0000,#190000,#170000,#170000,#180000,#190000,#190000,#180000,#170000,#1a0000,#1c0000,#1b0000,#190000,#170000,#170000,#1a0000,#1c0000,#1c0000,#1c0000,#1d0000,#1f0000,#1f0000,#1f0000,#1f0000,#1f0000,#200000,#220000,#230000,#240000,#250000,#260000,#280000,#290000,#290000,#290000,#290000,#2a0000,#2b0000,#2c0000,#2b0000,#2a0000,#260000,#1a0000,#030000,#000000)"></div><div style="position:absolute;left:0;top:702px;width:100%;height:6px;background:linear-gradient(90deg,#000000,#000000,#000000,#000000,#070000,#090000,#080000,#080000,#080000,#080000,#080000,#080000,#080000,#080000,#080000,#080000,#080000,#080000,#080000,#080000,#080000,#080000,#080000,#080000,#080000,#080000,#080000,#090000,#090000,#090000,#090000,#090000,#090000,#090000,#090000,#090000,#0a0000,#0a0000,#0a0000,#0a0000,#0a0000,#0a0000,#0a0000,#0a0000,#0a0000,#0a0000,#0a0000,#0a0000,#080000,#010000,#000000)"></div></div>
<div class="abs" style="left:509.0px;top:1739.0px;width:1017.2px;height:779.0px;border:2px solid #fff"></div>
<svg class="abs" style="left:0;top:0" width="3587" height="2747"><path d="M642.5 2517.0v-4M642.5 1740.0v4M800.7 2517.0v-4M800.7 1740.0v4M958.9 2517.0v-4M958.9 1740.0v4M1117.1 2517.0v-4M1117.1 1740.0v4M1275.3 2517.0v-4M1275.3 1740.0v4M1433.5 2517.0v-4M1433.5 1740.0v4M510.0075 2445.9h4M1525.2559999999999 2445.9h-4M510.0075 2366.8h4M1525.2559999999999 2366.8h-4M510.0075 2287.7h4M1525.2559999999999 2287.7h-4M510.0075 2208.6h4M1525.2559999999999 2208.6h-4M510.0075 2129.5h4M1525.2559999999999 2129.5h-4M510.0075 2050.4h4M1525.2559999999999 2050.4h-4M510.0075 1971.3h4M1525.2559999999999 1971.3h-4M510.0075 1892.2h4M1525.2559999999999 1892.2h-4M510.0075 1813.1h4M1525.2559999999999 1813.1h-4" stroke="#fff" stroke-width="2"/></svg>
<div class="abs st" style="left:392.0px;width:101px;text-align:right;top:2431.9px">-10</div>
<div class="abs st" style="left:392.0px;width:101px;text-align:right;top:2352.8px">0</div>
<div class="abs st" style="left:392.0px;width:101px;text-align:right;top:2273.7px">10</div>
<div class="abs st" style="left:392.0px;width:101px;text-align:right;top:2194.6px">20</div>
<div class="abs st" style="left:392.0px;width:101px;text-align:right;top:2115.5px">30</div>
<div class="abs st" style="left:392.0px;width:101px;text-align:right;top:2036.4px">40</div>
<div class="abs st" style="left:392.0px;width:101px;text-align:right;top:1957.3px">50</div>
<div class="abs st" style="left:392.0px;width:101px;text-align:right;top:1878.2px">60</div>
<div class="abs st" style="left:392.0px;width:101px;text-align:right;top:1799.1px">70</div>
<div class="abs st" style="left:582.5px;width:120px;text-align:center;top:2535px">0</div>
<div class="abs st" style="left:740.7px;width:120px;text-align:center;top:2535px">20</div>
<div class="abs st" style="left:898.9px;width:120px;text-align:center;top:2535px">40</div>
<div class="abs st" style="left:1057.1px;width:120px;text-align:center;top:2535px">60</div>
<div class="abs st" style="left:1215.3px;width:120px;text-align:center;top:2535px">80</div>
<div class="abs st" style="left:1373.5px;width:120px;text-align:center;top:2535px">100</div>
<div class="abs st" style="left:957.6px;width:120px;text-align:center;top:2579px;font-size:35px;line-height:36px">x</div>
<div class="abs st" style="left:356.0px;width:120px;text-align:center;top:2111px;font-size:35px;line-height:36px;transform:rotate(-90deg)">y</div>
<div class="abs stt" style="left:717.6px;width:600px;text-align:center;top:1692px">scalar field tx</div>
<div class="abs" style="left:1553.3px;top:1743px;width:52.3px;height:771.4000000000001px;border:2px solid #fff;background:linear-gradient(180deg,#ffd500,#d40000 25%,#000 50%,#0000cc 75%,#00d5ff)"></div>
<div class="abs st" style="left:1619.3px;top:1775.2px">1.5</div>
<div class="abs st" style="left:1619.3px;top:1887.7px">1</div>
<div class="abs st" style="left:1619.3px;top:2000.2px">0.5</div>
<div class="abs st" style="left:1619.3px;top:2112.7px">0</div>
<div class="abs st" style="left:1619.3px;top:2225.2px">-0.5</div>
<div class="abs st" style="left:1619.3px;top:2337.7px">-1</div>
<div class="abs st" style="left:1619.3px;top:2450.2px">-1.5</div>
<svg class="abs" style="left:0;top:0" width="3587" height="2747"><path d="M1605.6 1791.2h-8M1605.6 1903.7h-8M1605.6 2016.2h-8M1605.6 2128.7h-8M1605.6 2241.2h-8M1605.6 2353.7h-8M1605.6 2466.2h-8" stroke="#fff" stroke-width="2"/></svg>
<div class="abs" style="left:2056.9px;top:1740.0px;width:988.8px;height:777.0px;filter:blur(2px)"><div style="position:absolute;left:0;top:36px;width:100%;height:6px;background:linear-gradient(90deg,#000000,#000000,#000000,#000000,#000001,#000004,#000008,#000008,#000004,#000001,#000000,#000000,#000000,#000000,#000000,#000000,#000000,#000000,#000000,#000000,#000000,#000000,#000000,#000000,#000000,#000000,#000000,#000000,#000000,#000000,#000000,#000001,#000000,#000000,#000000,#000000,#000000,#000001,#000001,#010000,#030000,#010000,#000000,#000000,#000000,#010000,#010000,#010000,#000000,#000000,#000000)"></div><div style="position:absolute;left:0;top:42px;width:100%;height:6px;background:linear-gradient(90deg,#000000,#000000,#000000,#000000,#000003,#000008,#00000f,#00000e,#000007,#000002,#000000,#000000,#000000,#000000,#000000,#000000,#000000,#000000,#000000,#000000,#000000,#000000,#000000,#000000,#000000,#000000,#000000,#000000,#000000,#000000,#000000,#000001,#000000,#000000,#000000,#000000,#000000,#000003,#000004,#050000,#0b0000,#040000,#020000,#000000,#000001,#030000,#020000,#030000,#000000,#000000,#000000)"></div><div style="position:absolute;left:0;top:48px;width:100%;height:6px;background:linear-gradient(90deg,#000000,#000000,#000000,#000001,#000004,#00000f,#00001a,#000019,#00000d,#000004,#000001,#000000,#000000,#000000,#000000,#000000,#000000,#000000,#000000,#000000,#000000,#000000,#000000,#000000,#000000,#000000,#000000,#000000,#000000,#000000,#000000,#000001,#000000,#000000,#000000,#010000,#000000,#000007,#000008,#090000,#190000,#0a0000,#040000,#000000,#000002,#070000,#050000,#060000,#000000,#000000,#000000)"></div><div style="position:absolute;left:0;top:54px;width:100%;height:6px;background:linear-gradient(90deg,#000000,#000000,#000000,#000001,#000007,#000018,#00002b,#00002a,#000016,#000006,#000001,#000000,#000000,#000000,#000000,#000000,#000000,#000000,#000000,#000000,#000000,#000000,#000000,#000000,#000000,#000000,#000000,#000000,#000000,#000000,#000000,#000001,#000000,#000000,#000000,#030000,#000000,#00000e,#00000f,#0d0000,#230000,#140000,#070000,#000000,#000004,#0b0000,#080000,#090000,#000000,#000000,#000000)"></div><div style="position:absolute;left:0;top:60px;width:100%;height:6px;background:linear-gradient(90deg,#000000,#000000,#000000,#000002,#00000c,#000026,#000044,#000042,#000022,#00000a,#000002,#000000,#000000,#000000,#000000,#000000,#000000,#000000,#000000,#000000,#000000,#000000,#000000,#000000,#000000,#000000,#000000,#000000,#000000,#000000,#000001,#000002,#000000,#000000,#000000,#060000,#000000,#000016,#000017,#100000,#290000,#1e0000,#0a0000,#000000,#000008,#0e0000,#0b0000,#0c0000,#000000,#000000,#000000)"></div><div style="position:absolute;left:0;top:66px;width:100%;height:6px;background:linear-gradient(90deg,#000000,#000000,#000000,#000003,#000011,#000039,#000065,#000062,#000033,#00000f,#000002,#000000,#000000,#000000,#000000,#000000,#000000,#000000,#000000,#000000,#000000,#000000,#000000,#000000,#000000,#000000,#000000,#000000,#000000,#000000,#000001,#000002,#000000,#000000,#000000,#0c0000,#000000,#00001d,#00001d,#120000,#2f0000,#250000,#0e0000,#000000,#00000d,#110000,#0f0000,#100000,#000000,#000000,#000000)"></div><div style="position:absolute;left:0;top:72px;width:100%;height:6px;background:linear-gradient(90deg,#000000,#000000,#000000,#000004,#000019,#000051,#00008f,#00008a,#000048,#000015,#000003,#000000,#000000,#000000,#000000,#000000,#000000,#000000,#000000,#000000,#000000,#000000,#000000,#000000,#000000,#000000,#000000,#000000,#000000,#000000,#000001,#000003,#000001,#000000,#000000,#150000,#000000,#000022,#000022,#120000,#350000,#2d0000,#140000,#000000,#000013,#120000,#130000,#130000,#000000,#000000,#000000)"></div><div style="position:absolute;left:0;top:78px;width:100%;height:6px;background:linear-gradient(90deg,#000000,#000000,#000000,#000005,#000021,#00006b,#0000be,#0000b7,#000060,#00001b,#000004,#000000,#000000,#000000,#000000,#000000,#000000,#000000,#000000,#000000,#000000,#000000,#000000,#000001,#000001,#000001,#000000,#000000,#000000,#000000,#000001,#000004,#000001,#000000,#010000,#1e0000,#000000,#000028,#000027,#110000,#3a0000,#360000,#180000,#000000,#00001a,#120000,#170000,#150000,#000000,#000000,#000000)"></div><div style="position:absolute;left:0;top:84px;width:100%;height:6px;background:linear-gradient(90deg,#000000,#000000,#000001,#000007,#000029,#000087,#0025d5,#001cd3,#000079,#000022,#000005,#000000,#000000,#000000,#000000,#000000,#000000,#000000,#000000,#000000,#000000,#000000,#000001,#000001,#000001,#000001,#000001,#000000,#000000,#000000,#000002,#000005,#000001,#000000,#060000,#250000,#010000,#00002e,#00002c,#100000,#410000,#400000,#1c0000,#000000,#00001f,#130000,#1a0000,#170000,#020000,#010000,#000000)"></div><div style="position:absolute;left:0;top:90px;width:100%;height:6px;background:linear-gradient(90deg,#000000,#000000,#000001,#000008,#000031,#0000a1,#0055e0,#004ade,#000090,#000029,#000006,#000000,#000000,#000000,#000000,#000000,#000000,#000000,#000000,#000000,#000000,#000001,#000001,#000001,#000002,#000002,#000001,#000001,#000000,#000000,#000002,#000006,#000001,#000000,#0f0000,#2c0000,#030000,#000032,#000031,#100000,#480000,#4c0000,#210000,#000000,#000023,#130000,#1e0000,#1b0000,#070000,#030000,#000000)"></div><div style="position:absolute;left:0;top:96px;width:100%;height:6px;background:linear-gradient(90deg,#000000,#000000,#000001,#000009,#000037,#0000b5,#007ae9,#006ee6,#0000a2,#00002e,#000007,#000000,#000000,#000001,#000001,#000001,#000000,#000000,#000000,#000001,#000001,#000001,#000001,#000002,#000003,#000004,#000002,#000001,#000000,#000000,#000003,#000007,#000002,#000000,#1b0000,#330000,#060000,#000037,#000035,#0f0000,#500000,#590000,#280000,#000000,#000026,#120000,#250000,#220000,#110000,#060000,#000000)"></div><div style="position:absolute;left:0;top:102px;width:100%;height:6px;background:linear-gradient(90deg,#000000,#000000,#000001,#00000a,#00003b,#0000c1,#0090ef,#0083eb,#0000ad,#000031,#000007,#000000,#000001,#000003,#000003,#000002,#000000,#000000,#000001,#000001,#000002,#000002,#000002,#000004,#000006,#000006,#000005,#000002,#000001,#000000,#000003,#000008,#000002,#000000,#230000,#390000,#0b0000,#00003a,#000039,#100000,#5a0000,#680000,#310000,#000000,#000028,#120000,#2e0000,#2c0000,#1c0000,#0b0000,#000000)"></div><div style="position:absolute;left:0;top:108px;width:100%;height:6px;background:linear-gradient(90deg,#000000,#000000,#000001,#00000a,#00003c,#0000c3,#0094ef,#0087ec,#0000ae,#000031,#000006,#010000,#000004,#000007,#000007,#000004,#000001,#000000,#000001,#000003,#000004,#000004,#000004,#000007,#00000a,#00000b,#000008,#000004,#000001,#000001,#000003,#00000a,#000002,#000000,#290000,#3e0000,#100000,#00003d,#00003c,#110000,#660000,#7a0000,#3c0000,#000000,#000029,#120000,#3c0000,#3b0000,#270000,#100000,#000000)"></div><div style="position:absolute;left:0;top:114px;width:100%;height:6px;background:linear-gradient(90deg,#000000,#000000,#000001,#00000a,#00003b,#0000c2,#0093ef,#0086ec,#0000ae,#000031,#000004,#010000,#000008,#00000e,#00000f,#000009,#000002,#000001,#000003,#000006,#000008,#000007,#000007,#00000b,#000011,#000013,#00000f,#000007,#000002,#000001,#000004,#00000b,#000002,#000000,#2e0000,#430000,#160000,#00003e,#00003f,#140000,#750000,#8e0000,#4a0000,#000000,#000028,#120000,#4c0000,#4e0000,#340000,#160000,#000000)"></div><div style="position:absolute;left:0;top:120px;width:100%;height:6px;background:linear-gradient(90deg,#000000,#000000,#000001,#00000a,#00003b,#0000c1,#0091ef,#0084ec,#0000ad,#000030,#000001,#010000,#000012,#00001d,#00001e,#000012,#000004,#000003,#000008,#00000e,#000011,#00000f,#00000e,#000014,#00001e,#000021,#00001a,#00000d,#000003,#000000,#000003,#00000c,#000002,#010000,#330000,#460000,#1b0000,#00003f,#000042,#1b0000,#850000,#a30000,#5b0000,#000000,#000027,#130000,#610000,#660000,#440000,#1b0000,#000000)"></div><div style="position:absolute;left:0;top:126px;width:100%;height:6px;background:linear-gradient(90deg,#000000,#000000,#000001,#00000a,#00003b,#0000c1,#0090ee,#0083eb,#0000ac,#00002f,#030000,#020000,#000020,#000033,#000034,#000020,#000008,#000005,#000011,#00001c,#000021,#00001c,#00001a,#000022,#000030,#000036,#00002c,#000017,#000005,#000000,#000002,#00000b,#010000,#040000,#360000,#4a0000,#1e0000,#00003e,#000044,#210000,#960000,#b90000,#6c0000,#020000,#000024,#160000,#770000,#810000,#540000,#1e0000,#000000)"></div><div style="position:absolute;left:0;top:132px;width:100%;height:6px;background:linear-gradient(90deg,#000000,#000000,#000001,#00000a,#00003b,#0000c0,#008eee,#0082eb,#0000ac,#00002e,#090000,#040000,#000032,#000050,#000052,#000033,#00000d,#00000a,#000020,#000033,#00003a,#000032,#00002d,#000037,#00004a,#000053,#000045,#000026,#000008,#010000,#000000,#000009,#060000,#080000,#390000,#4c0000,#210000,#00003e,#000046,#270000,#a70000,#cf0000,#7e0000,#040000,#000020,#190000,#900000,#9d0000,#650000,#210000,#000000)"></div><div style="position:absolute;left:0;top:138px;width:100%;height:6px;background:linear-gradient(90deg,#000000,#000000,#000001,#00000a,#00003a,#0000bf,#008dee,#0080eb,#0000ab,#00002c,#110000,#090000,#000045,#000071,#000074,#000049,#000014,#000010,#000034,#000051,#00005b,#00004f,#000046,#000051,#000069,#000074,#000062,#000038,#00000c,#020000,#030000,#000006,#0b0000,#0d0000,#3c0000,#4f0000,#250000,#00003d,#000047,#2f0000,#b80000,#d70e00,#8f0000,#080000,#00001c,#1d0000,#a80000,#b90000,#760000,#250000,#000000)"></div><div style="position:absolute;left:0;top:144px;width:100%;height:6px;background:linear-gradient(90deg,#000000,#000000,#000001,#00000a,#00003a,#0000be,#008ced,#007fea,#0000aa,#00002b,#1a0000,#120000,#000056,#000091,#000096,#000060,#00001c,#000018,#00004a,#000072,#00007e,#00006e,#000060,#00006c,#000088,#000095,#000080,#00004c,#000010,#060000,#0a0000,#000002,#0d0000,#110000,#3e0000,#520000,#280000,#00003d,#000048,#380000,#c80000,#da1f00,#9e0000,#0d0000,#000017,#230000,#c00000,#d40000,#870000,#280000,#000000)"></div><div style="position:absolute;left:0;top:150px;width:100%;height:6px;background:linear-gradient(90deg,#000000,#000000,#000001,#00000a,#00003a,#0000be,#008aed,#007eea,#0000aa,#000029,#240000,#1e0000,#000064,#0000af,#0000b6,#000077,#000025,#000020,#000060,#000090,#00009f,#00008a,#000078,#000084,#0000a2,#0000b0,#00009a,#00005e,#000013,#0b0000,#130000,#020000,#090000,#110000,#400000,#550000,#2b0000,#00003d,#00004a,#410000,#d40200,#dd2c00,#ab0000,#130000,#000010,#2c0000,#d50300,#d91800,#960000,#2b0000,#000000)"></div><div style="position:absolute;left:0;top:156px;width:100%;height:6px;background:linear-gradient(90deg,#000000,#000000,#000001,#00000a,#00003a,#0000bd,#0089ed,#007cea,#0000a9,#000027,#2c0000,#2b0000,#00006f,#0003cd,#000fd0,#00008c,#00002d,#000028,#000072,#0000a9,#0000ba,#0000a2,#00008b,#000096,#0000b5,#0000c4,#0000ad,#00006d,#000014,#140000,#210000,#070000,#000000,#0d0000,#410000,#590000,#2e0000,#00003e,#00004b,#4b0000,#d70d00,#df3400,#b40000,#190000,#00000b,#370000,#d91700,#dd2d00,#a40000,#2e0000,#000000)"></div><div style="position:absolute;left:0;top:162px;width:100%;height:6px;background:linear-gradient(90deg,#000000,#000000,#000001,#00000a,#00003a,#0000bc,#0088ec,#007be9,#0000a8,#000026,#330000,#350000,#000079,#002fd7,#0040db,#00009e,#000034,#00002e,#000080,#0000be,#000dcf,#0000b4,#000098,#0000a2,#0000c3,#0011d0,#0000ba,#000076,#000012,#200000,#310000,#0d0000,#000007,#060000,#430000,#5e0000,#310000,#000040,#00004c,#550000,#d81600,#df3800,#ba0000,#1e0000,#000006,#450000,#dc2900,#e13e00,#b00000,#310000,#000000)"></div><div style="position:absolute;left:0;top:168px;width:100%;height:6px;background:linear-gradient(90deg,#000000,#000000,#000001,#00000a,#000039,#0000bb,#0086ec,#007ae9,#0000a8,#000026,#360000,#3a0000,#000082,#0058e1,#0069e5,#0000ac,#000037,#000031,#00008b,#000ace,#0042dc,#0000c3,#0000a1,#0000aa,#0004cd,#002dd7,#0000c3,#00007a,#00000b,#320000,#450000,#130000,#000015,#010000,#450000,#640000,#350000,#000042,#00004d,#600000,#da1d00,#e03a00,#bd0000,#210000,#000003,#530000,#e03900,#e34d00,#ba0000,#350000,#000000)"></div><div style="position:absolute;left:0;top:174px;width:100%;height:6px;background:linear-gradient(90deg,#000000,#000000,#000001,#000009,#000039,#0000bb,#0085ec,#0078e9,#0000a7,#000026,#350000,#370000,#00008a,#0073e8,#0083eb,#0000b3,#000035,#000030,#000093,#002ed7,#0072e7,#000ace,#0000a8,#0000b0,#0014d1,#0040db,#0000c8,#000079,#010000,#480000,#5b0000,#160000,#00002a,#000001,#480000,#6a0000,#380000,#000044,#00004e,#6a0000,#db2200,#df3900,#bf0000,#250000,#000001,#610000,#e24600,#e65800,#c30000,#380000,#000000)"></div><div style="position:absolute;left:0;top:180px;width:100%;height:6px;background:linear-gradient(90deg,#000000,#000000,#000001,#000009,#000039,#0000ba,#0083eb,#0077e9,#0000a6,#000027,#2e0000,#2c0000,#000091,#007fea,#008ced,#0000b2,#00002e,#00002b,#000097,#004bde,#0097f0,#0024d5,#0000ad,#0000b3,#001cd3,#0047dd,#0000c9,#000073,#130000,#610000,#6e0000,#180000,#00003b,#000005,#4c0000,#720000,#3b0000,#000046,#000050,#730000,#dc2600,#df3700,#bf0000,#270000,#000000,#6f0000,#e45200,#e86100,#cb0000,#3b0000,#000000)"></div><div style="position:absolute;left:0;top:186px;width:100%;height:6px;background:linear-gradient(90deg,#000000,#000000,#000001,#000009,#000039,#0000b9,#0082eb,#0076e8,#0000a6,#000029,#230000,#1b0000,#000097,#007cea,#0082eb,#0000aa,#000021,#000021,#000098,#005de2,#00aff6,#0035d9,#0000b0,#0000b5,#001bd3,#0043dc,#0000c6,#000067,#2b0000,#7c0000,#7d0000,#180000,#00004c,#00000d,#520000,#7b0000,#3e0000,#000049,#000051,#7c0000,#dc2900,#df3400,#bf0000,#2a0000,#000000,#7b0000,#e65a00,#e96800,#d10000,#3e0000,#000000)"></div><div style="position:absolute;left:0;top:192px;width:100%;height:6px;background:linear-gradient(90deg,#000000,#000000,#000001,#000009,#000038,#0000b8,#0081eb,#0074e8,#0000a5,#00002c,#140000,#040000,#00009c,#006de6,#006be6,#00009c,#000010,#000013,#000094,#0061e3,#00b7f8,#003ddb,#0000b2,#0000b4,#0012d0,#0033d8,#0000be,#000054,#480000,#970000,#890000,#140000,#00005b,#000015,#590000,#850000,#410000,#00004a,#000052,#830000,#dd2c00,#de3200,#bf0000,#2b0000,#000000,#840000,#e86100,#ea6d00,#d50300,#410000,#000000)"></div><div style="position:absolute;left:0;top:198px;width:100%;height:6px;background:linear-gradient(90deg,#000000,#000000,#000001,#000009,#000038,#0000b8,#007feb,#0073e8,#0000a5,#000031,#000001,#000015,#0000a0,#0057e1,#004bde,#00008a,#030000,#000002,#00008d,#005ae1,#00b1f6,#003bda,#0000b2,#0000b2,#0003cd,#001ad2,#0000b2,#00003d,#650000,#af0000,#8f0000,#0c0000,#000069,#00001c,#620000,#900000,#440000,#00004c,#000054,#880000,#dd2e00,#de3100,#be0000,#2c0000,#000000,#8a0000,#e86500,#eb7100,#d50700,#440000,#000000)"></div><div style="position:absolute;left:0;top:204px;width:100%;height:6px;background:linear-gradient(90deg,#000000,#000000,#000001,#000009,#000038,#0000b7,#007eea,#0072e7,#0000a4,#000036,#00001a,#000032,#0000a3,#0040db,#0029d6,#000077,#160000,#100000,#000084,#0049de,#00a0f2,#0033d8,#0000b1,#0000af,#0000c4,#0000cb,#0000a3,#000022,#7c0000,#c20000,#8f0000,#000003,#000074,#00001f,#6c0000,#9c0000,#470000,#00004d,#000055,#8d0000,#de3000,#de3100,#be0000,#2c0000,#000000,#8e0000,#e96800,#eb7300,#d60b00,#470000,#000000)"></div><div style="position:absolute;left:0;top:210px;width:100%;height:6px;background:linear-gradient(90deg,#000000,#000000,#000001,#000009,#000038,#0000b6,#007dea,#0071e7,#0000a4,#00003c,#000036,#000050,#0000a7,#002dd7,#000bcf,#000067,#270000,#200000,#00007b,#0034d9,#008aed,#0028d6,#0000af,#0000ac,#0000bb,#0000bd,#000093,#000004,#930000,#ce0000,#880000,#000016,#00007d,#000021,#770000,#a80000,#4b0000,#00004e,#000056,#900000,#de3100,#de3100,#be0000,#2c0000,#000000,#910000,#e96a00,#ec7500,#d70d00,#4b0000,#000000)"></div><div style="position:absolute;left:0;top:216px;width:100%;height:6px;background:linear-gradient(90deg,#000000,#000000,#000001,#000009,#000038,#0000b5,#007bea,#006fe7,#0000a4,#000042,#000053,#00006c,#0000ab,#001ed3,#0000c4,#000059,#330000,#2c0000,#000072,#001fd3,#0073e8,#001cd3,#0000ae,#0000a8,#0000b3,#0000b0,#000082,#1a0000,#a50000,#d10000,#7c0000,#000026,#000085,#000024,#810000,#b40000,#4e0000,#00004f,#000058,#920000,#de3200,#de3200,#bf0000,#2b0000,#000000,#920000,#ea6b00,#ec7600,#d71000,#4e0000,#000000)"></div><div style="position:absolute;left:0;top:222px;width:100%;height:6px;background:linear-gradient(90deg,#000000,#000000,#000001,#000009,#000037,#0000b5,#007ae9,#006ee6,#0000a3,#000047,#00006c,#000083,#0000af,#0015d1,#0000bb,#000050,#3b0000,#340000,#00006a,#000ccf,#0060e3,#0011d0,#0000ac,#0000a5,#0000ab,#0000a5,#000072,#350000,#b20000,#c90000,#6c0000,#000036,#00008c,#000026,#8b0000,#c00000,#510000,#000050,#000059,#930000,#de3300,#de3200,#bf0000,#2b0000,#000000,#930000,#ea6b00,#ec7700,#d81300,#510000,#000000)"></div><div style="position:absolute;left:0;top:228px;width:100%;height:6px;background:linear-gradient(90deg,#000000,#000000,#000001,#000009,#000037,#0000b4,#0079e9,#006de6,#0000a3,#00004a,#00007b,#000092,#0000b2,#0010d0,#0000b5,#00004a,#3f0000,#380000,#000065,#0000ca,#0051df,#0009ce,#0000ab,#0000a2,#0000a4,#00009b,#000063,#4c0000,#b70000,#bb0000,#580000,#000045,#000091,#000029,#940000,#cb0000,#550000,#000052,#00005a,#940000,#de3300,#de3300,#bf0000,#2a0000,#000000,#940000,#ea6b00,#ec7700,#d81500,#550000,#000000)"></div><div style="position:absolute;left:0;top:234px;width:100%;height:6px;background:linear-gradient(90deg,#000000,#000000,#000001,#000009,#000037,#0000b3,#0077e9,#006be6,#0000a2,#00004a,#00007c,#000094,#0000b3,#000fd0,#0000b3,#000048,#3e0000,#380000,#000063,#0000c7,#0048dd,#0005cd,#0000aa,#0000a0,#0000a0,#000094,#000056,#5b0000,#b40000,#a50000,#3e0000,#000052,#000095,#00002c,#9b0000,#d40100,#580000,#000053,#00005a,#950000,#de3300,#de3300,#bf0000,#2a0000,#000000,#960000,#ea6b00,#ec7800,#d91800,#580000,#000000)"></div><div style="position:absolute;left:0;top:240px;width:100%;height:6px;background:linear-gradient(90deg,#000000,#000000,#000001,#000009,#000037,#0000b3,#0076e8,#006ae5,#0000a1,#000048,#00006f,#00008a,#0000b1,#0010d0,#0000b4,#000049,#3a0000,#340000,#000063,#0000c5,#0045dc,#0003cd,#0000a9,#00009e,#00009c,#000090,#00004d,#610000,#a90000,#8b0000,#250000,#00005c,#000099,#000030,#a00000,#d60900,#5c0000,#000054,#00005b,#950000,#de3400,#de3400,#bf0000,#2a0000,#000000,#990000,#ea6b00,#ec7900,#d91b00,#5c0000,#000000)"></div><div style="position:absolute;left:0;top:246px;width:100%;height:6px;background:linear-gradient(90deg,#000000,#000000,#000001,#000009,#000036,#0000b2,#0074e8,#0069e5,#0000a0,#000042,#000055,#000074,#0000ae,#0014d1,#0000b8,#00004f,#330000,#2d0000,#000065,#0000c6,#0047dd,#0005cd,#0000a8,#00009c,#00009b,#00008e,#000048,#610000,#980000,#700000,#0e0000,#000064,#00009c,#000034,#a40000,#d71000,#600000,#000055,#00005b,#950000,#de3400,#de3400,#bf0000,#2a0000,#000000,#9c0000,#ea6c00,#ed7a00,#da1e00,#600000,#000000)"></div><div style="position:absolute;left:0;top:252px;width:100%;height:6px;background:linear-gradient(90deg,#000000,#000000,#000001,#000009,#000036,#0000b1,#0073e8,#0067e5,#00009f,#00003b,#000034,#000056,#0000aa,#001cd3,#0000bf,#000057,#290000,#230000,#000069,#0000c8,#004edf,#0008ce,#0000a8,#00009b,#00009b,#000090,#000048,#5c0000,#820000,#540000,#000007,#000069,#00009e,#000037,#a70000,#d91600,#630000,#000057,#00005b,#950000,#de3300,#de3400,#bf0000,#2a0000,#000000,#9f0000,#ea6e00,#ed7d00,#db2200,#630000,#000000)"></div><div style="position:absolute;left:0;top:258px;width:100%;height:6px;background:linear-gradient(90deg,#000000,#000000,#000001,#000009,#000036,#0000b0,#0072e7,#0066e4,#00009e,#000032,#000011,#000035,#0000a6,#002ad6,#0003cd,#000064,#1d0000,#180000,#00006e,#0001cc,#005be2,#000fd0,#0000a8,#00009b,#00009c,#000093,#00004d,#480000,#6c0000,#2f0000,#000019,#00006b,#0000a0,#00003a,#a80000,#da1c00,#660000,#000058,#00005b,#950000,#de3300,#de3300,#bf0000,#2a0000,#000000,#a30000,#eb7000,#ee8000,#db2500,#660000,#000000)"></div><div style="position:absolute;left:0;top:264px;width:100%;height:6px;background:linear-gradient(90deg,#000000,#000000,#000001,#000009,#000036,#0000b0,#0070e7,#0065e4,#00009d,#00002b,#100000,#000013,#0000a3,#003fdb,#0020d4,#000073,#0f0000,#0d0000,#000074,#000fd0,#006ce6,#0019d2,#0000a8,#00009b,#00009f,#000099,#000057,#2b0000,#4d0000,#090000,#000029,#00006b,#0000a1,#00003c,#a90000,#da2000,#690000,#000059,#00005a,#950000,#de3300,#de3300,#bf0000,#2a0000,#000000,#a70000,#eb7400,#ef8500,#dc2800,#690000,#000000)"></div><div style="position:absolute;left:0;top:270px;width:100%;height:6px;background:linear-gradient(90deg,#000000,#000000,#000001,#000009,#000036,#0000af,#006fe7,#0063e4,#00009c,#000024,#2d0000,#0d0000,#0000a0,#0059e1,#0044dc,#000085,#010000,#020000,#00007b,#0020d4,#0081eb,#0025d5,#0000a9,#00009a,#0000a1,#0000a0,#000064,#070000,#1c0000,#000019,#000034,#000068,#0000a2,#00003d,#aa0000,#db2300,#6a0000,#00005a,#000059,#940000,#de3300,#de3300,#bf0000,#2a0000,#000000,#ab0000,#ec7900,#f08b00,#dd2c00,#6a0000,#000000)"></div><div style="position:absolute;left:0;top:276px;width:100%;height:6px;background:linear-gradient(90deg,#000000,#000000,#000001,#000009,#000035,#0000ae,#006ee6,#0062e3,#00009b,#00001d,#460000,#2b0000,#00009d,#0072e7,#0067e5,#000094,#00000b,#000008,#000082,#0033d8,#0098f0,#0032d8,#0000a9,#00009a,#0000a4,#0000a6,#000072,#00001d,#000012,#000034,#00003a,#000062,#0000a3,#00003d,#aa0000,#dc2600,#6b0000,#00005b,#000058,#940000,#de3300,#de3300,#bf0000,#2a0000,#000000,#af0000,#ee8000,#f19200,#dd2f00,#6b0000,#000000)"></div><div style="position:absolute;left:0;top:282px;width:100%;height:6px;background:linear-gradient(90deg,#000000,#000000,#000001,#000009,#000035,#0000ad,#006ce6,#0061e3,#00009a,#000019,#590000,#440000,#00009a,#0084ec,#0080eb,#00009d,#000012,#00000f,#000087,#0043dc,#00adf5,#003ddb,#0000a9,#000099,#0000a4,#0000aa,#000086,#00003c,#000030,#00003e,#000037,#000057,#0000a2,#00003b,#aa0000,#dc2800,#6c0000,#00005b,#000057,#940000,#de3300,#de3300,#bf0000,#2a0000,#000000,#b30000,#ef8700,#f39a00,#de3200,#6c0000,#000000)"></div><div style="position:absolute;left:0;top:288px;width:100%;height:6px;background:linear-gradient(90deg,#000000,#000000,#000001,#000009,#000035,#0000ad,#006be6,#005fe3,#00009a,#000015,#640000,#560000,#000095,#008aed,#0089ed,#00009c,#000013,#000011,#00008a,#004fdf,#00bbf9,#0044dc,#0000a9,#000098,#0000a3,#0000a9,#000090,#00004e,#000039,#000037,#00002a,#000049,#00009f,#000038,#aa0000,#dc2900,#6c0000,#00005b,#000055,#940000,#de3300,#de3300,#bf0000,#2a0000,#000000,#b70000,#f18e00,#f5a300,#df3500,#6c0000,#000000)"></div><div style="position:absolute;left:0;top:294px;width:100%;height:6px;background:linear-gradient(90deg,#000000,#000000,#000001,#000009,#000035,#0000ac,#006ae5,#005ee3,#000099,#000014,#690000,#5d0000,#00008f,#007dea,#007be9,#00008b,#000008,#00000e,#000089,#0052e0,#00bdf9,#0044dc,#0000a8,#000095,#00009f,#0000a3,#000089,#000047,#000025,#000018,#000011,#000035,#00009a,#000034,#aa0000,#dc2a00,#6b0000,#00005b,#000054,#940000,#de3300,#de3300,#bf0000,#2a0000,#000000,#ba0000,#f29500,#f7ac00,#df3800,#6b0000,#000000)"></div><div style="position:absolute;left:0;top:300px;width:100%;height:6px;background:linear-gradient(90deg,#000000,#000000,#000001,#000009,#000034,#0000ab,#0068e5,#005de2,#000098,#000014,#680000,#5b0000,#000087,#0060e3,#0059e1,#00006c,#0c0000,#000004,#000084,#004ade,#00b2f7,#003ada,#0000a5,#000092,#000099,#000098,#000072,#00002b,#070000,#180000,#120000,#00001d,#000092,#00002f,#aa0000,#dd2a00,#6b0000,#00005b,#000053,#940000,#de3300,#de3300,#bf0000,#2a0000,#000000,#bc0000,#f39c00,#f9b500,#e03c00,#6b0000,#000000)"></div><div style="position:absolute;left:0;top:306px;width:100%;height:6px;background:linear-gradient(90deg,#000000,#000000,#000001,#000009,#000034,#0000aa,#0067e5,#005be2,#000098,#000015,#5f0000,#500000,#00007f,#0036d9,#0027d5,#000042,#2b0000,#0c0000,#00007b,#0036d9,#0098f0,#0027d5,#0000a1,#00008d,#000090,#000087,#000051,#030000,#460000,#530000,#3e0000,#000002,#000087,#00002a,#aa0000,#dd2b00,#6a0000,#00005a,#000052,#940000,#de3300,#de3300,#bf0000,#2a0000,#000000,#be0000,#f4a100,#fabe00,#e13f00,#6a0000,#000000)"></div><div style="position:absolute;left:0;top:312px;width:100%;height:6px;background:linear-gradient(90deg,#000000,#000000,#000001,#000009,#000034,#0000aa,#0065e4,#005ae2,#000097,#000018,#510000,#3e0000,#000076,#0007ce,#0000bc,#000015,#4c0000,#1f0000,#00006e,#001ad2,#0071e7,#000ccf,#00009b,#000088,#000086,#000073,#000030,#390000,#6e0000,#770000,#660000,#1d0000,#000078,#000024,#aa0000,#dd2b00,#6a0000,#000059,#000051,#940000,#de3300,#de3300,#bf0000,#2a0000,#000000,#c00000,#f5a400,#fcc500,#e14300,#6a0000,#000000)"></div><div style="position:absolute;left:0;top:318px;width:100%;height:6px;background:linear-gradient(90deg,#000000,#000000,#000001,#000009,#000034,#0000a9,#0064e4,#0059e1,#000097,#00001c,#400000,#290000,#000070,#0000b6,#000095,#120000,#670000,#330000,#00005f,#0000c7,#0043dc,#0000c4,#000093,#000080,#000079,#00005d,#00000c,#630000,#8b0000,#980000,#820000,#3d0000,#000066,#00001e,#aa0000,#dd2b00,#6a0000,#000058,#000051,#940000,#de3300,#de3300,#bf0000,#2a0000,#000000,#c00000,#f6a600,#fdcb00,#e24700,#6a0000,#000000)"></div><div style="position:absolute;left:0;top:324px;width:100%;height:6px;background:linear-gradient(90deg,#000000,#000000,#000001,#000009,#000033,#0000a8,#0063e4,#0057e1,#000096,#00001f,#2e0000,#140000,#00006c,#0000a3,#00007e,#2e0000,#780000,#420000,#00004d,#0000b4,#0013d1,#0000b4,#000088,#000075,#00006a,#000045,#180000,#780000,#a80000,#b80000,#9e0000,#530000,#000052,#000017,#aa0000,#dd2b00,#6a0000,#000056,#000051,#940000,#de3300,#de3300,#bf0000,#2a0000,#000000,#c00000,#f6a700,#fed000,#e34a00,#6a0000,#000000)"></div><div style="position:absolute;left:0;top:330px;width:100%;height:6px;background:linear-gradient(90deg,#000000,#000000,#000001,#000009,#000033,#0000a7,#0061e3,#0056e1,#000096,#000022,#1e0000,#010000,#00006d,#000099,#000072,#390000,#7f0000,#4f0000,#000037,#00009e,#0000be,#0000a1,#000078,#000064,#000056,#00002d,#360000,#8b0000,#c30000,#d40200,#b70000,#630000,#00003e,#00000c,#aa0000,#dd2b00,#6a0000,#000055,#000051,#940000,#de3300,#de3300,#bf0000,#2a0000,#000000,#c00000,#f6a600,#ffd400,#e44e00,#6a0000,#000000)"></div><div style="position:absolute;left:0;top:336px;width:100%;height:6px;background:linear-gradient(90deg,#000000,#000000,#000001,#000008,#000033,#0000a7,#0060e3,#0055e0,#000095,#000025,#100000,#000010,#000071,#000097,#000071,#350000,#7f0000,#5c0000,#000020,#000085,#0000a6,#00008c,#000064,#000050,#000040,#000016,#4b0000,#990000,#d50400,#d91900,#cb0000,#710000,#00002a,#000005,#aa0000,#dd2b00,#6a0000,#000053,#000051,#940000,#de3300,#de3300,#bf0000,#2a0000,#000000,#c00000,#f5a500,#ffd500,#e45100,#6a0000,#000000)"></div><div style="position:absolute;left:0;top:342px;width:100%;height:6px;background:linear-gradient(90deg,#000000,#000000,#000001,#000008,#000033,#0000a6,#005fe3,#0054e0,#000095,#000027,#060000,#00001e,#000077,#00009b,#000079,#220000,#7c0000,#650000,#000009,#00006c,#00008d,#000076,#000050,#00003a,#000029,#000002,#560000,#a20000,#d71000,#dc2700,#d50300,#7a0000,#000018,#000001,#aa0000,#dd2b00,#6a0000,#000052,#000051,#940000,#de3300,#de3300,#bf0000,#2a0000,#000000,#bf0000,#f5a300,#ffd500,#e55400,#6a0000,#000000)"></div><div style="position:absolute;left:0;top:348px;width:100%;height:6px;background:linear-gradient(90deg,#000000,#000000,#000001,#000008,#000033,#0000a5,#005de2,#0052e0,#000094,#000028,#000001,#000029,#00007e,#0000a1,#000085,#0b0000,#770000,#6d0000,#0c0000,#000056,#000079,#000064,#00003f,#000027,#000016,#0c0000,#580000,#a30000,#d81300,#dc2a00,#d50500,#7d0000,#000006,#000000,#aa0000,#dd2b00,#6a0000,#000052,#000052,#940000,#de3300,#de3300,#bf0000,#2a0000,#000000,#bf0000,#f5a200,#ffd500,#e55500,#6a0000,#000000)"></div><div style="position:absolute;left:0;top:354px;width:100%;height:6px;background:linear-gradient(90deg,#000000,#000000,#000001,#000008,#000032,#0000a5,#005ce2,#0051df,#000093,#000029,#000006,#000030,#000084,#0000a7,#000092,#00000b,#710000,#740000,#1e0000,#000046,#00006c,#000059,#000034,#00001b,#00000a,#150000,#550000,#9d0000,#d60a00,#db2100,#d10000,#7b0000,#040000,#010000,#a90000,#dd2b00,#6a0000,#000051,#000052,#950000,#de3300,#de3300,#bf0000,#2a0000,#000000,#bf0000,#f4a000,#fed100,#e55600,#6a0000,#000000)"></div><div style="position:absolute;left:0;top:360px;width:100%;height:6px;background:linear-gradient(90deg,#000000,#000000,#000001,#000008,#000032,#0000a4,#005ae2,#0050df,#000093,#000029,#000009,#000035,#000088,#0000ac,#00009c,#00001f,#690000,#7a0000,#2d0000,#00003b,#000065,#000054,#00002f,#000014,#000004,#170000,#4d0000,#900000,#cd0000,#d70d00,#c00000,#730000,#060000,#040000,#a90000,#dd2b00,#6a0000,#000051,#000052,#950000,#de3300,#de3300,#bf0000,#2a0000,#000000,#bf0000,#f49e00,#fdcc00,#e55600,#6a0000,#000000)"></div><div style="position:absolute;left:0;top:366px;width:100%;height:6px;background:linear-gradient(90deg,#000000,#000000,#000001,#000008,#000032,#0000a3,#0059e1,#004edf,#000092,#000029,#00000a,#000038,#00008a,#0000af,#0000a3,#000030,#610000,#7d0000,#3c0000,#000031,#000061,#000052,#00002d,#000012,#000002,#140000,#430000,#7f0000,#b40000,#c60000,#a90000,#670000,#070000,#080000,#a90000,#dd2b00,#6a0000,#000051,#000052,#950000,#de3300,#de3300,#bf0000,#2a0000,#000000,#bf0000,#f49c00,#fcc700,#e55500,#6a0000,#000000)"></div><div style="position:absolute;left:0;top:372px;width:100%;height:6px;background:linear-gradient(90deg,#000000,#000000,#000001,#000008,#000032,#0000a2,#0058e1,#004dde,#000091,#000029,#00000b,#00003a,#00008c,#0000b0,#0000a7,#00003e,#550000,#7f0000,#4b0000,#000026,#00005b,#00004f,#00002c,#000011,#000004,#0e0000,#360000,#6a0000,#980000,#a70000,#8e0000,#580000,#0b0000,#0c0000,#a90000,#dd2b00,#6a0000,#000052,#000052,#950000,#de3300,#de3300,#bf0000,#2a0000,#000000,#bf0000,#f39a00,#fbc100,#e55300,#6a0000,#000000)"></div><div style="position:absolute;left:0;top:378px;width:100%;height:6px;background:linear-gradient(90deg,#000000,#000000,#000001,#000008,#000031,#0000a2,#0056e1,#004cde,#000091,#000029,#00000c,#00003c,#00008e,#0000b1,#0000aa,#00004a,#480000,#7f0000,#590000,#000018,#000052,#000049,#000029,#000011,#000006,#070000,#280000,#550000,#7b0000,#880000,#720000,#450000,#0e0000,#100000,#a90000,#dd2b00,#6a0000,#000052,#000052,#950000,#de3300,#de3300,#bf0000,#2a0000,#000000,#bf0000,#f39800,#fabb00,#e45100,#6a0000,#000000)"></div><div style="position:absolute;left:0;top:384px;width:100%;height:6px;background:linear-gradient(90deg,#000000,#000000,#000001,#000008,#000031,#0000a1,#0055e0,#004ade,#000090,#000029,#00000c,#00003e,#000091,#0000b5,#0000ae,#000054,#3b0000,#7c0000,#640000,#000007,#000046,#000041,#000024,#000010,#00000a,#000002,#1a0000,#400000,#600000,#6a0000,#580000,#310000,#0f0000,#110000,#a90000,#dd2b00,#6a0000,#000052,#000052,#950000,#de3300,#de3300,#bf0000,#2a0000,#000000,#bf0000,#f29600,#f9b500,#e44e00,#6a0000,#000000)"></div><div style="position:absolute;left:0;top:390px;width:100%;height:6px;background:linear-gradient(90deg,#000000,#000000,#000001,#000008,#000031,#0000a0,#0054e0,#0049dd,#00008f,#000029,#00000d,#000041,#000096,#0000bb,#0000b3,#00005d,#2e0000,#780000,#6c0000,#0c0000,#000036,#000036,#00001f,#00000f,#00000d,#00000a,#0c0000,#2d0000,#480000,#510000,#400000,#1f0000,#0e0000,#110000,#aa0000,#dd2a00,#6a0000,#000051,#000052,#940000,#de3300,#de3300,#bf0000,#2b0000,#000000,#be0000,#f29400,#f8b000,#e34b00,#6a0000,#000000)"></div><div style="position:absolute;left:0;top:396px;width:100%;height:6px;background:linear-gradient(90deg,#000000,#000000,#000001,#000008,#000031,#00009f,#0052e0,#0048dd,#00008f,#000029,#00000e,#000045,#00009d,#0000c5,#0000bb,#000067,#220000,#720000,#730000,#1e0000,#000026,#00002b,#000019,#00000e,#000011,#000013,#000001,#1d0000,#360000,#3e0000,#2c0000,#0f0000,#0a0000,#0e0000,#ab0000,#dc2a00,#6a0000,#000051,#000052,#920000,#de3300,#de3200,#bf0000,#2b0000,#000000,#bd0000,#f19100,#f7ad00,#e24700,#6a0000,#000000)"></div><div style="position:absolute;left:0;top:402px;width:100%;height:6px;background:linear-gradient(90deg,#000000,#000000,#000001,#000008,#000031,#00009f,#0051df,#0046dd,#00008e,#000029,#00000f,#00004a,#0000a6,#000ecf,#0000c6,#000072,#160000,#6b0000,#790000,#300000,#000017,#000020,#000013,#00000d,#000015,#00001c,#00000d,#100000,#290000,#310000,#1d0000,#010000,#040000,#0a0000,#ad0000,#dc2900,#6a0000,#000050,#000052,#900000,#de3300,#de3200,#bf0000,#2c0000,#000000,#bc0000,#f18e00,#f6aa00,#e14200,#6a0000,#000000)"></div><div style="position:absolute;left:0;top:408px;width:100%;height:6px;background:linear-gradient(90deg,#000000,#000000,#000001,#000008,#000030,#00009e,#0050df,#0045dd,#00008d,#000029,#000010,#00004f,#0000b1,#0034d8,#0012d0,#00007d,#0b0000,#620000,#7d0000,#3e0000,#00000c,#000019,#00000f,#00000d,#000019,#000025,#000017,#060000,#210000,#290000,#130000,#00000d,#000003,#060000,#ae0000,#dc2700,#6a0000,#00004f,#000052,#8e0000,#de3300,#de3100,#bf0000,#2d0000,#000000,#bb0000,#f08b00,#f6a700,#e13e00,#6a0000,#000000)"></div><div style="position:absolute;left:0;top:414px;width:100%;height:6px;background:linear-gradient(90deg,#000000,#000000,#000001,#000008,#000030,#00009d,#004edf,#0044dc,#00008d,#000029,#000011,#000053,#0000ba,#0057e1,#0030d7,#000088,#000000,#580000,#7f0000,#4b0000,#000004,#000015,#00000d,#00000e,#000020,#00002f,#000022,#000002,#1d0000,#250000,#0c0000,#00001a,#000007,#030000,#b00000,#dc2600,#6a0000,#00004d,#000052,#8c0000,#de3300,#de3000,#bf0000,#2f0000,#000000,#b90000,#ef8800,#f5a500,#e03a00,#6a0000,#000000)"></div><div style="position:absolute;left:0;top:420px;width:100%;height:6px;background:linear-gradient(90deg,#000000,#000000,#000001,#000008,#000030,#00009c,#004dde,#0042dc,#00008c,#000028,#000011,#000056,#0000c0,#0070e7,#0047dd,#000090,#00000a,#4d0000,#7f0000,#580000,#000003,#00001a,#000011,#000013,#000029,#00003c,#00002f,#00000a,#1a0000,#250000,#060000,#000024,#00000b,#010000,#b10000,#db2400,#6a0000,#00004b,#000052,#8a0000,#de3300,#de3000,#bf0000,#310000,#000000,#b80000,#ef8400,#f5a400,#df3600,#6a0000,#000000)"></div><div style="position:absolute;left:0;top:426px;width:100%;height:6px;background:linear-gradient(90deg,#000000,#000000,#000001,#000008,#000030,#00009c,#004bde,#0041dc,#00008b,#000028,#000011,#000057,#0000c3,#007dea,#0054e0,#000096,#000013,#410000,#7d0000,#630000,#000009,#000026,#00001a,#00001d,#000036,#00004d,#00003f,#000015,#180000,#260000,#000001,#000033,#000019,#000000,#b20000,#db2200,#6a0000,#000049,#000052,#880000,#de3300,#dd2f00,#bf0000,#330000,#000000,#b60000,#ee8000,#f5a200,#de3300,#6a0000,#000000)"></div><div style="position:absolute;left:0;top:432px;width:100%;height:6px;background:linear-gradient(90deg,#000000,#000000,#000001,#000008,#00002f,#00009b,#004ade,#0040db,#00008b,#000028,#000011,#000054,#0000c0,#0079e9,#0057e1,#00009a,#00001c,#310000,#790000,#690000,#000019,#00003e,#00002d,#00002f,#00004a,#000063,#000055,#000025,#150000,#280000,#00000b,#000046,#00002f,#000001,#b30000,#da2000,#6a0000,#000047,#000052,#860000,#de3300,#dd2e00,#bf0000,#350000,#000000,#b50000,#ed7c00,#f4a000,#de3100,#6a0000,#000000)"></div><div style="position:absolute;left:0;top:438px;width:100%;height:6px;background:linear-gradient(90deg,#000000,#000000,#000001,#000008,#00002f,#00009a,#0049dd,#003edb,#00008a,#000028,#000010,#00004d,#0000b8,#0069e5,#0053e0,#00009c,#000026,#1f0000,#730000,#680000,#000032,#00005c,#000045,#000045,#000061,#00007b,#00006d,#000039,#140000,#2f0000,#000015,#00005c,#000046,#000002,#b30000,#da1e00,#6a0000,#000045,#000052,#840000,#de3300,#dd2d00,#bf0000,#380000,#000000,#b40000,#ec7700,#f49e00,#dd2e00,#6a0000,#000000)"></div><div style="position:absolute;left:0;top:444px;width:100%;height:6px;background:linear-gradient(90deg,#000000,#000000,#000001,#000008,#00002f,#000099,#0047dd,#003ddb,#000089,#000028,#00000e,#000043,#0000a9,#0053e0,#004fdf,#0000a0,#000033,#080000,#670000,#590000,#000051,#000077,#00005b,#00005b,#000078,#000093,#000086,#00004c,#1a0000,#410000,#00001c,#000071,#00005d,#000005,#b30000,#da1b00,#6a0000,#000043,#000052,#830000,#de3300,#dd2c00,#bf0000,#3b0000,#000000,#b30000,#eb7300,#f39c00,#dd2d00,#6a0000,#000000)"></div><div style="position:absolute;left:0;top:450px;width:100%;height:6px;background:linear-gradient(90deg,#000000,#000000,#000001,#000008,#00002f,#000099,#0046dd,#003cda,#000089,#000027,#00000d,#000036,#000096,#003ddb,#004fdf,#0000a7,#000042,#000011,#470000,#2a0000,#000072,#00008a,#000068,#000069,#00008a,#0000a5,#00009b,#00005a,#290000,#5c0000,#00001c,#000084,#000074,#000009,#b30000,#d91900,#6a0000,#000041,#000052,#810000,#de3300,#dd2c00,#bf0000,#3d0000,#000000,#b30000,#eb7000,#f39a00,#dd2c00,#6a0000,#000000)"></div><div style="position:absolute;left:0;top:456px;width:100%;height:6px;background:linear-gradient(90deg,#000000,#000000,#000001,#000008,#00002f,#000098,#0045dc,#003bda,#000088,#000027,#00000b,#000029,#00007f,#002dd7,#005ae1,#0000b8,#000056,#00002c,#090000,#000018,#0000a0,#00008f,#000065,#000069,#000091,#0000b0,#0000a8,#000060,#420000,#6c0000,#000014,#000090,#00008a,#00000d,#b20000,#d91800,#6a0000,#00003f,#000052,#800000,#de3300,#dd2b00,#bf0000,#3f0000,#000000,#b20000,#ea6d00,#f39800,#dd2b00,#6a0000,#000000)"></div><div style="position:absolute;left:0;top:462px;width:100%;height:6px;background:linear-gradient(90deg,#000000,#000000,#000001,#000008,#00002e,#000097,#0043dc,#0039da,#000088,#000027,#000009,#00001d,#00006b,#0024d5,#006ce6,#0003cd,#00006d,#000048,#000034,#000062,#0006cd,#000088,#000053,#00005b,#000090,#0000b6,#0000b0,#000060,#5f0000,#7b0000,#000006,#000097,#00009d,#000010,#b20000,#d81600,#6a0000,#00003e,#000052,#800000,#de3300,#dd2b00,#bf0000,#400000,#000000,#b20000,#ea6b00,#f29600,#dd2b00,#6a0000,#000000)"></div><div style="position:absolute;left:0;top:468px;width:100%;height:6px;background:linear-gradient(90deg,#000000,#000000,#000001,#000008,#00002e,#000096,#0042dc,#0038d9,#000087,#000027,#000009,#000015,#00005c,#0021d4,#0081eb,#001fd3,#000084,#00005f,#000065,#0000a7,#002cd7,#000078,#000033,#000040,#000086,#0000b7,#0000b3,#00005a,#6a0000,#8a0000,#0d0000,#00009b,#0000ab,#000011,#b20000,#d81500,#6a0000,#00003d,#000052,#7f0000,#de3300,#dd2b00,#bf0000,#3f0000,#000000,#b20000,#e96a00,#f29500,#dd2b00,#6a0000,#000000)"></div><div style="position:absolute;left:0;top:474px;width:100%;height:6px;background:linear-gradient(90deg,#000000,#000000,#000001,#000008,#00002e,#000096,#0041db,#0037d9,#000086,#000027,#000008,#000010,#000051,#0020d4,#0091ef,#0034d8,#000098,#000070,#000088,#000fd0,#0040db,#000060,#000009,#00001b,#000077,#0000b5,#0000b4,#000053,#750000,#980000,#200000,#00009b,#0000b5,#000012,#b20000,#d81400,#6a0000,#00003c,#000052,#7f0000,#de3300,#dd2a00,#bf0000,#3e0000,#000000,#b20000,#ea6b00,#f29400,#dd2b00,#6a0000,#000000)"></div><div style="position:absolute;left:0;top:480px;width:100%;height:6px;background:linear-gradient(90deg,#000000,#000000,#000001,#000008,#00002e,#000095,#003fdb,#0035d9,#000086,#000027,#000008,#00000e,#000049,#0019d2,#0094ef,#003cda,#0000a3,#000078,#00009b,#002ad6,#003edb,#000041,#2c0000,#110000,#000063,#0000b3,#0000b4,#00004b,#800000,#a50000,#330000,#00009b,#0000bb,#000012,#b20000,#d81400,#6a0000,#00003c,#000052,#7f0000,#de3300,#dd2a00,#bf0000,#3c0000,#000000,#b20000,#ea6d00,#f29300,#dd2b00,#6a0000,#000000)"></div><div style="position:absolute;left:0;top:486px;width:100%;height:6px;background:linear-gradient(90deg,#000000,#000000,#000001,#000008,#00002d,#000094,#003edb,#0034d8,#000085,#000027,#000009,#00000d,#000043,#000fd0,#008ced,#003bda,#0000a5,#000078,#0000a4,#0030d7,#002cd6,#00001f,#600000,#430000,#00004e,#0000af,#0000b4,#000045,#880000,#b10000,#430000,#000099,#0000be,#000012,#b20000,#d81400,#6a0000,#00003c,#000052,#7f0000,#de3300,#dd2a00,#bf0000,#3a0000,#000000,#b20000,#ea6f00,#f29300,#dd2b00,#6a0000,#000000)"></div><div style="position:absolute;left:0;top:492px;width:100%;height:6px;background:linear-gradient(90deg,#000000,#000000,#000001,#000008,#00002d,#000094,#003cda,#0033d8,#000085,#000028,#00000b,#00000d,#000040,#0009ce,#0086ec,#0037d9,#00009e,#00006f,#0000a3,#0026d5,#000fd0,#040000,#740000,#660000,#000038,#0000ab,#0000b5,#00003f,#900000,#ba0000,#500000,#000098,#0000bf,#000012,#b20000,#d81500,#6a0000,#00003c,#000052,#7f0000,#de3300,#dd2b00,#bf0000,#380000,#000000,#b20000,#eb7200,#f29300,#dd2b00,#6a0000,#000000)"></div><div style="position:absolute;left:0;top:498px;width:100%;height:6px;background:linear-gradient(90deg,#000000,#000000,#000001,#000007,#00002d,#000093,#003bda,#0032d8,#000085,#000029,#00000e,#00000f,#00003f,#0005cd,#0083eb,#0033d8,#000091,#00005f,#00009e,#0015d1,#0000bd,#260000,#860000,#770000,#000022,#0000a9,#0000b5,#00003b,#950000,#c10000,#5a0000,#000097,#0000be,#000011,#b20000,#d81500,#6a0000,#00003d,#000052,#7f0000,#de3300,#dd2b00,#bf0000,#350000,#000000,#b20000,#eb7400,#f29400,#dd2b00,#6a0000,#000000)"></div><div style="position:absolute;left:0;top:504px;width:100%;height:6px;background:linear-gradient(90deg,#000000,#000000,#000001,#000007,#00002d,#000092,#003ada,#0031d8,#000085,#00002c,#000012,#000013,#000040,#0004cd,#0081eb,#002fd7,#00007e,#000049,#000095,#0003cd,#0000a2,#440000,#970000,#850000,#00000f,#0000ab,#0000b5,#000039,#980000,#c50000,#5e0000,#000097,#0000bc,#000011,#b20000,#d81500,#6a0000,#00003d,#000052,#7f0000,#de3300,#dd2b00,#bf0000,#330000,#000000,#b20000,#ec7700,#f29500,#dd2b00,#6a0000,#000000)"></div><div style="position:absolute;left:0;top:510px;width:100%;height:6px;background:linear-gradient(90deg,#000000,#000000,#000001,#000007,#00002d,#000092,#0039da,#0031d8,#000087,#000030,#000018,#000018,#000042,#0004cd,#0080eb,#0029d6,#000067,#000030,#00008b,#0000c1,#00008e,#590000,#a30000,#900000,#000001,#0000ad,#0000b5,#000038,#980000,#c50000,#5e0000,#000097,#0000b9,#000011,#b20000,#d81500,#6a0000,#00003d,#000052,#7f0000,#de3300,#dd2b00,#bf0000,#320000,#000000,#b20000,#ec7900,#f29600,#dd2a00,#6a0000,#000000)"></div><div style="position:absolute;left:0;top:516px;width:100%;height:6px;background:linear-gradient(90deg,#000000,#000000,#000001,#000007,#00002c,#000091,#0039da,#0032d8,#00008a,#000036,#000021,#000020,#000045,#0004cd,#0080eb,#0023d4,#00004f,#000015,#00007f,#0000ba,#000081,#600000,#aa0000,#960000,#080000,#0000ae,#0000b6,#00003a,#960000,#c30000,#5c0000,#000098,#0000b5,#000011,#b20000,#d81500,#6a0000,#00003d,#000051,#7f0000,#de3300,#dd2a00,#bf0000,#310000,#000000,#b20000,#ed7a00,#f39800,#dc2a00,#6a0000,#000000)"></div><div style="position:absolute;left:0;top:522px;width:100%;height:6px;background:linear-gradient(90deg,#000000,#000000,#000001,#000007,#00002c,#000091,#0039da,#0036d9,#000091,#000040,#00002f,#00002c,#00004a,#0005cd,#0080eb,#001dd3,#00003a,#040000,#000073,#0000b8,#00007b,#610000,#ab0000,#970000,#090000,#0000b1,#0000b6,#00003e,#920000,#be0000,#550000,#00009a,#0000b2,#000011,#b20000,#d81500,#6a0000,#00003d,#000051,#7f0000,#de3300,#dd2a00,#bf0000,#310000,#000000,#b20000,#ed7c00,#f39a00,#dc2900,#6a0000,#000000)"></div><div style="position:absolute;left:0;top:528px;width:100%;height:6px;background:linear-gradient(90deg,#000000,#000000,#000001,#000007,#00002c,#000091,#003bda,#003ddb,#00009c,#00004f,#000041,#00003c,#000051,#0006ce,#0080eb,#0018d2,#000027,#1b0000,#000068,#0000b7,#00007b,#5e0000,#a60000,#930000,#030000,#0000b3,#0000b7,#000043,#8c0000,#b50000,#490000,#00009d,#0000af,#000011,#b10000,#d81500,#6a0000,#00003d,#000051,#7f0000,#de3300,#dd2a00,#be0000,#310000,#000000,#b20000,#ed7d00,#f49c00,#dc2900,#6a0000,#000000)"></div><div style="position:absolute;left:0;top:534px;width:100%;height:6px;background:linear-gradient(90deg,#000000,#000000,#000001,#000007,#00002c,#00008f,#003bda,#0046dd,#0000ac,#000065,#00005a,#000051,#00005a,#0008ce,#0080eb,#0014d1,#000018,#2f0000,#00005e,#0000b8,#000081,#4e0000,#9c0000,#8a0000,#00000a,#0000b7,#0000b9,#00004b,#840000,#ab0000,#3a0000,#0000a0,#0000ac,#000011,#b20000,#d81500,#6a0000,#00003d,#000051,#7f0000,#de3300,#dd2a00,#bf0000,#320000,#000000,#b20000,#ed7e00,#f49f00,#dc2900,#6a0000,#000000)"></div><div style="position:absolute;left:0;top:540px;width:100%;height:6px;background:linear-gradient(90deg,#000000,#000000,#000001,#000007,#000029,#000087,#0030d8,#004ade,#0000be,#00007e,#000076,#00006a,#000064,#000ace,#0080eb,#0011d0,#00000d,#3e0000,#000056,#0000b8,#00008e,#330000,#8d0000,#7d0000,#00001c,#0000bc,#0000ba,#000053,#7a0000,#9e0000,#270000,#0000a4,#0000aa,#000011,#b20000,#d81500,#6a0000,#00003d,#000051,#7f0000,#de3300,#dd2a00,#bf0000,#320000,#000000,#b20000,#ee7f00,#f4a100,#dc2a00,#6a0000,#000000)"></div><div style="position:absolute;left:0;top:546px;width:100%;height:6px;background:linear-gradient(90deg,#000000,#000000,#000001,#000007,#000025,#00007a,#001fd3,#004cde,#0009ce,#000099,#000091,#000082,#00006f,#000ccf,#0080eb,#000fd0,#000006,#470000,#000051,#0000bc,#0000a0,#130000,#7b0000,#6d0000,#000031,#0000c1,#0000bc,#00005d,#6f0000,#900000,#130000,#0000a7,#0000aa,#000011,#b20000,#d81500,#6a0000,#00003d,#000052,#7f0000,#de3300,#dd2b00,#bf0000,#330000,#000000,#b20000,#ee8000,#f5a200,#dd2b00,#6a0000,#000000)"></div><div style="position:absolute;left:0;top:552px;width:100%;height:6px;background:linear-gradient(90deg,#000000,#000000,#000001,#000006,#000020,#00006a,#000ace,#0051df,#0029d6,#0000b2,#0000a9,#000097,#000079,#000ecf,#0080eb,#000ecf,#000003,#4b0000,#000050,#0000ca,#0000b9,#000011,#680000,#550000,#000049,#0000c6,#0000be,#000068,#640000,#810000,#000003,#0000ac,#0000aa,#000011,#b30000,#d81500,#6a0000,#00003d,#000052,#800000,#de3400,#dd2b00,#bf0000,#330000,#000000,#b30000,#ee8200,#f5a300,#dd2d00,#6a0000,#000000)"></div><div style="position:absolute;left:0;top:558px;width:100%;height:6px;background:linear-gradient(90deg,#000000,#000000,#000001,#000005,#00001c,#00005b,#0000c3,#005ae2,#004fdf,#0000c9,#0000ba,#0000a7,#000082,#0010d0,#0080eb,#000ecf,#000003,#490000,#000053,#0012d0,#000ccf,#000034,#410000,#220000,#000061,#0000cc,#0000c0,#000073,#4e0000,#720000,#000019,#0000b0,#0000ab,#000011,#b40000,#d81600,#6a0000,#00003d,#000052,#800000,#df3400,#dd2c00,#c00000,#330000,#000000,#b30000,#ef8400,#f5a400,#dd2e00,#6a0000,#000000)"></div><div style="position:absolute;left:0;top:564px;width:100%;height:6px;background:linear-gradient(90deg,#000000,#000000,#000001,#000005,#000018,#00004d,#0000b4,#0068e5,#0079e9,#001bd3,#0000c6,#0000b2,#000089,#0012d0,#0081eb,#000fd0,#000007,#400000,#00005a,#0028d6,#002fd7,#000057,#070000,#000010,#000078,#0004cd,#0000c1,#00007e,#2a0000,#630000,#000030,#0000b3,#0000ad,#000011,#b40000,#d81600,#6a0000,#00003d,#000053,#800000,#df3500,#dd2c00,#c00000,#330000,#000000,#b30000,#ef8600,#f5a500,#de3000,#6a0000,#000000)"></div><div style="position:absolute;left:0;top:570px;width:100%;height:6px;background:linear-gradient(90deg,#000000,#000000,#000001,#000005,#000015,#000043,#0000a9,#0077e8,#009ef2,#003ada,#0007ce,#0000b9,#00008e,#0014d1,#0081eb,#0010d0,#00000d,#330000,#000063,#003edb,#0051df,#000082,#00002b,#00003d,#00008c,#0006cd,#0000c3,#000089,#070000,#430000,#000046,#0000b6,#0000ad,#000011,#b40000,#d81600,#6a0000,#00003d,#000053,#800000,#df3500,#dd2c00,#c00000,#330000,#000000,#b40000,#ef8700,#f5a400,#de3200,#6a0000,#000000)"></div><div style="position:absolute;left:0;top:576px;width:100%;height:6px;background:linear-gradient(90deg,#000000,#000000,#000001,#000005,#000013,#00003c,#0000a1,#0080eb,#00baf8,#0052e0,#0015d1,#0000be,#000092,#0015d1,#0081eb,#0012d0,#000015,#220000,#00006e,#004fdf,#006ce6,#0000a8,#000056,#000062,#00009d,#0004cd,#0000c4,#000092,#000019,#190000,#00005a,#0000b9,#0000ac,#000011,#b40000,#d81600,#6a0000,#00003d,#000053,#800000,#df3400,#dd2c00,#c00000,#330000,#000000,#b30000,#ef8800,#f5a400,#de3300,#6a0000,#000000)"></div><div style="position:absolute;left:0;top:582px;width:100%;height:6px;background:linear-gradient(90deg,#000000,#000000,#000001,#000005,#000012,#000037,#00009a,#007fea,#00c3fb,#005de2,#001bd3,#0000bf,#000092,#0015d1,#0081eb,#0014d1,#00001e,#0e0000,#00007a,#0055e0,#0079e9,#0000c3,#000078,#000080,#0000a9,#0000c9,#0000c4,#00009a,#000036,#00000d,#00006c,#0000ba,#0000a9,#000011,#b30000,#d81500,#6a0000,#00003d,#000052,#7f0000,#de3400,#dd2b00,#bf0000,#330000,#000000,#b30000,#f08800,#f5a200,#de3300,#6a0000,#000000)"></div><div style="position:absolute;left:0;top:588px;width:100%;height:6px;background:linear-gradient(90deg,#000000,#000000,#000001,#000005,#000011,#000034,#000091,#0072e7,#00b9f8,#005ae2,#0019d2,#0000bd,#000091,#0015d1,#0082eb,#0015d1,#000027,#000005,#000084,#004edf,#0075e8,#0003cd,#000091,#000095,#0000b2,#0000c5,#0000c2,#0000a0,#00004f,#00002e,#00007b,#0000b9,#0000a4,#000010,#b10000,#d81500,#6a0000,#00003d,#000051,#7f0000,#de3200,#dc2900,#be0000,#330000,#000000,#b10000,#ef8800,#f4a100,#de3200,#6a0000,#000000)"></div><div style="position:absolute;left:0;top:594px;width:100%;height:6px;background:linear-gradient(90deg,#000000,#000000,#000001,#000005,#000011,#000031,#000087,#0057e1,#009af1,#0049dd,#000ecf,#0000b8,#00008d,#0012d0,#007fea,#0015d1,#00002f,#000015,#00008c,#0038d9,#005ee2,#0000c8,#0000a0,#0000a2,#0000b5,#0000c3,#0000be,#0000a1,#000060,#000046,#000085,#0000b6,#00009b,#00000c,#ae0000,#d81400,#6a0000,#00003d,#00004f,#7d0000,#de3000,#dc2700,#bd0000,#320000,#000000,#af0000,#ef8600,#f49e00,#de3000,#6a0000,#000000)"></div><div style="position:absolute;left:0;top:600px;width:100%;height:6px;background:linear-gradient(90deg,#000000,#000000,#000001,#000005,#000011,#00002e,#000079,#0033d8,#006ee6,#002dd7,#0000c8,#0000af,#000084,#0005cd,#006ce6,#0009ce,#000033,#000021,#00008f,#0016d1,#0038d9,#0000bb,#0000a6,#0000a7,#0000b4,#0000bc,#0000b6,#00009c,#000068,#000056,#000088,#0000b0,#000090,#000005,#ac0000,#d81400,#6a0000,#00003c,#00004c,#7d0000,#dd2e00,#dc2500,#bb0000,#320000,#000000,#ae0000,#ef8500,#f39c00,#dd2e00,#690000,#000000)"></div><div style="position:absolute;left:0;top:606px;width:100%;height:6px;background:linear-gradient(90deg,#000000,#000000,#000001,#000005,#000010,#00002a,#00006a,#0008ce,#0038d9,#0007ce,#0000b9,#0000a0,#000075,#0000b5,#0041dc,#0000b9,#00002f,#000027,#00008a,#0000c2,#0006cd,#0000b0,#00009e,#00009e,#0000a8,#0000ae,#0000a3,#000088,#00005f,#000053,#00007e,#0000a2,#00007f,#000000,#ab0000,#d81500,#6b0000,#00003a,#000048,#7d0000,#dd2d00,#db2400,#bb0000,#320000,#000000,#ad0000,#ee8300,#f39900,#dd2c00,#690000,#000000)"></div><div style="position:absolute;left:0;top:612px;width:100%;height:6px;background:linear-gradient(90deg,#000000,#000000,#000001,#000005,#00000e,#000026,#000059,#0000aa,#0000cc,#0000b1,#0000a1,#00008a,#000061,#000092,#000ace,#000092,#000026,#000025,#00007b,#0000ac,#0000af,#000096,#000085,#000087,#000091,#000094,#000082,#000063,#000041,#00003d,#000065,#00008c,#00006a,#010000,#ae0000,#d91700,#6d0000,#000036,#000042,#7e0000,#dd2d00,#db2400,#bb0000,#320000,#000000,#ad0000,#ee8100,#f39700,#dc2a00,#690000,#000000)"></div><div style="position:absolute;left:0;top:618px;width:100%;height:6px;background:linear-gradient(90deg,#000000,#000000,#000001,#000004,#00000d,#000020,#000048,#000082,#00009a,#00008a,#00007b,#000068,#000047,#00006a,#00009a,#000065,#000017,#000019,#00005e,#000087,#000084,#000067,#000058,#00005c,#00006a,#00006b,#00004f,#000028,#00000a,#00000e,#000039,#00006a,#00004f,#130000,#b40000,#da1c00,#710000,#000030,#00003a,#820000,#de2f00,#dc2600,#bc0000,#320000,#000000,#ae0000,#ee8000,#f29600,#dc2a00,#690000,#000000)"></div><div style="position:absolute;left:0;top:624px;width:100%;height:6px;background:linear-gradient(90deg,#000000,#000000,#000001,#000003,#00000b,#00001b,#000039,#00005e,#000069,#000059,#000048,#00003c,#00002a,#000043,#000060,#000037,#000004,#000008,#00003a,#000057,#00004b,#00002c,#00001e,#000027,#000039,#000038,#000012,#1d0000,#390000,#2e0000,#000004,#000041,#00002e,#2b0000,#bf0000,#db2200,#770000,#000028,#000031,#880000,#de3300,#dd2b00,#bf0000,#330000,#000000,#b20000,#ee8000,#f29500,#dd2b00,#6a0000,#000000)"></div><div style="position:absolute;left:0;top:630px;width:100%;height:6px;background:linear-gradient(90deg,#000000,#000000,#000001,#000003,#000009,#000015,#00002a,#00003f,#00003c,#000021,#00000c,#00000b,#00000c,#000020,#00002d,#00000c,#150000,#0f0000,#000015,#000025,#000010,#130000,#1f0000,#110000,#000006,#000004,#2a0000,#5b0000,#6e0000,#620000,#300000,#000017,#00000e,#4c0000,#d00000,#dd2c00,#7e0000,#00001e,#000024,#910000,#e03a00,#de3200,#c40000,#340000,#000000,#b80000,#ee8000,#f29500,#dd2e00,#6b0000,#000000)"></div><div style="position:absolute;left:0;top:636px;width:100%;height:6px;background:linear-gradient(90deg,#000000,#000000,#000001,#000002,#000007,#000010,#00001e,#000026,#000014,#140000,#300000,#260000,#120000,#000002,#000003,#1c0000,#300000,#260000,#0c0000,#050000,#230000,#490000,#550000,#430000,#270000,#2a0000,#5b0000,#810000,#940000,#840000,#580000,#0c0000,#1b0000,#6f0000,#d70e00,#df3500,#860000,#000011,#000016,#9a0000,#e14000,#e03a00,#c80000,#340000,#000000,#bf0000,#ee8000,#f29400,#de3000,#6b0000,#000000)"></div><div style="position:absolute;left:0;top:642px;width:100%;height:6px;background:linear-gradient(90deg,#000000,#000000,#000000,#000002,#000005,#00000b,#000013,#000012,#0b0000,#3e0000,#5c0000,#4d0000,#2a0000,#150000,#1d0000,#3d0000,#4b0000,#3d0000,#250000,#240000,#480000,#6e0000,#780000,#660000,#490000,#490000,#710000,#9d0000,#b20000,#9e0000,#6c0000,#280000,#470000,#910000,#da1f00,#e03c00,#8d0000,#000003,#000006,#a20000,#e24300,#e13f00,#cb0000,#350000,#010000,#c40000,#ed7c00,#f18f00,#de3100,#6b0000,#000000)"></div><div style="position:absolute;left:0;top:648px;width:100%;height:6px;background:linear-gradient(90deg,#000000,#000000,#000000,#000001,#000003,#000008,#00000b,#000004,#210000,#5a0000,#740000,#650000,#3c0000,#250000,#330000,#560000,#630000,#510000,#360000,#370000,#5e0000,#870000,#940000,#7c0000,#5d0000,#5a0000,#7c0000,#aa0000,#c00000,#aa0000,#740000,#390000,#670000,#ae0000,#dd2b00,#e03d00,#900000,#010000,#000000,#a70000,#e14200,#e13f00,#ca0000,#340000,#020000,#c50000,#eb7300,#ef8400,#dd2d00,#690000,#000000)"></div><div style="position:absolute;left:0;top:654px;width:100%;height:6px;background:linear-gradient(90deg,#000000,#000000,#000000,#000001,#000002,#000005,#000006,#050000,#2b0000,#630000,#7e0000,#6e0000,#440000,#2e0000,#3f0000,#650000,#730000,#5d0000,#3f0000,#400000,#670000,#930000,#a00000,#860000,#620000,#5a0000,#790000,#a40000,#b80000,#a30000,#6f0000,#3d0000,#7d0000,#c10000,#dd2d00,#df3600,#8f0000,#080000,#070000,#a60000,#df3900,#df3700,#c30000,#320000,#020000,#c10000,#e86200,#eb7200,#db2200,#630000,#000000)"></div><div style="position:absolute;left:0;top:660px;width:100%;height:6px;background:linear-gradient(90deg,#000000,#000000,#000000,#000000,#000001,#000003,#000002,#0a0000,#2d0000,#600000,#7a0000,#6b0000,#430000,#2f0000,#420000,#680000,#770000,#600000,#410000,#400000,#640000,#8f0000,#9c0000,#810000,#5d0000,#4f0000,#690000,#8d0000,#9e0000,#8b0000,#5f0000,#390000,#860000,#c40000,#db2200,#db2500,#870000,#100000,#0f0000,#9d0000,#dc2500,#db2500,#b50000,#2e0000,#030000,#b40000,#e24700,#e55500,#d70f00,#5b0000,#000000)"></div><div style="position:absolute;left:0;top:666px;width:100%;height:6px;background:linear-gradient(90deg,#000000,#000000,#000000,#000000,#000001,#000002,#000000,#0a0000,#280000,#520000,#690000,#5c0000,#3a0000,#2a0000,#3d0000,#5f0000,#6c0000,#570000,#3a0000,#380000,#560000,#7b0000,#860000,#6f0000,#4c0000,#3b0000,#4e0000,#6b0000,#780000,#6a0000,#470000,#2d0000,#7d0000,#b40000,#d50600,#d50500,#770000,#110000,#110000,#8b0000,#d50500,#d50500,#9e0000,#270000,#030000,#9e0000,#da2000,#dd2c00,#c50000,#4f0000,#000000)"></div><div style="position:absolute;left:0;top:672px;width:100%;height:6px;background:linear-gradient(90deg,#000000,#000000,#000000,#000000,#000000,#000001,#010000,#090000,#1f0000,#3e0000,#500000,#460000,#2d0000,#220000,#320000,#4e0000,#580000,#470000,#2f0000,#2c0000,#420000,#5e0000,#660000,#540000,#360000,#270000,#320000,#480000,#510000,#470000,#2f0000,#1f0000,#670000,#940000,#b10000,#af0000,#600000,#0b0000,#0b0000,#700000,#af0000,#af0000,#7f0000,#1f0000,#020000,#800000,#c40000,#cd0000,#9e0000,#3f0000,#000000)"></div><div style="position:absolute;left:0;top:678px;width:100%;height:6px;background:linear-gradient(90deg,#000000,#000000,#000000,#000000,#000000,#000000,#010000,#060000,#150000,#2a0000,#360000,#2f0000,#1f0000,#180000,#240000,#380000,#400000,#330000,#220000,#1f0000,#2d0000,#400000,#460000,#380000,#220000,#150000,#1b0000,#2a0000,#310000,#2b0000,#1b0000,#110000,#4b0000,#6c0000,#820000,#810000,#470000,#050000,#050000,#530000,#810000,#810000,#5e0000,#140000,#010000,#5e0000,#910000,#980000,#750000,#2f0000,#000000)"></div><div style="position:absolute;left:0;top:684px;width:100%;height:6px;background:linear-gradient(90deg,#000000,#000000,#000000,#000000,#000000,#000000,#000000,#040000,#0d0000,#190000,#210000,#1c0000,#130000,#0f0000,#170000,#240000,#290000,#210000,#150000,#130000,#1c0000,#270000,#2a0000,#210000,#120000,#090000,#0c0000,#150000,#1a0000,#170000,#0d0000,#070000,#310000,#480000,#580000,#580000,#300000,#030000,#030000,#380000,#580000,#580000,#400000,#0b0000,#000000,#400000,#640000,#680000,#500000,#200000,#000000)"></div><div style="position:absolute;left:0;top:690px;width:100%;height:6px;background:linear-gradient(90deg,#000000,#000000,#000000,#000000,#000000,#000000,#000000,#020000,#070000,#0d0000,#110000,#0f0000,#0a0000,#080000,#0d0000,#150000,#180000,#130000,#0c0000,#0a0000,#0f0000,#150000,#170000,#110000,#080000,#010000,#030000,#090000,#0c0000,#0b0000,#050000,#020000,#1f0000,#2e0000,#390000,#390000,#1f0000,#020000,#020000,#240000,#3a0000,#3a0000,#2a0000,#060000,#000000,#290000,#410000,#440000,#350000,#130000,#000000)"></div><div style="position:absolute;left:0;top:696px;width:100%;height:6px;background:linear-gradient(90deg,#000000,#000000,#000000,#000000,#000000,#000000,#000000,#010000,#030000,#060000,#080000,#070000,#050000,#040000,#070000,#0b0000,#0c0000,#0a0000,#060000,#050000,#070000,#0a0000,#0b0000,#080000,#020000,#000002,#000001,#030000,#050000,#040000,#010000,#000000,#160000,#1e0000,#240000,#240000,#110000,#020000,#020000,#150000,#240000,#240000,#1b0000,#040000,#000000,#170000,#280000,#290000,#220000,#080000,#000000)"></div><div style="position:absolute;left:0;top:702px;width:100%;height:6px;background:linear-gradient(90deg,#000000,#000000,#000000,#000000,#000000,#000000,#000000,#000000,#010000,#030000,#040000,#030000,#020000,#020000,#030000,#050000,#050000,#040000,#030000,#020000,#030000,#040000,#040000,#030000,#000000,#000003,#000002,#000000,#020000,#010000,#000001,#000001,#100000,#130000,#140000,#140000,#070000,#030000,#030000,#080000,#140000,#140000,#0d0000,#030000,#000000,#080000,#150000,#150000,#140000,#030000,#000000)"></div><div style="position:absolute;left:0;top:708px;width:100%;height:6px;background:linear-gradient(90deg,#000000,#000000,#000000,#000000,#000000,#000000,#000000,#000000,#010000,#010000,#010000,#010000,#010000,#010000,#010000,#020000,#020000,#020000,#010000,#010000,#010000,#020000,#020000,#010000,#000001,#000003,#000002,#000001,#000000,#000000,#000001,#000001,#0c0000,#0d0000,#0a0000,#0a0000,#040000,#030000,#030000,#040000,#0a0000,#0a0000,#070000,#020000,#000000,#030000,#090000,#080000,#0b0000,#020000,#000000)"></div><div style="position:absolute;left:0;top:714px;width:100%;height:6px;background:linear-gradient(90deg,#000000,#000000,#000000,#000000,#000000,#000000,#000000,#000000,#000000,#000000,#000000,#000000,#000000,#000000,#000000,#010000,#010000,#010000,#000000,#000000,#000000,#010000,#010000,#000000,#000001,#000002,#000002,#000001,#000000,#000000,#000001,#000001,#090000,#090000,#060000,#060000,#020000,#040000,#040000,#020000,#050000,#050000,#040000,#020000,#000000,#010000,#040000,#030000,#060000,#010000,#000000)"></div><div style="position:absolute;left:0;top:720px;width:100%;height:6px;background:linear-gradient(90deg,#000000,#000000,#000000,#000000,#000000,#000000,#000000,#000000,#000000,#000000,#000000,#000000,#000000,#000000,#000000,#000000,#000000,#000000,#000000,#000000,#000000,#000000,#000000,#000000,#000001,#000002,#000002,#000001,#000000,#000000,#000001,#000001,#070000,#060000,#040000,#030000,#020000,#040000,#040000,#010000,#030000,#030000,#020000,#010000,#000000,#010000,#020000,#010000,#040000,#010000,#000000)"></div></div>
<div class="abs" style="left:2042.1px;top:1739.0px;width:1017.2px;height:779.0px;border:2px solid #fff"></div>
<svg class="abs" style="left:0;top:0" width="3587" height="2747"><path d="M2175.6 2517.0v-4M2175.6 1740.0v4M2333.8 2517.0v-4M2333.8 1740.0v4M2492.0 2517.0v-4M2492.0 1740.0v4M2650.2 2517.0v-4M2650.2 1740.0v4M2808.4 2517.0v-4M2808.4 1740.0v4M2966.6 2517.0v-4M2966.6 1740.0v4M2043.1074999999998 2445.9h4M3058.3559999999998 2445.9h-4M2043.1074999999998 2366.8h4M3058.3559999999998 2366.8h-4M2043.1074999999998 2287.7h4M3058.3559999999998 2287.7h-4M2043.1074999999998 2208.6h4M3058.3559999999998 2208.6h-4M2043.1074999999998 2129.5h4M3058.3559999999998 2129.5h-4M2043.1074999999998 2050.4h4M3058.3559999999998 2050.4h-4M2043.1074999999998 1971.3h4M3058.3559999999998 1971.3h-4M2043.1074999999998 1892.2h4M3058.3559999999998 1892.2h-4M2043.1074999999998 1813.1h4M3058.3559999999998 1813.1h-4" stroke="#fff" stroke-width="2"/></svg>
<div class="abs st" style="left:1925.1px;width:101px;text-align:right;top:2431.9px">-10</div>
<div class="abs st" style="left:1925.1px;width:101px;text-align:right;top:2352.8px">0</div>
<div class="abs st" style="left:1925.1px;width:101px;text-align:right;top:2273.7px">10</div>
<div class="abs st" style="left:1925.1px;width:101px;text-align:right;top:2194.6px">20</div>
<div class="abs st" style="left:1925.1px;width:101px;text-align:right;top:2115.5px">30</div>
<div class="abs st" style="left:1925.1px;width:101px;text-align:right;top:2036.4px">40</div>
<div class="abs st" style="left:1925.1px;width:101px;text-align:right;top:1957.3px">50</div>
<div class="abs st" style="left:1925.1px;width:101px;text-align:right;top:1878.2px">60</div>
<div class="abs st" style="left:1925.1px;width:101px;text-align:right;top:1799.1px">70</div>
<div class="abs st" style="left:2115.6px;width:120px;text-align:center;top:2535px">0</div>
<div class="abs st" style="left:2273.8px;width:120px;text-align:center;top:2535px">20</div>
<div class="abs st" style="left:2432.0px;width:120px;text-align:center;top:2535px">40</div>
<div class="abs st" style="left:2590.2px;width:120px;text-align:center;top:2535px">60</div>
<div class="abs st" style="left:2748.4px;width:120px;text-align:center;top:2535px">80</div>
<div class="abs st" style="left:2906.6px;width:120px;text-align:center;top:2535px">100</div>
<div class="abs st" style="left:2490.7px;width:120px;text-align:center;top:2579px;font-size:35px;line-height:36px">x</div>
<div class="abs st" style="left:1889.1px;width:120px;text-align:center;top:2111px;font-size:35px;line-height:36px;transform:rotate(-90deg)">y</div>
<div class="abs stt" style="left:2250.7px;width:600px;text-align:center;top:1692px">scalar field ty</div>
<div class="abs" style="left:3087px;top:1743px;width:52.3px;height:771.4000000000001px;border:2px solid #fff;background:linear-gradient(180deg,#ffd500,#d40000 25%,#000 50%,#0000cc 75%,#00d5ff)"></div>
<div class="abs st" style="left:3153px;top:1736.0px">5</div>
<div class="abs st" style="left:3153px;top:1811.4px">4</div>
<div class="abs st" style="left:3153px;top:1886.7px">3</div>
<div class="abs st" style="left:3153px;top:1962.0px">2</div>
<div class="abs st" style="left:3153px;top:2037.4px">1</div>
<div class="abs st" style="left:3153px;top:2112.7px">0</div>
<div class="abs st" style="left:3153px;top:2188.0px">-1</div>
<div class="abs st" style="left:3153px;top:2263.4px">-2</div>
<div class="abs st" style="left:3153px;top:2338.7px">-3</div>
<div class="abs st" style="left:3153px;top:2414.0px">-4</div>
<div class="abs st" style="left:3153px;top:2489.4px">-5</div>
<svg class="abs" style="left:0;top:0" width="3587" height="2747"><path d="M3139.3 1752.0h-8M3139.3 1827.4h-8M3139.3 1902.7h-8M3139.3 1978.0h-8M3139.3 2053.4h-8M3139.3 2128.7h-8M3139.3 2204.0h-8M3139.3 2279.4h-8M3139.3 2354.7h-8M3139.3 2430.0h-8M3139.3 2505.4h-8" stroke="#fff" stroke-width="2"/></svg>
</div></div>
</body></html>
